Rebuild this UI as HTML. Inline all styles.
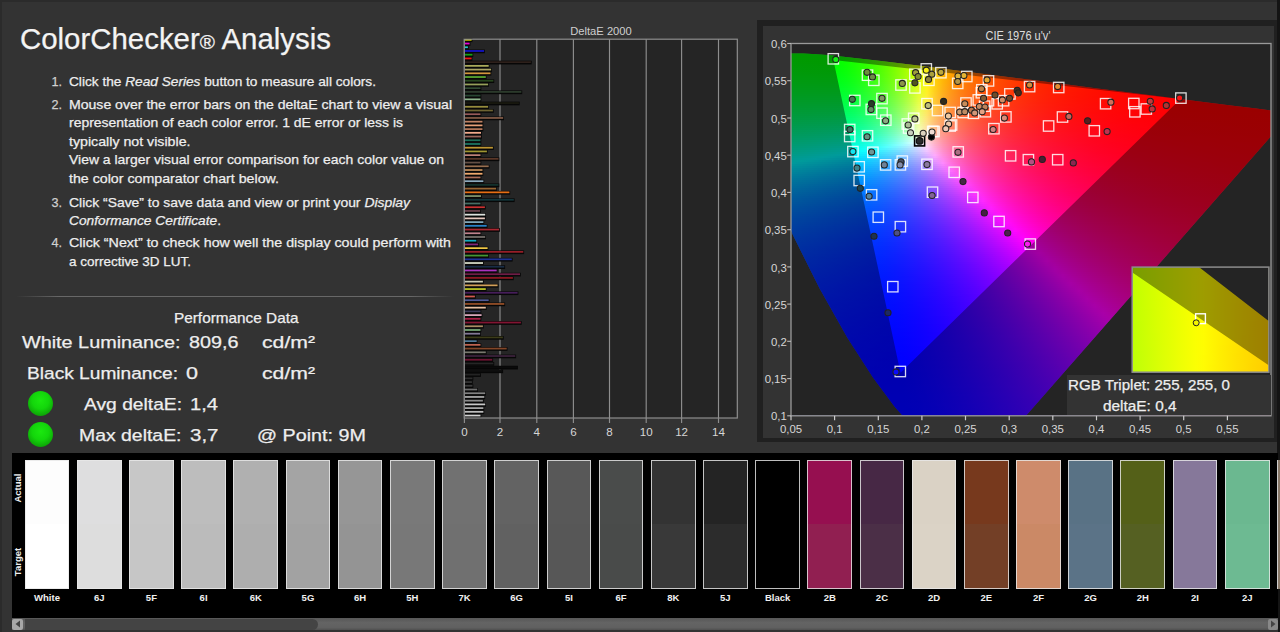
<!DOCTYPE html><html><head><meta charset="utf-8"><title>ColorChecker Analysis</title><style>
html,body{margin:0;padding:0}
body{width:1280px;height:632px;overflow:hidden;background:#333;position:relative;font-family:"Liberation Sans",sans-serif;color:#eee}
.a{position:absolute}
.t{position:absolute;white-space:nowrap;line-height:1;transform-origin:0 0;-webkit-text-stroke:0.25px currentColor}
#cf i{display:block;height:2px}
#inf i{display:block;height:2px}
svg text{font-family:"Liberation Sans",sans-serif}

</style></head><body>
<div class="a" style="left:0;top:0;width:1280px;height:2px;background:#2b2b2b"></div><div class="a" style="left:0;top:0;width:1.5px;height:632px;background:#2b2b2b"></div>
<div class="a" style="left:16px;top:295.8px;width:438px;height:1.5px;background:linear-gradient(90deg,#333,#686868 10%,#686868 90%,#333)"></div>
<div class="a" style="left:27.5px;top:390.6px;width:25px;height:25px;border-radius:50%;background:radial-gradient(circle at 50% 38%,#1be80f 0,#13d60b 42%,#0da507 76%,#097a05 100%)"></div>
<div class="a" style="left:27.5px;top:422.0px;width:25px;height:25px;border-radius:50%;background:radial-gradient(circle at 50% 38%,#1be80f 0,#13d60b 42%,#0da507 76%,#097a05 100%)"></div>
<div class="a" style="left:464.3px;top:39.2px;width:272.99999999999994px;height:378.8px;background:#252525"></div>
<svg class="a" style="left:0;top:0" width="1280" height="632" viewBox="0 0 1280 632">
<line x1="464.4" y1="39.2" x2="464.4" y2="423.0" stroke="#8e8e8e" stroke-width="1.15"/>
<text x="464.4" y="435.5" font-size="11.6" fill="#d6d6d6" text-anchor="middle">0</text>
<line x1="500.0" y1="39.2" x2="500.0" y2="423.0" stroke="#8e8e8e" stroke-width="1.15"/>
<text x="500.0" y="435.5" font-size="11.6" fill="#d6d6d6" text-anchor="middle">2</text>
<line x1="536.8" y1="39.2" x2="536.8" y2="423.0" stroke="#8e8e8e" stroke-width="1.15"/>
<text x="536.8" y="435.5" font-size="11.6" fill="#d6d6d6" text-anchor="middle">4</text>
<line x1="573.4" y1="39.2" x2="573.4" y2="423.0" stroke="#8e8e8e" stroke-width="1.15"/>
<text x="573.4" y="435.5" font-size="11.6" fill="#d6d6d6" text-anchor="middle">6</text>
<line x1="609.5" y1="39.2" x2="609.5" y2="423.0" stroke="#8e8e8e" stroke-width="1.15"/>
<text x="609.5" y="435.5" font-size="11.6" fill="#d6d6d6" text-anchor="middle">8</text>
<line x1="646.2" y1="39.2" x2="646.2" y2="423.0" stroke="#8e8e8e" stroke-width="1.15"/>
<text x="646.2" y="435.5" font-size="11.6" fill="#d6d6d6" text-anchor="middle">10</text>
<line x1="681.6" y1="39.2" x2="681.6" y2="423.0" stroke="#8e8e8e" stroke-width="1.15"/>
<text x="681.6" y="435.5" font-size="11.6" fill="#d6d6d6" text-anchor="middle">12</text>
<line x1="718.5" y1="39.2" x2="718.5" y2="423.0" stroke="#8e8e8e" stroke-width="1.15"/>
<text x="718.5" y="435.5" font-size="11.6" fill="#d6d6d6" text-anchor="middle">14</text>
<text x="601" y="34.6" font-size="11.6" fill="#cfcfcf" text-anchor="middle" textLength="61.5" lengthAdjust="spacingAndGlyphs">DeltaE 2000</text>
<rect x="464.1" y="38.40" width="8.3" height="3.7" fill="#070707"/><rect x="464.6" y="38.95" width="7.0" height="1.75" fill="#d2d200"/>
<rect x="464.1" y="42.12" width="6.3" height="3.7" fill="#070707"/><rect x="464.6" y="42.67" width="5.0" height="1.75" fill="#e600d2"/>
<rect x="464.1" y="45.84" width="4.6" height="3.7" fill="#070707"/><rect x="464.6" y="46.39" width="3.3" height="1.75" fill="#1ec8c8"/>
<rect x="464.1" y="49.56" width="20.8" height="3.7" fill="#070707"/><rect x="464.6" y="50.11" width="19.5" height="1.75" fill="#1414c8"/>
<rect x="464.1" y="53.28" width="9.2" height="3.7" fill="#070707"/><rect x="464.6" y="53.83" width="7.9" height="1.75" fill="#14a014"/>
<rect x="464.1" y="57.00" width="8.3" height="3.7" fill="#070707"/><rect x="464.6" y="57.55" width="7.0" height="1.75" fill="#f01414"/>
<rect x="464.1" y="60.72" width="67.6" height="3.7" fill="#070707"/><rect x="464.6" y="61.27" width="66.3" height="1.75" fill="#2d201b"/>
<rect x="464.1" y="64.44" width="25.4" height="3.7" fill="#070707"/><rect x="464.6" y="64.99" width="24.1" height="1.75" fill="#aaaa5a"/>
<rect x="464.1" y="68.16" width="27.8" height="3.7" fill="#070707"/><rect x="464.6" y="68.71" width="26.5" height="1.75" fill="#aaa564"/>
<rect x="464.1" y="71.88" width="27.2" height="3.7" fill="#070707"/><rect x="464.6" y="72.43" width="25.9" height="1.75" fill="#d2963c"/>
<rect x="464.1" y="75.60" width="22.5" height="3.7" fill="#070707"/><rect x="464.6" y="76.15" width="21.2" height="1.75" fill="#5aaa32"/>
<rect x="464.1" y="79.32" width="30.1" height="3.7" fill="#070707"/><rect x="464.6" y="79.87" width="28.8" height="1.75" fill="#28461e"/>
<rect x="464.1" y="83.04" width="24.8" height="3.7" fill="#070707"/><rect x="464.6" y="83.59" width="23.5" height="1.75" fill="#96a05a"/>
<rect x="464.1" y="86.76" width="17.2" height="3.7" fill="#070707"/><rect x="464.6" y="87.31" width="15.9" height="1.75" fill="#324b32"/>
<rect x="464.1" y="90.48" width="58.1" height="3.7" fill="#070707"/><rect x="464.6" y="91.03" width="56.8" height="1.75" fill="#2d3c2d"/>
<rect x="464.1" y="94.20" width="17.2" height="3.7" fill="#070707"/><rect x="464.6" y="94.75" width="15.9" height="1.75" fill="#284632"/>
<rect x="464.1" y="97.92" width="17.2" height="3.7" fill="#070707"/><rect x="464.6" y="98.47" width="15.9" height="1.75" fill="#8cb48c"/>
<rect x="464.1" y="101.64" width="55.6" height="3.7" fill="#070707"/><rect x="464.6" y="102.19" width="54.3" height="1.75" fill="#19190f"/>
<rect x="464.1" y="105.36" width="24.8" height="3.7" fill="#070707"/><rect x="464.6" y="105.91" width="23.5" height="1.75" fill="#968c3c"/>
<rect x="464.1" y="109.08" width="29.6" height="3.7" fill="#070707"/><rect x="464.6" y="109.63" width="28.3" height="1.75" fill="#6e6432"/>
<rect x="464.1" y="112.80" width="17.2" height="3.7" fill="#070707"/><rect x="464.6" y="113.35" width="15.9" height="1.75" fill="#965a5a"/>
<rect x="464.1" y="116.52" width="39.9" height="3.7" fill="#070707"/><rect x="464.6" y="117.07" width="38.6" height="1.75" fill="#825a46"/>
<rect x="464.1" y="120.24" width="19.2" height="3.7" fill="#070707"/><rect x="464.6" y="120.79" width="17.9" height="1.75" fill="#be8264"/>
<rect x="464.1" y="123.96" width="19.2" height="3.7" fill="#070707"/><rect x="464.6" y="124.51" width="17.9" height="1.75" fill="#e6a078"/>
<rect x="464.1" y="127.68" width="19.2" height="3.7" fill="#070707"/><rect x="464.6" y="128.23" width="17.9" height="1.75" fill="#b4785a"/>
<rect x="464.1" y="131.40" width="17.7" height="3.7" fill="#070707"/><rect x="464.6" y="131.95" width="16.4" height="1.75" fill="#f0aa8c"/>
<rect x="464.1" y="135.12" width="17.7" height="3.7" fill="#070707"/><rect x="464.6" y="135.67" width="16.4" height="1.75" fill="#96645a"/>
<rect x="464.1" y="138.84" width="17.2" height="3.7" fill="#070707"/><rect x="464.6" y="139.39" width="15.9" height="1.75" fill="#1e6e5a"/>
<rect x="464.1" y="142.56" width="17.2" height="3.7" fill="#070707"/><rect x="464.6" y="143.11" width="15.9" height="1.75" fill="#1e7864"/>
<rect x="464.1" y="146.28" width="29.6" height="3.7" fill="#070707"/><rect x="464.6" y="146.83" width="28.3" height="1.75" fill="#be9632"/>
<rect x="464.1" y="150.00" width="23.6" height="3.7" fill="#070707"/><rect x="464.6" y="150.55" width="22.3" height="1.75" fill="#a09632"/>
<rect x="464.1" y="153.72" width="17.2" height="3.7" fill="#070707"/><rect x="464.6" y="154.27" width="15.9" height="1.75" fill="#be8278"/>
<rect x="464.1" y="157.44" width="35.2" height="3.7" fill="#070707"/><rect x="464.6" y="157.99" width="33.9" height="1.75" fill="#5a3728"/>
<rect x="464.1" y="161.16" width="17.2" height="3.7" fill="#070707"/><rect x="464.6" y="161.71" width="15.9" height="1.75" fill="#645046"/>
<rect x="464.1" y="164.88" width="25.4" height="3.7" fill="#070707"/><rect x="464.6" y="165.43" width="24.1" height="1.75" fill="#966e50"/>
<rect x="464.1" y="168.60" width="19.2" height="3.7" fill="#070707"/><rect x="464.6" y="169.15" width="17.9" height="1.75" fill="#be8c5a"/>
<rect x="464.1" y="172.32" width="19.2" height="3.7" fill="#070707"/><rect x="464.6" y="172.87" width="17.9" height="1.75" fill="#f0aa6e"/>
<rect x="464.1" y="176.04" width="17.2" height="3.7" fill="#070707"/><rect x="464.6" y="176.59" width="15.9" height="1.75" fill="#aa6e5a"/>
<rect x="464.1" y="179.76" width="20.1" height="3.7" fill="#070707"/><rect x="464.6" y="180.31" width="18.8" height="1.75" fill="#8caabe"/>
<rect x="464.1" y="183.48" width="35.2" height="3.7" fill="#070707"/><rect x="464.6" y="184.03" width="33.9" height="1.75" fill="#14322d"/>
<rect x="464.1" y="187.20" width="32.8" height="3.7" fill="#070707"/><rect x="464.6" y="187.75" width="31.5" height="1.75" fill="#966432"/>
<rect x="464.1" y="190.92" width="46.1" height="3.7" fill="#070707"/><rect x="464.6" y="191.47" width="44.8" height="1.75" fill="#e66e14"/>
<rect x="464.1" y="194.64" width="17.7" height="3.7" fill="#070707"/><rect x="464.6" y="195.19" width="16.4" height="1.75" fill="#82966e"/>
<rect x="464.1" y="198.36" width="50.5" height="3.7" fill="#070707"/><rect x="464.6" y="198.91" width="49.2" height="1.75" fill="#14373c"/>
<rect x="464.1" y="202.08" width="17.2" height="3.7" fill="#070707"/><rect x="464.6" y="202.63" width="15.9" height="1.75" fill="#466e64"/>
<rect x="464.1" y="205.80" width="21.6" height="3.7" fill="#070707"/><rect x="464.6" y="206.35" width="20.3" height="1.75" fill="#c83232"/>
<rect x="464.1" y="209.52" width="16.8" height="3.7" fill="#070707"/><rect x="464.6" y="210.07" width="15.5" height="1.75" fill="#6e4650"/>
<rect x="464.1" y="213.24" width="21.9" height="3.7" fill="#070707"/><rect x="464.6" y="213.79" width="20.6" height="1.75" fill="#dce1dc"/>
<rect x="464.1" y="216.96" width="21.6" height="3.7" fill="#070707"/><rect x="464.6" y="217.51" width="20.3" height="1.75" fill="#e6c8be"/>
<rect x="464.1" y="220.68" width="20.1" height="3.7" fill="#070707"/><rect x="464.6" y="221.23" width="18.8" height="1.75" fill="#82aabe"/>
<rect x="464.1" y="224.40" width="23.4" height="3.7" fill="#070707"/><rect x="464.6" y="224.95" width="22.1" height="1.75" fill="#2882c8"/>
<rect x="464.1" y="228.12" width="35.8" height="3.7" fill="#070707"/><rect x="464.6" y="228.67" width="34.5" height="1.75" fill="#aa2832"/>
<rect x="464.1" y="231.84" width="17.2" height="3.7" fill="#070707"/><rect x="464.6" y="232.39" width="15.9" height="1.75" fill="#be828c"/>
<rect x="464.1" y="235.56" width="21.9" height="3.7" fill="#070707"/><rect x="464.6" y="236.11" width="20.6" height="1.75" fill="#78736e"/>
<rect x="464.1" y="239.28" width="13.0" height="3.7" fill="#070707"/><rect x="464.6" y="239.83" width="11.7" height="1.75" fill="#14aabe"/>
<rect x="464.1" y="243.00" width="14.8" height="3.7" fill="#070707"/><rect x="464.6" y="243.55" width="13.5" height="1.75" fill="#822878"/>
<rect x="464.1" y="246.72" width="24.3" height="3.7" fill="#070707"/><rect x="464.6" y="247.27" width="23.0" height="1.75" fill="#f0c846"/>
<rect x="464.1" y="250.44" width="60.0" height="3.7" fill="#070707"/><rect x="464.6" y="250.99" width="58.7" height="1.75" fill="#961e28"/>
<rect x="464.1" y="254.16" width="24.8" height="3.7" fill="#070707"/><rect x="464.6" y="254.71" width="23.5" height="1.75" fill="#469632"/>
<rect x="464.1" y="257.88" width="48.5" height="3.7" fill="#070707"/><rect x="464.6" y="258.43" width="47.2" height="1.75" fill="#1e3296"/>
<rect x="464.1" y="261.60" width="19.7" height="3.7" fill="#070707"/><rect x="464.6" y="262.15" width="18.4" height="1.75" fill="#d7dcc8"/>
<rect x="464.1" y="265.32" width="41.0" height="3.7" fill="#070707"/><rect x="464.6" y="265.87" width="39.7" height="1.75" fill="#192d46"/>
<rect x="464.1" y="269.04" width="33.4" height="3.7" fill="#070707"/><rect x="464.6" y="269.59" width="32.1" height="1.75" fill="#aa32be"/>
<rect x="464.1" y="272.76" width="56.7" height="3.7" fill="#070707"/><rect x="464.6" y="273.31" width="55.4" height="1.75" fill="#6e1e46"/>
<rect x="464.1" y="276.48" width="49.6" height="3.7" fill="#070707"/><rect x="464.6" y="277.03" width="48.3" height="1.75" fill="#8c1923"/>
<rect x="464.1" y="280.20" width="19.6" height="3.7" fill="#070707"/><rect x="464.6" y="280.75" width="18.3" height="1.75" fill="#c8c8b4"/>
<rect x="464.1" y="283.92" width="34.3" height="3.7" fill="#070707"/><rect x="464.6" y="284.47" width="33.0" height="1.75" fill="#d2a05a"/>
<rect x="464.1" y="287.64" width="22.5" height="3.7" fill="#070707"/><rect x="464.6" y="288.19" width="21.2" height="1.75" fill="#bec828"/>
<rect x="464.1" y="291.36" width="54.3" height="3.7" fill="#070707"/><rect x="464.6" y="291.91" width="53.0" height="1.75" fill="#461e5a"/>
<rect x="464.1" y="295.08" width="11.6" height="3.7" fill="#070707"/><rect x="464.6" y="295.63" width="10.3" height="1.75" fill="#d25a50"/>
<rect x="464.1" y="298.80" width="25.4" height="3.7" fill="#070707"/><rect x="464.6" y="299.35" width="24.1" height="1.75" fill="#505a96"/>
<rect x="464.1" y="302.52" width="41.0" height="3.7" fill="#070707"/><rect x="464.6" y="303.07" width="39.7" height="1.75" fill="#965028"/>
<rect x="464.1" y="306.24" width="22.5" height="3.7" fill="#070707"/><rect x="464.6" y="306.79" width="21.2" height="1.75" fill="#e6bea0"/>
<rect x="464.1" y="309.96" width="17.2" height="3.7" fill="#070707"/><rect x="464.6" y="310.51" width="15.9" height="1.75" fill="#3c3c5a"/>
<rect x="464.1" y="313.68" width="18.3" height="3.7" fill="#070707"/><rect x="464.6" y="314.23" width="17.0" height="1.75" fill="#dcaabe"/>
<rect x="464.1" y="317.40" width="17.2" height="3.7" fill="#070707"/><rect x="464.6" y="317.95" width="15.9" height="1.75" fill="#aa1e46"/>
<rect x="464.1" y="321.12" width="57.6" height="3.7" fill="#070707"/><rect x="464.6" y="321.67" width="56.3" height="1.75" fill="#821432"/>
<rect x="464.1" y="324.84" width="19.6" height="3.7" fill="#070707"/><rect x="464.6" y="325.39" width="18.3" height="1.75" fill="#aa8c64"/>
<rect x="464.1" y="328.56" width="17.2" height="3.7" fill="#070707"/><rect x="464.6" y="329.11" width="15.9" height="1.75" fill="#78aa78"/>
<rect x="464.1" y="332.28" width="16.8" height="3.7" fill="#070707"/><rect x="464.6" y="332.83" width="15.5" height="1.75" fill="#827896"/>
<rect x="464.1" y="336.00" width="39.6" height="3.7" fill="#070707"/><rect x="464.6" y="336.55" width="38.3" height="1.75" fill="#3c3c19"/>
<rect x="464.1" y="339.72" width="13.4" height="3.7" fill="#070707"/><rect x="464.6" y="340.27" width="12.1" height="1.75" fill="#507896"/>
<rect x="464.1" y="343.44" width="17.2" height="3.7" fill="#070707"/><rect x="464.6" y="343.99" width="15.9" height="1.75" fill="#be6450"/>
<rect x="464.1" y="347.16" width="43.4" height="3.7" fill="#070707"/><rect x="464.6" y="347.71" width="42.1" height="1.75" fill="#824628"/>
<rect x="464.1" y="350.88" width="22.5" height="3.7" fill="#070707"/><rect x="464.6" y="351.43" width="21.2" height="1.75" fill="#78786e"/>
<rect x="464.1" y="354.60" width="52.0" height="3.7" fill="#070707"/><rect x="464.6" y="355.15" width="50.7" height="1.75" fill="#3c233c"/>
<rect x="464.1" y="358.32" width="29.0" height="3.7" fill="#070707"/><rect x="464.6" y="358.87" width="27.7" height="1.75" fill="#6e1432"/>
<rect x="464.1" y="362.04" width="30.1" height="3.7" fill="#070707"/><rect x="464.6" y="362.59" width="28.8" height="1.75" fill="#262626"/>
<rect x="464.1" y="365.76" width="53.8" height="3.7" fill="#070707"/><rect x="464.6" y="366.31" width="52.5" height="1.75" fill="#0a0a0a"/>
<rect x="464.1" y="369.48" width="39.0" height="3.7" fill="#070707"/><rect x="464.6" y="370.03" width="37.7" height="1.75" fill="#0f0f0f"/>
<rect x="464.1" y="373.20" width="16.8" height="3.7" fill="#070707"/><rect x="464.6" y="373.75" width="15.5" height="1.75" fill="#232323"/>
<rect x="464.1" y="376.92" width="9.2" height="3.7" fill="#070707"/><rect x="464.6" y="377.47" width="7.9" height="1.75" fill="#2d2d2d"/>
<rect x="464.1" y="380.64" width="8.6" height="3.7" fill="#070707"/><rect x="464.6" y="381.19" width="7.3" height="1.75" fill="#373737"/>
<rect x="464.1" y="384.36" width="9.2" height="3.7" fill="#070707"/><rect x="464.6" y="384.91" width="7.9" height="1.75" fill="#3c3c3c"/>
<rect x="464.1" y="388.08" width="13.9" height="3.7" fill="#070707"/><rect x="464.6" y="388.63" width="12.6" height="1.75" fill="#6e6e6e"/>
<rect x="464.1" y="391.80" width="21.9" height="3.7" fill="#070707"/><rect x="464.6" y="392.35" width="20.6" height="1.75" fill="#828282"/>
<rect x="464.1" y="395.52" width="21.0" height="3.7" fill="#070707"/><rect x="464.6" y="396.07" width="19.7" height="1.75" fill="#aaaaaa"/>
<rect x="464.1" y="399.24" width="19.6" height="3.7" fill="#070707"/><rect x="464.6" y="399.79" width="18.3" height="1.75" fill="#8c8c8c"/>
<rect x="464.1" y="402.96" width="21.9" height="3.7" fill="#070707"/><rect x="464.6" y="403.51" width="20.6" height="1.75" fill="#c8c8c8"/>
<rect x="464.1" y="406.68" width="20.1" height="3.7" fill="#070707"/><rect x="464.6" y="407.23" width="18.8" height="1.75" fill="#aaaaaa"/>
<rect x="464.1" y="410.40" width="20.1" height="3.7" fill="#070707"/><rect x="464.6" y="410.95" width="18.8" height="1.75" fill="#bebebe"/>
<rect x="464.1" y="414.12" width="17.2" height="3.7" fill="#070707"/><rect x="464.6" y="414.67" width="15.9" height="1.75" fill="#d2d2d2"/>
<rect x="464.3" y="39.2" width="272.99999999999994" height="378.8" fill="none" stroke="#8e8e8e" stroke-width="1.2"/>
</svg>
<div class="a" style="left:757px;top:20px;width:520.5px;height:422px;background:#202020"></div>
<div class="a" style="left:762.5px;top:25.5px;width:511.5px;height:412px;background:#333"></div>
<div class="a" style="left:791.0px;top:43.5px;width:480.0px;height:372.3px;background:#242424"></div>
<div class="a" style="left:1277px;top:0;width:3px;height:632px;background:#141414"></div>
<div class="a" style="left:791px;top:50px;width:480.0px;height:365.8px;overflow:hidden"><div id="cf" style="width:488px"><i style="background:linear-gradient(90deg,#00ff00,#00ff00,#00ff00,#00ff00,#00ff00,#00ff00,#06ff00,#10ff00,#1dff00,#2cff00,#3eff00,#52ff00,#68ff00,#80ff00,#9bff00,#b8ff00,#d8ff00,#fcff00,#ffe000,#ffc300,#ffab00,#ff9700,#ff8600,#ff7700,#ff6a00,#ff5f00,#ff5500,#ff4c00,#ff4400,#ff3d00,#ff3700,#ff3200,#ff2c00,#ff2800,#ff2400,#ff2000,#ff1d00,#ff1900,#ff1700,#ff1400,#ff1200,#ff1000,#ff0e00,#ff0c00,#ff0a00,#ff0900,#ff0700,#ff0600,#ff0500,#ff0400,#ff0300,#ff0200,#ff0100,#ff0100,#ff0000,#ff0000,#ff0000,#ff0000,#ff0000,#ff0000,#ff0000,#ff0000)"></i><i style="background:linear-gradient(90deg,#00ff00,#00ff00,#00ff00,#00ff00,#00ff00,#00ff00,#06ff00,#10ff00,#1dff00,#2cff00,#3eff00,#51ff00,#67ff00,#80ff00,#9bff00,#b8ff00,#d9ff00,#fdff00,#ffdf00,#ffc200,#ffab00,#ff9600,#ff8500,#ff7600,#ff6900,#ff5e00,#ff5400,#ff4b00,#ff4400,#ff3d00,#ff3700,#ff3100,#ff2c00,#ff2700,#ff2300,#ff2000,#ff1c00,#ff1900,#ff1600,#ff1400,#ff1100,#ff0f00,#ff0d00,#ff0b00,#ff0a00,#ff0800,#ff0700,#ff0600,#ff0500,#ff0400,#ff0300,#ff0200,#ff0100,#ff0100,#ff0000,#ff0000,#ff0000,#ff0000,#ff0000,#ff0000,#ff0000,#ff0000)"></i><i style="background:linear-gradient(90deg,#00ff00,#00ff00,#00ff00,#00ff00,#00ff00,#00ff00,#05ff00,#0fff00,#1cff00,#2cff00,#3dff00,#51ff00,#67ff00,#80ff00,#9bff00,#b9ff00,#d9ff00,#fdff00,#ffde00,#ffc200,#ffaa00,#ff9600,#ff8400,#ff7600,#ff6900,#ff5d00,#ff5400,#ff4b00,#ff4300,#ff3c00,#ff3600,#ff3000,#ff2b00,#ff2700,#ff2300,#ff1f00,#ff1c00,#ff1900,#ff1600,#ff1300,#ff1100,#ff0f00,#ff0d00,#ff0b00,#ff0900,#ff0800,#ff0700,#ff0500,#ff0400,#ff0300,#ff0200,#ff0200,#ff0100,#ff0000,#ff0000,#ff0000,#ff0000,#ff0000,#ff0000,#ff0000,#ff0000,#ff0000)"></i><i style="background:linear-gradient(90deg,#00ff01,#00ff00,#00ff00,#00ff00,#00ff00,#00ff00,#05ff00,#0fff00,#1cff00,#2bff00,#3dff00,#51ff00,#67ff00,#80ff00,#9bff00,#b9ff00,#daff00,#feff00,#ffdd00,#ffc100,#ffa900,#ff9500,#ff8400,#ff7500,#ff6800,#ff5d00,#ff5300,#ff4a00,#ff4200,#ff3c00,#ff3500,#ff3000,#ff2b00,#ff2600,#ff2200,#ff1f00,#ff1b00,#ff1800,#ff1500,#ff1300,#ff1100,#ff0e00,#ff0d00,#ff0b00,#ff0900,#ff0800,#ff0600,#ff0500,#ff0400,#ff0300,#ff0200,#ff0200,#ff0100,#ff0000,#ff0000,#ff0000,#ff0000,#ff0000,#ff0000,#ff0000,#ff0000,#ff0000)"></i><i style="background:linear-gradient(90deg,#00ff02,#00ff01,#00ff01,#00ff00,#00ff00,#00ff00,#04ff00,#0eff00,#1bff00,#2bff00,#3cff00,#50ff00,#67ff00,#7fff00,#9bff00,#b9ff00,#dbff00,#ffff00,#ffdc00,#ffc000,#ffa800,#ff9400,#ff8300,#ff7400,#ff6700,#ff5c00,#ff5200,#ff4900,#ff4200,#ff3b00,#ff3500,#ff2f00,#ff2a00,#ff2600,#ff2200,#ff1e00,#ff1b00,#ff1800,#ff1500,#ff1300,#ff1000,#ff0e00,#ff0c00,#ff0a00,#ff0900,#ff0700,#ff0600,#ff0500,#ff0400,#ff0300,#ff0200,#ff0100,#ff0100,#ff0000,#ff0000,#ff0000,#ff0000,#ff0000,#ff0000,#ff0000,#ff0000,#ff0000)"></i><i style="background:linear-gradient(90deg,#00ff03,#00ff03,#00ff02,#00ff02,#00ff01,#00ff00,#04ff00,#0eff00,#1bff00,#2aff00,#3cff00,#50ff00,#66ff00,#7fff00,#9bff00,#b9ff00,#dbff00,#fffe00,#ffdc00,#ffbf00,#ffa700,#ff9300,#ff8200,#ff7300,#ff6600,#ff5b00,#ff5100,#ff4900,#ff4100,#ff3a00,#ff3400,#ff2f00,#ff2a00,#ff2500,#ff2100,#ff1e00,#ff1a00,#ff1700,#ff1500,#ff1200,#ff1000,#ff0e00,#ff0c00,#ff0a00,#ff0900,#ff0700,#ff0600,#ff0500,#ff0400,#ff0300,#ff0200,#ff0100,#ff0100,#ff0000,#ff0000,#ff0000,#ff0000,#ff0000,#ff0000,#ff0000,#ff0000,#ff0000)"></i><i style="background:linear-gradient(90deg,#00ff05,#00ff05,#00ff04,#00ff03,#00ff02,#00ff02,#04ff01,#0dff01,#1aff00,#2aff00,#3bff00,#4fff00,#66ff00,#7fff00,#9bff00,#baff00,#dcff00,#fffd00,#ffdb00,#ffbe00,#ffa600,#ff9200,#ff8100,#ff7200,#ff6600,#ff5a00,#ff5100,#ff4800,#ff4000,#ff3a00,#ff3400,#ff2e00,#ff2900,#ff2500,#ff2100,#ff1d00,#ff1a00,#ff1700,#ff1400,#ff1200,#ff0f00,#ff0d00,#ff0c00,#ff0a00,#ff0800,#ff0700,#ff0600,#ff0400,#ff0300,#ff0300,#ff0200,#ff0100,#ff0000,#ff0000,#ff0000,#ff0000,#ff0000,#ff0000,#ff0000,#ff0000,#ff0000,#ff0000)"></i><i style="background:linear-gradient(90deg,#00ff07,#00ff06,#00ff06,#00ff05,#00ff04,#00ff04,#03ff03,#0dff02,#1aff01,#29ff01,#3bff00,#4fff00,#66ff00,#7fff00,#9bff00,#baff00,#dcff00,#fffd00,#ffda00,#ffbd00,#ffa500,#ff9100,#ff8000,#ff7100,#ff6500,#ff5a00,#ff5000,#ff4700,#ff4000,#ff3900,#ff3300,#ff2e00,#ff2900,#ff2400,#ff2000,#ff1d00,#ff1900,#ff1600,#ff1400,#ff1100,#ff0f00,#ff0d00,#ff0b00,#ff0a00,#ff0800,#ff0700,#ff0500,#ff0400,#ff0300,#ff0200,#ff0200,#ff0100,#ff0000,#ff0000,#ff0000,#ff0000,#ff0000,#ff0000,#ff0000,#ff0000,#ff0000,#ff0000)"></i><i style="background:linear-gradient(90deg,#00ff09,#00ff09,#00ff08,#00ff07,#00ff06,#00ff06,#03ff05,#0cff04,#19ff03,#29ff02,#3aff02,#4fff01,#66ff00,#7fff00,#9bff00,#baff00,#ddff00,#fffc00,#ffd900,#ffbc00,#ffa400,#ff9000,#ff7f00,#ff7100,#ff6400,#ff5900,#ff4f00,#ff4700,#ff3f00,#ff3800,#ff3200,#ff2d00,#ff2800,#ff2400,#ff2000,#ff1c00,#ff1900,#ff1600,#ff1300,#ff1100,#ff0f00,#ff0d00,#ff0b00,#ff0900,#ff0800,#ff0600,#ff0500,#ff0400,#ff0300,#ff0200,#ff0100,#ff0100,#ff0000,#ff0000,#ff0000,#ff0000,#ff0000,#ff0000,#ff0000,#ff0000,#ff0000,#ff0000)"></i><i style="background:linear-gradient(90deg,#00ff0c,#00ff0b,#00ff0a,#00ff09,#00ff09,#00ff08,#02ff07,#0cff06,#19ff05,#28ff04,#3aff04,#4eff03,#65ff02,#7fff01,#9bff01,#bbff00,#ddff00,#fffb00,#ffd800,#ffbb00,#ffa400,#ff9000,#ff7e00,#ff7000,#ff6300,#ff5800,#ff4e00,#ff4600,#ff3e00,#ff3800,#ff3200,#ff2c00,#ff2800,#ff2300,#ff1f00,#ff1c00,#ff1900,#ff1600,#ff1300,#ff1100,#ff0e00,#ff0c00,#ff0b00,#ff0900,#ff0700,#ff0600,#ff0500,#ff0400,#ff0300,#ff0200,#ff0100,#ff0100,#ff0000,#ff0000,#ff0000,#ff0000,#ff0000,#ff0000,#ff0000,#ff0000,#ff0000,#ff0000)"></i><i style="background:linear-gradient(90deg,#00ff0e,#00ff0d,#00ff0c,#00ff0c,#00ff0b,#00ff0a,#02ff09,#0bff09,#18ff08,#28ff07,#39ff06,#4eff05,#65ff04,#7fff03,#9bff02,#bbff02,#deff01,#fffa00,#ffd700,#ffba00,#ffa300,#ff8f00,#ff7e00,#ff6f00,#ff6200,#ff5700,#ff4e00,#ff4500,#ff3e00,#ff3700,#ff3100,#ff2c00,#ff2700,#ff2300,#ff1f00,#ff1b00,#ff1800,#ff1500,#ff1300,#ff1000,#ff0e00,#ff0c00,#ff0a00,#ff0900,#ff0700,#ff0600,#ff0500,#ff0400,#ff0300,#ff0200,#ff0100,#ff0000,#ff0000,#ff0000,#ff0000,#ff0000,#ff0000,#ff0000,#ff0000,#ff0000,#ff0000,#ff0000)"></i><i style="background:linear-gradient(90deg,#00ff10,#00ff10,#00ff0f,#00ff0e,#00ff0e,#00ff0d,#02ff0c,#0bff0b,#18ff0a,#27ff09,#39ff09,#4eff08,#65ff07,#7fff06,#9bff05,#bbff04,#deff03,#fff902,#ffd601,#ffba00,#ffa200,#ff8e00,#ff7d00,#ff6e00,#ff6200,#ff5700,#ff4d00,#ff4500,#ff3d00,#ff3600,#ff3100,#ff2b00,#ff2600,#ff2200,#ff1e00,#ff1b00,#ff1800,#ff1500,#ff1200,#ff1000,#ff0e00,#ff0c00,#ff0a00,#ff0800,#ff0700,#ff0600,#ff0400,#ff0300,#ff0200,#ff0200,#ff0100,#ff0000,#ff0000,#ff0000,#ff0000,#ff0000,#ff0000,#ff0000,#ff0000,#ff0000,#ff0000,#ff0000)"></i><i style="background:linear-gradient(90deg,#00ff13,#00ff12,#00ff12,#00ff11,#00ff10,#00ff10,#01ff0f,#0aff0e,#17ff0d,#26ff0c,#39ff0b,#4dff0a,#64ff09,#7eff08,#9bff08,#bbff06,#dfff05,#fff804,#ffd503,#ffb902,#ffa101,#ff8d00,#ff7c00,#ff6d00,#ff6100,#ff5600,#ff4c00,#ff4400,#ff3c00,#ff3600,#ff3000,#ff2b00,#ff2600,#ff2200,#ff1e00,#ff1a00,#ff1700,#ff1400,#ff1200,#ff0f00,#ff0d00,#ff0b00,#ff0a00,#ff0800,#ff0700,#ff0500,#ff0400,#ff0300,#ff0200,#ff0100,#ff0100,#ff0000,#ff0000,#ff0000,#ff0000,#ff0000,#ff0000,#ff0000,#ff0000,#ff0000,#ff0000,#ff0000)"></i><i style="background:linear-gradient(90deg,#00ff16,#00ff15,#00ff15,#00ff14,#00ff13,#00ff12,#01ff12,#0aff11,#17ff10,#26ff0f,#38ff0e,#4dff0d,#64ff0c,#7eff0c,#9bff0b,#bcff0a,#dfff08,#fff707,#ffd405,#ffb804,#ffa003,#ff8c02,#ff7b01,#ff6c00,#ff6000,#ff5500,#ff4b00,#ff4300,#ff3c00,#ff3500,#ff2f00,#ff2a00,#ff2500,#ff2100,#ff1d00,#ff1a00,#ff1700,#ff1400,#ff1100,#ff0f00,#ff0d00,#ff0b00,#ff0900,#ff0800,#ff0600,#ff0500,#ff0400,#ff0300,#ff0200,#ff0100,#ff0100,#ff0000,#ff0000,#ff0000,#ff0000,#ff0000,#ff0000,#ff0000,#ff0000,#ff0000,#ff0000,#ff0000)"></i><i style="background:linear-gradient(90deg,#00ff19,#00ff18,#00ff18,#00ff17,#00ff16,#00ff16,#01ff15,#09ff14,#16ff13,#25ff12,#38ff12,#4cff11,#64ff10,#7eff0f,#9cff0e,#bcff0d,#e0ff0c,#fff70a,#ffd308,#ffb706,#ff9f05,#ff8b03,#ff7a02,#ff6c02,#ff5f01,#ff5400,#ff4b00,#ff4200,#ff3b00,#ff3400,#ff2f00,#ff2900,#ff2500,#ff2100,#ff1d00,#ff1900,#ff1600,#ff1400,#ff1100,#ff0f00,#ff0d00,#ff0b00,#ff0900,#ff0700,#ff0600,#ff0500,#ff0400,#ff0300,#ff0200,#ff0100,#ff0000,#ff0000,#ff0000,#ff0000,#ff0000,#ff0000,#ff0000,#ff0000,#ff0000,#ff0000,#ff0000,#ff0000)"></i><i style="background:linear-gradient(90deg,#00ff1c,#00ff1b,#00ff1b,#00ff1a,#00ff19,#00ff19,#01ff18,#09ff17,#15ff17,#25ff16,#37ff15,#4cff14,#64ff13,#7eff12,#9cff11,#bcff10,#e1ff0f,#fff60e,#ffd20b,#ffb609,#ff9e07,#ff8a05,#ff7904,#ff6b03,#ff5e02,#ff5301,#ff4a01,#ff4200,#ff3a00,#ff3400,#ff2e00,#ff2900,#ff2400,#ff2000,#ff1c00,#ff1900,#ff1600,#ff1300,#ff1100,#ff0e00,#ff0c00,#ff0a00,#ff0900,#ff0700,#ff0600,#ff0500,#ff0300,#ff0200,#ff0200,#ff0100,#ff0000,#ff0000,#ff0000,#ff0000,#ff0000,#ff0000,#ff0000,#ff0000,#ff0000,#ff0000,#ff0000,#ff0000)"></i><i style="background:linear-gradient(90deg,#00ff1f,#00ff1e,#00ff1e,#00ff1d,#00ff1d,#00ff1c,#00ff1b,#08ff1b,#15ff1a,#24ff19,#37ff19,#4cff18,#63ff17,#7eff16,#9cff15,#bdff14,#e1ff13,#fff512,#ffd20e,#ffb50b,#ff9d09,#ff8907,#ff7806,#ff6a05,#ff5d04,#ff5303,#ff4902,#ff4101,#ff3a01,#ff3300,#ff2d00,#ff2800,#ff2400,#ff2000,#ff1c00,#ff1800,#ff1500,#ff1300,#ff1000,#ff0e00,#ff0c00,#ff0a00,#ff0800,#ff0700,#ff0600,#ff0400,#ff0300,#ff0200,#ff0100,#ff0100,#ff0000,#ff0000,#ff0000,#ff0000,#ff0000,#ff0000,#ff0000,#ff0000,#ff0000,#ff0000,#ff0000,#ff0000)"></i><i style="background:linear-gradient(90deg,#00ff22,#00ff22,#00ff21,#00ff21,#00ff20,#00ff20,#00ff1f,#08ff1e,#14ff1e,#24ff1d,#36ff1c,#4bff1c,#63ff1b,#7eff1a,#9cff19,#bdff19,#e2ff18,#fff416,#ffd112,#ffb40f,#ff9c0c,#ff880a,#ff7708,#ff6907,#ff5d05,#ff5204,#ff4903,#ff4003,#ff3902,#ff3301,#ff2d01,#ff2800,#ff2300,#ff1f00,#ff1b00,#ff1800,#ff1500,#ff1200,#ff1000,#ff0e00,#ff0c00,#ff0a00,#ff0800,#ff0700,#ff0500,#ff0400,#ff0300,#ff0200,#ff0100,#ff0100,#ff0000,#ff0000,#ff0000,#ff0000,#ff0000,#ff0000,#ff0000,#ff0000,#ff0000,#ff0000,#ff0000,#ff0000)"></i><i style="background:linear-gradient(90deg,#00ff26,#00ff25,#00ff25,#00ff24,#00ff24,#00ff23,#00ff23,#07ff22,#14ff22,#23ff21,#36ff20,#4bff20,#63ff1f,#7eff1e,#9cff1e,#bdff1d,#e2ff1c,#fff31a,#ffd015,#ffb312,#ff9b0f,#ff870c,#ff770a,#ff6809,#ff5c07,#ff5106,#ff4805,#ff4004,#ff3803,#ff3202,#ff2c02,#ff2701,#ff2301,#ff1f01,#ff1b00,#ff1800,#ff1500,#ff1200,#ff0f00,#ff0d00,#ff0b00,#ff0900,#ff0800,#ff0600,#ff0500,#ff0400,#ff0300,#ff0200,#ff0100,#ff0000,#ff0000,#ff0000,#ff0000,#ff0000,#ff0000,#ff0000,#ff0000,#ff0000,#ff0000,#ff0000,#ff0000,#ff0000)"></i><i style="background:linear-gradient(90deg,#00ff29,#00ff29,#00ff28,#00ff28,#00ff28,#00ff27,#00ff27,#07ff26,#13ff26,#23ff25,#35ff25,#4aff24,#62ff23,#7eff23,#9cff22,#beff22,#e3ff21,#fff21e,#ffcf19,#ffb215,#ff9a12,#ff860f,#ff760d,#ff670b,#ff5b09,#ff5008,#ff4706,#ff3f05,#ff3804,#ff3104,#ff2c03,#ff2702,#ff2202,#ff1e01,#ff1a01,#ff1701,#ff1400,#ff1100,#ff0f00,#ff0d00,#ff0b00,#ff0900,#ff0700,#ff0600,#ff0500,#ff0400,#ff0300,#ff0200,#ff0100,#ff0000,#ff0000,#ff0000,#ff0000,#ff0000,#ff0000,#ff0000,#ff0000,#ff0000,#ff0000,#ff0000,#ff0000,#ff0000)"></i><i style="background:linear-gradient(90deg,#00ff2d,#00ff2c,#00ff2c,#00ff2c,#00ff2b,#00ff2b,#00ff2b,#07ff2a,#13ff2a,#22ff29,#35ff29,#4aff29,#62ff28,#7dff28,#9cff27,#beff26,#e4ff26,#fff123,#ffce1d,#ffb119,#ff9915,#ff8512,#ff750f,#ff660d,#ff5a0b,#ff5009,#ff4608,#ff3e07,#ff3706,#ff3105,#ff2b04,#ff2603,#ff2103,#ff1d02,#ff1a02,#ff1701,#ff1401,#ff1101,#ff0f00,#ff0c00,#ff0a00,#ff0900,#ff0700,#ff0600,#ff0400,#ff0300,#ff0200,#ff0100,#ff0100,#ff0000,#ff0000,#ff0000,#ff0000,#ff0000,#ff0000,#ff0000,#ff0000,#ff0000,#ff0000,#ff0000,#ff0000,#ff0000)"></i><i style="background:linear-gradient(90deg,#00ff30,#00ff30,#00ff30,#00ff30,#00ff2f,#00ff2f,#00ff2f,#06ff2f,#12ff2e,#22ff2e,#34ff2e,#49ff2d,#62ff2d,#7dff2c,#9cff2c,#beff2c,#e4ff2b,#fff028,#ffcd22,#ffb01d,#ff9818,#ff8415,#ff7412,#ff660f,#ff590d,#ff4f0b,#ff450a,#ff3d08,#ff3607,#ff3006,#ff2a05,#ff2504,#ff2104,#ff1d03,#ff1903,#ff1602,#ff1302,#ff1101,#ff0e01,#ff0c01,#ff0a00,#ff0800,#ff0700,#ff0500,#ff0400,#ff0300,#ff0200,#ff0100,#ff0100,#ff0000,#ff0000,#ff0000,#ff0000,#ff0000,#ff0000,#ff0000,#ff0000,#ff0000,#ff0000,#ff0000,#ff0000,#ff0000)"></i><i style="background:linear-gradient(90deg,#00ff34,#00ff34,#00ff34,#00ff34,#00ff34,#00ff33,#00ff33,#06ff33,#12ff33,#21ff32,#33ff32,#49ff32,#61ff32,#7dff31,#9cff31,#bfff31,#e5ff31,#ffef2d,#ffcc26,#ffaf21,#ff971c,#ff8418,#ff7315,#ff6512,#ff5810,#ff4e0e,#ff450c,#ff3d0a,#ff3609,#ff2f08,#ff2a07,#ff2506,#ff2005,#ff1c04,#ff1903,#ff1603,#ff1302,#ff1002,#ff0e02,#ff0c01,#ff0a01,#ff0801,#ff0700,#ff0500,#ff0400,#ff0300,#ff0200,#ff0100,#ff0000,#ff0000,#ff0000,#ff0000,#ff0000,#ff0000,#ff0000,#ff0000,#ff0000,#ff0000,#ff0000,#ff0000,#ff0000,#ff0000)"></i><i style="background:linear-gradient(90deg,#00ff38,#00ff38,#00ff38,#00ff38,#00ff38,#00ff38,#00ff38,#05ff37,#11ff37,#20ff37,#33ff37,#49ff37,#61ff37,#7dff37,#9cff37,#bfff36,#e6ff36,#ffee33,#ffcb2b,#ffae25,#ff9620,#ff831b,#ff7218,#ff6415,#ff5812,#ff4d10,#ff440e,#ff3c0c,#ff350b,#ff2f09,#ff2908,#ff2407,#ff2006,#ff1c05,#ff1805,#ff1504,#ff1203,#ff1003,#ff0d02,#ff0b02,#ff0901,#ff0801,#ff0601,#ff0501,#ff0400,#ff0300,#ff0200,#ff0100,#ff0000,#ff0000,#ff0000,#ff0000,#ff0000,#ff0000,#ff0000,#ff0000,#ff0000,#ff0000,#ff0000,#ff0000,#ff0000,#ff0000)"></i><i style="background:linear-gradient(90deg,#00ff3c,#00ff3c,#00ff3c,#00ff3c,#00ff3c,#00ff3c,#00ff3c,#05ff3c,#10ff3c,#20ff3c,#32ff3c,#48ff3c,#61ff3c,#7dff3c,#9cff3c,#bfff3c,#e6ff3c,#ffed38,#ffca30,#ffad29,#ff9523,#ff821f,#ff711b,#ff6317,#ff5715,#ff4c12,#ff4310,#ff3b0e,#ff340c,#ff2e0b,#ff290a,#ff2408,#ff1f07,#ff1b06,#ff1806,#ff1505,#ff1204,#ff0f04,#ff0d03,#ff0b03,#ff0902,#ff0702,#ff0601,#ff0501,#ff0301,#ff0201,#ff0200,#ff0100,#ff0000,#ff0000,#ff0000,#ff0000,#ff0000,#ff0000,#ff0000,#ff0000,#ff0000,#ff0000,#ff0000,#ff0000,#ff0000,#ff0000)"></i><i style="background:linear-gradient(90deg,#00ff40,#00ff40,#00ff41,#00ff41,#00ff41,#00ff41,#00ff41,#04ff41,#10ff41,#1fff41,#32ff41,#48ff42,#61ff42,#7dff42,#9cff42,#c0ff42,#e7ff42,#ffec3e,#ffc935,#ffac2d,#ff9427,#ff8122,#ff701e,#ff621a,#ff5617,#ff4b14,#ff4212,#ff3a10,#ff340e,#ff2d0d,#ff280b,#ff230a,#ff1f09,#ff1b08,#ff1707,#ff1406,#ff1105,#ff0f05,#ff0d04,#ff0b03,#ff0903,#ff0702,#ff0602,#ff0402,#ff0301,#ff0201,#ff0101,#ff0101,#ff0000,#ff0000,#ff0000,#ff0000,#ff0000,#ff0000,#ff0000,#ff0000,#ff0000,#ff0000,#ff0000,#ff0000,#ff0000,#ff0000)"></i><i style="background:linear-gradient(90deg,#00ff45,#00ff45,#00ff45,#00ff45,#00ff45,#00ff46,#00ff46,#04ff46,#0fff46,#1fff47,#31ff47,#47ff47,#60ff48,#7dff48,#9cff48,#c0ff49,#e8ff49,#ffeb44,#ffc83a,#ffab32,#ff932b,#ff8026,#ff6f21,#ff611d,#ff551a,#ff4b17,#ff4214,#ff3a12,#ff3310,#ff2d0e,#ff270d,#ff220b,#ff1e0a,#ff1a09,#ff1708,#ff1407,#ff1106,#ff0f06,#ff0c05,#ff0a04,#ff0804,#ff0703,#ff0503,#ff0402,#ff0302,#ff0202,#ff0101,#ff0001,#ff0001,#ff0001,#ff0000,#ff0000,#ff0000,#ff0000,#ff0000,#ff0000,#ff0000,#ff0000,#ff0000,#ff0000,#ff0000,#ff0000)"></i><i style="background:linear-gradient(90deg,#00ff49,#00ff49,#00ff4a,#00ff4a,#00ff4a,#00ff4b,#00ff4b,#03ff4b,#0fff4c,#1eff4c,#31ff4d,#47ff4d,#60ff4d,#7cff4e,#9cff4f,#c0ff4f,#e9ff50,#ffea4a,#ffc73f,#ffaa37,#ff922f,#ff7f2a,#ff6e25,#ff6020,#ff541d,#ff4a19,#ff4117,#ff3914,#ff3212,#ff2c10,#ff270f,#ff220d,#ff1e0c,#ff1a0a,#ff1609,#ff1308,#ff1108,#ff0e07,#ff0c06,#ff0a05,#ff0805,#ff0704,#ff0504,#ff0403,#ff0303,#ff0202,#ff0102,#ff0002,#ff0001,#ff0001,#ff0001,#ff0001,#ff0000,#ff0000,#ff0000,#ff0000,#ff0000,#ff0000,#ff0000,#ff0000,#ff0000,#ff0000)"></i><i style="background:linear-gradient(90deg,#00ff4e,#00ff4e,#00ff4e,#00ff4f,#00ff4f,#00ff50,#00ff50,#03ff51,#0eff51,#1dff52,#30ff52,#46ff53,#60ff54,#7cff54,#9dff55,#c1ff56,#e9ff57,#ffe950,#ffc645,#ffa93b,#ff9134,#ff7e2d,#ff6d28,#ff5f23,#ff531f,#ff491c,#ff4019,#ff3816,#ff3114,#ff2b12,#ff2610,#ff210f,#ff1d0d,#ff190c,#ff160b,#ff130a,#ff1009,#ff0e08,#ff0c07,#ff0a06,#ff0806,#ff0605,#ff0504,#ff0404,#ff0303,#ff0203,#ff0103,#ff0002,#ff0002,#ff0002,#ff0001,#ff0001,#ff0001,#ff0001,#ff0000,#ff0000,#ff0000,#ff0000,#ff0000,#ff0000,#ff0000,#ff0000)"></i><i style="background:linear-gradient(90deg,#00ff52,#00ff53,#00ff53,#00ff54,#00ff54,#00ff55,#00ff55,#02ff56,#0eff57,#1dff58,#30ff58,#46ff59,#5fff5a,#7cff5b,#9dff5c,#c1ff5d,#eaff5e,#ffe857,#ffc54a,#ffa840,#ff9038,#ff7d31,#ff6c2c,#ff5e27,#ff5222,#ff481f,#ff3f1c,#ff3819,#ff3116,#ff2b14,#ff2512,#ff2110,#ff1d0f,#ff190d,#ff150c,#ff120b,#ff100a,#ff0d09,#ff0b08,#ff0907,#ff0707,#ff0606,#ff0505,#ff0305,#ff0204,#ff0104,#ff0103,#ff0003,#ff0002,#ff0002,#ff0002,#ff0002,#ff0001,#ff0001,#ff0001,#ff0001,#ff0000,#ff0000,#ff0000,#ff0000,#ff0000,#ff0000)"></i><i style="background:linear-gradient(90deg,#00ff57,#00ff57,#00ff58,#00ff59,#00ff59,#00ff5a,#00ff5b,#02ff5c,#0dff5d,#1cff5e,#2fff5e,#45ff5f,#5fff61,#7cff62,#9dff63,#c2ff64,#ebff66,#ffe75d,#ffc450,#ffa745,#ff8f3d,#ff7c35,#ff6b2f,#ff5d2a,#ff5225,#ff4722,#ff3f1e,#ff371b,#ff3019,#ff2a16,#ff2514,#ff2012,#ff1c11,#ff180f,#ff150e,#ff120c,#ff0f0b,#ff0d0a,#ff0b09,#ff0908,#ff0708,#ff0607,#ff0406,#ff0306,#ff0205,#ff0104,#ff0104,#ff0004,#ff0003,#ff0003,#ff0002,#ff0002,#ff0002,#ff0002,#ff0001,#ff0001,#ff0001,#ff0001,#ff0000,#ff0000,#ff0000,#ff0000)"></i><i style="background:linear-gradient(90deg,#00ff5c,#00ff5c,#00ff5d,#00ff5e,#00ff5f,#00ff60,#00ff61,#02ff62,#0cff63,#1cff64,#2eff65,#45ff66,#5eff67,#7cff69,#9dff6a,#c2ff6c,#ecff6d,#ffe664,#ffc356,#ffa64b,#ff8e41,#ff7b3a,#ff6a33,#ff5d2d,#ff5129,#ff4724,#ff3e21,#ff361e,#ff2f1b,#ff2918,#ff2416,#ff2014,#ff1b12,#ff1811,#ff140f,#ff110e,#ff0f0d,#ff0c0b,#ff0a0a,#ff080a,#ff0709,#ff0508,#ff0407,#ff0306,#ff0206,#ff0105,#ff0005,#ff0004,#ff0004,#ff0003,#ff0003,#ff0003,#ff0002,#ff0002,#ff0002,#ff0001,#ff0001,#ff0001,#ff0001,#ff0001,#ff0000,#ff0000)"></i><i style="background:linear-gradient(90deg,#00ff61,#00ff62,#00ff62,#00ff63,#00ff64,#00ff65,#00ff66,#01ff68,#0cff69,#1bff6a,#2eff6b,#44ff6d,#5eff6e,#7cff70,#9dff72,#c2ff73,#ecff75,#ffe56b,#ffc15c,#ffa550,#ff8d46,#ff7a3e,#ff6937,#ff5c31,#ff502c,#ff4627,#ff3d23,#ff3520,#ff2f1d,#ff291a,#ff2418,#ff1f16,#ff1b14,#ff1712,#ff1411,#ff110f,#ff0e0e,#ff0c0d,#ff0a0c,#ff080b,#ff060a,#ff0509,#ff0408,#ff0307,#ff0207,#ff0106,#ff0006,#ff0005,#ff0005,#ff0004,#ff0004,#ff0003,#ff0003,#ff0003,#ff0002,#ff0002,#ff0002,#ff0001,#ff0001,#ff0001,#ff0001,#ff0001)"></i><i style="background:linear-gradient(90deg,#00ff66,#00ff67,#00ff68,#00ff69,#00ff6a,#00ff6b,#00ff6c,#01ff6e,#0bff6f,#1aff71,#2dff72,#44ff74,#5eff76,#7bff77,#9dff79,#c3ff7b,#edff7e,#ffe473,#ffc063,#ffa456,#ff8c4b,#ff7942,#ff683b,#ff5b35,#ff4f2f,#ff452a,#ff3c26,#ff3523,#ff2e1f,#ff281d,#ff231a,#ff1e18,#ff1a16,#ff1714,#ff1312,#ff1111,#ff0e0f,#ff0c0e,#ff0a0d,#ff080c,#ff060b,#ff050a,#ff0309,#ff0208,#ff0108,#ff0107,#ff0006,#ff0006,#ff0005,#ff0005,#ff0004,#ff0004,#ff0004,#ff0003,#ff0003,#ff0002,#ff0002,#ff0002,#ff0002,#ff0001,#ff0001,#ff0001)"></i><i style="background:linear-gradient(90deg,#00ff6b,#00ff6c,#00ff6d,#00ff6e,#00ff70,#00ff71,#00ff73,#01ff74,#0bff76,#1aff77,#2dff79,#43ff7b,#5dff7d,#7bff7f,#9dff81,#c3ff84,#eeff86,#ffe37a,#ffbf69,#ffa35b,#ff8b50,#ff7847,#ff683f,#ff5a38,#ff4e32,#ff442d,#ff3b29,#ff3425,#ff2d22,#ff271f,#ff221c,#ff1e1a,#ff1a18,#ff1616,#ff1314,#ff1012,#ff0e11,#ff0b0f,#ff090e,#ff070d,#ff060c,#ff040b,#ff030a,#ff0209,#ff0109,#ff0108,#ff0007,#ff0007,#ff0006,#ff0006,#ff0005,#ff0005,#ff0004,#ff0004,#ff0003,#ff0003,#ff0003,#ff0002,#ff0002,#ff0002,#ff0002,#ff0001)"></i><i style="background:linear-gradient(90deg,#00ff70,#00ff72,#00ff73,#00ff74,#00ff76,#00ff77,#00ff79,#00ff7b,#0aff7c,#19ff7e,#2cff80,#43ff82,#5dff85,#7bff87,#9dff8a,#c4ff8c,#efff8f,#ffe282,#ffbe70,#ffa161,#ff8a55,#ff774b,#ff6743,#ff593c,#ff4d36,#ff4331,#ff3b2c,#ff3328,#ff2d24,#ff2721,#ff221e,#ff1d1c,#ff1919,#ff1617,#ff1216,#ff1014,#ff0d12,#ff0b11,#ff0910,#ff070e,#ff060d,#ff040c,#ff030b,#ff020a,#ff010a,#ff0009,#ff0008,#ff0007,#ff0007,#ff0006,#ff0006,#ff0005,#ff0005,#ff0004,#ff0004,#ff0004,#ff0003,#ff0003,#ff0003,#ff0002,#ff0002,#ff0002)"></i><i style="background:linear-gradient(90deg,#00ff76,#00ff77,#00ff79,#00ff7a,#00ff7c,#00ff7e,#00ff7f,#00ff81,#09ff83,#18ff85,#2bff88,#42ff8a,#5dff8d,#7bff8f,#9dff92,#c4ff95,#f0ff99,#ffe18a,#ffbd77,#ffa067,#ff895b,#ff7650,#ff6647,#ff5840,#ff4c39,#ff4234,#ff3a2f,#ff322b,#ff2c27,#ff2624,#ff2121,#ff1d1e,#ff191b,#ff1519,#ff1217,#ff0f15,#ff0d14,#ff0b12,#ff0911,#ff0710,#ff050e,#ff040d,#ff030c,#ff020b,#ff010b,#ff000a,#ff0009,#ff0008,#ff0008,#ff0007,#ff0007,#ff0006,#ff0006,#ff0005,#ff0005,#ff0004,#ff0004,#ff0003,#ff0003,#ff0003,#ff0003,#ff0002)"></i><i style="background:linear-gradient(90deg,#00ff7b,#00ff7d,#00ff7f,#00ff80,#00ff82,#00ff84,#00ff86,#00ff88,#09ff8a,#18ff8d,#2bff8f,#42ff92,#5cff95,#7bff98,#9dff9b,#c5ff9e,#f1ffa2,#ffe092,#ffbc7e,#ff9f6d,#ff8860,#ff7555,#ff654c,#ff5744,#ff4c3d,#ff4237,#ff3932,#ff322d,#ff2b29,#ff2526,#ff2023,#ff1c20,#ff181d,#ff151b,#ff1219,#ff0f17,#ff0c15,#ff0a14,#ff0812,#ff0611,#ff0510,#ff040f,#ff020e,#ff010d,#ff010c,#ff000b,#ff000a,#ff0009,#ff0009,#ff0008,#ff0007,#ff0007,#ff0006,#ff0006,#ff0005,#ff0005,#ff0004,#ff0004,#ff0004,#ff0003,#ff0003,#ff0003)"></i><i style="background:linear-gradient(90deg,#00ff81,#00ff83,#00ff85,#00ff86,#00ff88,#00ff8b,#00ff8d,#00ff8f,#08ff92,#17ff94,#2aff97,#41ff9a,#5cff9d,#7bffa0,#9dffa4,#c5ffa8,#f2ffac,#ffdf9a,#ffbb85,#ff9e74,#ff8766,#ff745a,#ff6450,#ff5648,#ff4b41,#ff413a,#ff3835,#ff3130,#ff2a2c,#ff2528,#ff2025,#ff1b22,#ff181f,#ff141d,#ff111b,#ff0e19,#ff0c17,#ff0a15,#ff0814,#ff0612,#ff0511,#ff0310,#ff020f,#ff010e,#ff010d,#ff000c,#ff000b,#ff000a,#ff0009,#ff0009,#ff0008,#ff0008,#ff0007,#ff0006,#ff0006,#ff0006,#ff0005,#ff0005,#ff0004,#ff0004,#ff0004,#ff0003)"></i><i style="background:linear-gradient(90deg,#00ff87,#00ff89,#00ff8b,#00ff8d,#00ff8f,#00ff91,#00ff94,#00ff96,#08ff99,#17ff9c,#2aff9f,#41ffa2,#5bffa6,#7affa9,#9effad,#c5ffb2,#f2ffb6,#ffdea3,#ffba8c,#ff9d7a,#ff866b,#ff735f,#ff6355,#ff554c,#ff4a44,#ff403e,#ff3738,#ff3033,#ff2a2f,#ff242b,#ff1f27,#ff1b24,#ff1721,#ff141f,#ff111d,#ff0e1a,#ff0b19,#ff0917,#ff0715,#ff0614,#ff0412,#ff0311,#ff0210,#ff010f,#ff000e,#ff000d,#ff000c,#ff000b,#ff000a,#ff000a,#ff0009,#ff0008,#ff0008,#ff0007,#ff0007,#ff0006,#ff0006,#ff0005,#ff0005,#ff0004,#ff0004,#ff0004)"></i><i style="background:linear-gradient(90deg,#00ff8d,#00ff8f,#00ff91,#00ff93,#00ff96,#00ff98,#00ff9b,#00ff9e,#07ffa1,#16ffa4,#29ffa7,#40ffab,#5bffaf,#7affb3,#9effb7,#c6ffbc,#f3ffc1,#ffddac,#ffb994,#ff9c81,#ff8571,#ff7164,#ff6259,#ff5450,#ff4948,#ff3f41,#ff373b,#ff2f36,#ff2932,#ff242d,#ff1f2a,#ff1a27,#ff1624,#ff1321,#ff101e,#ff0d1c,#ff0b1a,#ff0918,#ff0717,#ff0515,#ff0414,#ff0312,#ff0211,#ff0110,#ff000f,#ff000e,#ff000d,#ff000c,#ff000b,#ff000b,#ff000a,#ff0009,#ff0009,#ff0008,#ff0007,#ff0007,#ff0006,#ff0006,#ff0006,#ff0005,#ff0005,#ff0004)"></i><i style="background:linear-gradient(90deg,#00ff93,#00ff95,#00ff98,#00ff9a,#00ff9d,#00ff9f,#00ffa2,#00ffa5,#07ffa9,#15ffac,#28ffb0,#3fffb3,#5bffb8,#7affbc,#9effc1,#c6ffc6,#f4ffcc,#ffdcb4,#ffb79b,#ff9b87,#ff8477,#ff7069,#ff615e,#ff5354,#ff484c,#ff3e45,#ff363f,#ff2f39,#ff2834,#ff2330,#ff1e2c,#ff1a29,#ff1626,#ff1323,#ff1020,#ff0d1e,#ff0b1c,#ff091a,#ff0718,#ff0517,#ff0415,#ff0314,#ff0212,#ff0111,#ff0010,#ff000f,#ff000e,#ff000d,#ff000c,#ff000b,#ff000b,#ff000a,#ff0009,#ff0009,#ff0008,#ff0008,#ff0007,#ff0007,#ff0006,#ff0006,#ff0005,#ff0005)"></i><i style="background:linear-gradient(90deg,#00ff99,#00ff9c,#00ff9e,#00ffa1,#00ffa4,#00ffa7,#00ffaa,#00ffad,#06ffb1,#15ffb4,#28ffb8,#3fffbd,#5affc1,#7affc6,#9effcb,#c7ffd1,#f5ffd7,#ffdabe,#ffb6a3,#ff9a8e,#ff827d,#ff6f6f,#ff6063,#ff5259,#ff4750,#ff3d49,#ff3542,#ff2e3c,#ff2837,#ff2233,#ff1d2f,#ff192b,#ff1528,#ff1225,#ff0f22,#ff0d20,#ff0a1e,#ff081c,#ff061a,#ff0518,#ff0316,#ff0215,#ff0114,#ff0112,#ff0011,#ff0010,#ff000f,#ff000e,#ff000d,#ff000c,#ff000c,#ff000b,#ff000a,#ff000a,#ff0009,#ff0008,#ff0008,#ff0007,#ff0007,#ff0006,#ff0006,#ff0005)"></i><i style="background:linear-gradient(90deg,#00ffa0,#00ffa2,#00ffa5,#00ffa8,#00ffab,#00ffae,#00ffb1,#00ffb5,#05ffb9,#14ffbd,#27ffc1,#3effc6,#5affcb,#7affd0,#9effd6,#c7ffdc,#f6ffe2,#ffd9c7,#ffb5ab,#ff9895,#ff8183,#ff6e74,#ff5f68,#ff515d,#ff4654,#ff3d4c,#ff3445,#ff2d3f,#ff273a,#ff2235,#ff1d31,#ff192e,#ff152a,#ff1227,#ff0f24,#ff0c22,#ff0a1f,#ff081d,#ff061b,#ff051a,#ff0318,#ff0216,#ff0115,#ff0014,#ff0012,#ff0011,#ff0010,#ff000f,#ff000e,#ff000d,#ff000d,#ff000c,#ff000b,#ff000a,#ff000a,#ff0009,#ff0009,#ff0008,#ff0007,#ff0007,#ff0007,#ff0006)"></i><i style="background:linear-gradient(90deg,#00ffa6,#00ffa9,#00ffac,#00ffaf,#00ffb2,#00ffb6,#00ffb9,#00ffbd,#05ffc1,#13ffc6,#26ffca,#3effcf,#59ffd5,#79ffda,#9effe0,#c8ffe7,#f7ffee,#ffd8d1,#ffb4b3,#ff979c,#ff8089,#ff6d7a,#ff5e6d,#ff5062,#ff4558,#ff3c50,#ff3449,#ff2c43,#ff263d,#ff2138,#ff1c34,#ff1830,#ff142c,#ff1129,#ff0e26,#ff0c24,#ff0921,#ff071f,#ff061d,#ff041b,#ff0319,#ff0218,#ff0116,#ff0015,#ff0014,#ff0012,#ff0011,#ff0010,#ff000f,#ff000e,#ff000d,#ff000d,#ff000c,#ff000b,#ff000a,#ff000a,#ff0009,#ff0009,#ff0008,#ff0008,#ff0007,#ff0007)"></i><i style="background:linear-gradient(90deg,#00ffad,#00ffb0,#00ffb3,#00ffb6,#00ffba,#00ffbe,#00ffc1,#00ffc6,#04ffca,#13ffcf,#26ffd4,#3dffd9,#59ffdf,#79ffe5,#9effec,#c8fff3,#f8fffb,#ffd7da,#ffb3bc,#ff96a4,#ff7f90,#ff6c80,#ff5d72,#ff4f66,#ff445d,#ff3b54,#ff334d,#ff2c46,#ff2640,#ff203b,#ff1c36,#ff1732,#ff142f,#ff112b,#ff0e28,#ff0b26,#ff0923,#ff0721,#ff051f,#ff041d,#ff031b,#ff0219,#ff0118,#ff0016,#ff0015,#ff0014,#ff0012,#ff0011,#ff0010,#ff000f,#ff000e,#ff000e,#ff000d,#ff000c,#ff000b,#ff000b,#ff000a,#ff0009,#ff0009,#ff0008,#ff0008,#ff0007)"></i><i style="background:linear-gradient(90deg,#00ffb4,#00ffb7,#00ffba,#00ffbe,#00ffc2,#00ffc6,#00ffca,#00ffce,#04ffd3,#12ffd8,#25ffdd,#3dffe3,#59ffe9,#79fff0,#9efff7,#c9ffff,#f1f7ff,#ffd6e4,#ffb2c4,#ff95ab,#ff7e96,#ff6b85,#ff5b77,#ff4e6b,#ff4361,#ff3a58,#ff3250,#ff2b49,#ff2543,#ff203e,#ff1b39,#ff1735,#ff1331,#ff102e,#ff0d2a,#ff0b27,#ff0925,#ff0722,#ff0520,#ff041e,#ff021c,#ff011b,#ff0119,#ff0017,#ff0016,#ff0015,#ff0014,#ff0012,#ff0011,#ff0010,#ff000f,#ff000e,#ff000e,#ff000d,#ff000c,#ff000b,#ff000b,#ff000a,#ff000a,#ff0009,#ff0008,#ff0008)"></i><i style="background:linear-gradient(90deg,#00ffbb,#00ffbe,#00ffc2,#00ffc5,#00ffca,#00ffce,#00ffd2,#00ffd7,#03ffdc,#11ffe2,#24ffe7,#3cffee,#58fff4,#79fffb,#9cfbff,#c0f3ff,#e7ebff,#ffd5ef,#ffb0cd,#ff94b3,#ff7d9d,#ff6a8b,#ff5a7d,#ff4d70,#ff4265,#ff395c,#ff3154,#ff2a4d,#ff2446,#ff1f41,#ff1a3c,#ff1637,#ff1333,#ff1030,#ff0d2c,#ff0a29,#ff0827,#ff0624,#ff0522,#ff0320,#ff021e,#ff011c,#ff001a,#ff0019,#ff0017,#ff0016,#ff0015,#ff0013,#ff0012,#ff0011,#ff0010,#ff000f,#ff000f,#ff000e,#ff000d,#ff000c,#ff000c,#ff000b,#ff000a,#ff000a,#ff0009,#ff0009)"></i><i style="background:linear-gradient(90deg,#00ffc2,#00ffc5,#00ffc9,#00ffcd,#00ffd2,#00ffd6,#00ffdb,#00ffe0,#03ffe6,#10ffeb,#24fff2,#3bfff8,#58ffff,#75f7ff,#95f0ff,#b8e8ff,#dde0ff,#ffd3f9,#ffafd6,#ff93ba,#ff7ca4,#ff6991,#ff5982,#ff4c75,#ff426a,#ff3860,#ff3057,#ff2950,#ff234a,#ff1e44,#ff1a3f,#ff163a,#ff1236,#ff0f32,#ff0c2f,#ff0a2b,#ff0829,#ff0626,#ff0424,#ff0321,#ff021f,#ff011d,#ff001c,#ff001a,#ff0019,#ff0017,#ff0016,#ff0015,#ff0013,#ff0012,#ff0011,#ff0010,#ff0010,#ff000f,#ff000e,#ff000d,#ff000c,#ff000c,#ff000b,#ff000a,#ff000a,#ff0009)"></i><i style="background:linear-gradient(90deg,#00ffc9,#00ffcd,#00ffd1,#00ffd5,#00ffda,#00ffdf,#00ffe4,#00ffe9,#02ffef,#10fff5,#23fffc,#3afbff,#53f4ff,#70edff,#8fe5ff,#b0deff,#d4d6ff,#faceff,#ffaedf,#ff91c2,#ff7aab,#ff6898,#ff5887,#ff4c7a,#ff416e,#ff3764,#ff2f5b,#ff2954,#ff234d,#ff1e47,#ff1941,#ff153d,#ff1238,#ff0f34,#ff0c31,#ff0a2e,#ff072b,#ff0628,#ff0425,#ff0323,#ff0221,#ff011f,#ff001d,#ff001b,#ff001a,#ff0018,#ff0017,#ff0016,#ff0015,#ff0013,#ff0012,#ff0011,#ff0010,#ff0010,#ff000f,#ff000e,#ff000d,#ff000c,#ff000c,#ff000b,#ff000b,#ff000a)"></i><i style="background:linear-gradient(90deg,#00ffd0,#00ffd5,#00ffd9,#00ffde,#00ffe2,#00ffe8,#00ffed,#00fff3,#02fff9,#0ffeff,#21f7ff,#37f1ff,#4feaff,#6be2ff,#88dbff,#a9d4ff,#cbccff,#f0c5ff,#ffade9,#ff90ca,#ff79b2,#ff679e,#ff578d,#ff4b7f,#ff4073,#ff3768,#ff2f5f,#ff2857,#ff2250,#ff1d4a,#ff1844,#ff153f,#ff113b,#ff0e37,#ff0b33,#ff0930,#ff072d,#ff052a,#ff0427,#ff0225,#ff0123,#ff0121,#ff001f,#ff001d,#ff001b,#ff001a,#ff0018,#ff0017,#ff0016,#ff0015,#ff0013,#ff0012,#ff0011,#ff0010,#ff0010,#ff000f,#ff000e,#ff000d,#ff000d,#ff000c,#ff000b,#ff000b)"></i><i style="background:linear-gradient(90deg,#00ffd8,#00ffdc,#00ffe1,#00ffe6,#00ffeb,#00fff1,#00fff6,#00fffd,#01fbff,#0ef4ff,#1feeff,#34e7ff,#4ce0ff,#66d9ff,#83d2ff,#a2cbff,#c3c3ff,#e7bcff,#ffabf2,#ff8fd3,#ff78b9,#ff66a4,#ff5693,#ff4a84,#ff3f77,#ff366c,#ff2e63,#ff275b,#ff2153,#ff1c4d,#ff1847,#ff1442,#ff113d,#ff0e39,#ff0b35,#ff0932,#ff072f,#ff052c,#ff0329,#ff0226,#ff0124,#ff0022,#ff0020,#ff001e,#ff001d,#ff001b,#ff001a,#ff0018,#ff0017,#ff0016,#ff0014,#ff0013,#ff0012,#ff0011,#ff0011,#ff0010,#ff000f,#ff000e,#ff000d,#ff000d,#ff000c,#ff000b)"></i><i style="background:linear-gradient(90deg,#00ffe0,#00ffe4,#00ffe9,#00ffef,#00fff4,#00fffa,#00feff,#00f8ff,#01f1ff,#0debff,#1de4ff,#31ddff,#48d7ff,#62d0ff,#7dc9ff,#9bc2ff,#bbbbff,#deb4ff,#ffaafc,#ff8edb,#ff77c1,#ff64ab,#ff5599,#ff4989,#ff3e7c,#ff3571,#ff2d67,#ff265e,#ff2157,#ff1c50,#ff174a,#ff1345,#ff1040,#ff0d3b,#ff0b38,#ff0834,#ff0631,#ff052e,#ff032b,#ff0228,#ff0126,#ff0024,#ff0022,#ff0020,#ff001e,#ff001c,#ff001b,#ff0019,#ff0018,#ff0017,#ff0016,#ff0014,#ff0013,#ff0012,#ff0011,#ff0011,#ff0010,#ff000f,#ff000e,#ff000d,#ff000d,#ff000c)"></i><i style="background:linear-gradient(90deg,#00ffe8,#00ffed,#00fff2,#00fff7,#00fffd,#00fbff,#00f5ff,#00eeff,#00e8ff,#0be2ff,#1bdbff,#2fd5ff,#45ceff,#5dc7ff,#78c0ff,#95baff,#b4b3ff,#d5acff,#f8a5ff,#ff8ce4,#ff76c8,#ff63b1,#ff549e,#ff488f,#ff3d81,#ff3475,#ff2c6b,#ff2662,#ff205a,#ff1b53,#ff174d,#ff1347,#ff1042,#ff0d3e,#ff0a3a,#ff0836,#ff0633,#ff0430,#ff032d,#ff022a,#ff0128,#ff0025,#ff0023,#ff0021,#ff001f,#ff001e,#ff001c,#ff001b,#ff0019,#ff0018,#ff0017,#ff0016,#ff0014,#ff0013,#ff0012,#ff0011,#ff0011,#ff0010,#ff000f,#ff000e,#ff000e,#ff000d)"></i><i style="background:linear-gradient(90deg,#00fff0,#00fff5,#00fffa,#00feff,#00f8ff,#00f2ff,#00ecff,#00e6ff,#00dfff,#0ad9ff,#1ad3ff,#2cccff,#42c6ff,#59bfff,#73b9ff,#8fb2ff,#adabff,#cda4ff,#ef9dff,#ff8bec,#ff75d0,#ff62b8,#ff53a4,#ff4794,#ff3c86,#ff337a,#ff2b6f,#ff2566,#ff1f5e,#ff1a57,#ff1650,#ff124a,#ff0f45,#ff0c40,#ff0a3c,#ff0738,#ff0635,#ff0431,#ff032f,#ff012c,#ff0129,#ff0027,#ff0025,#ff0023,#ff0021,#ff001f,#ff001d,#ff001c,#ff001a,#ff0019,#ff0018,#ff0017,#ff0015,#ff0014,#ff0013,#ff0012,#ff0012,#ff0011,#ff0010,#ff000f,#ff000e,#ff000e)"></i><i style="background:linear-gradient(90deg,#00fff8,#00fffe,#00fbff,#00f5ff,#00efff,#00e9ff,#00e3ff,#00ddff,#00d7ff,#09d1ff,#18cbff,#2ac4ff,#3fbeff,#56b7ff,#6fb1ff,#8aaaff,#a7a4ff,#c69dff,#e696ff,#ff8af5,#ff73d7,#ff61bf,#ff52ab,#ff4699,#ff3b8b,#ff327e,#ff2b73,#ff246a,#ff1e61,#ff1a5a,#ff1553,#ff124d,#ff0e48,#ff0c43,#ff093f,#ff073b,#ff0537,#ff0434,#ff0230,#ff012e,#ff002b,#ff0029,#ff0026,#ff0024,#ff0022,#ff0020,#ff001f,#ff001d,#ff001c,#ff001a,#ff0019,#ff0018,#ff0016,#ff0015,#ff0014,#ff0013,#ff0012,#ff0012,#ff0011,#ff0010,#ff000f,#ff000e)"></i><i style="background:linear-gradient(90deg,#00feff,#00f8ff,#00f2ff,#00edff,#00e7ff,#00e1ff,#00dbff,#00d5ff,#00cfff,#09c9ff,#17c3ff,#28bdff,#3cb7ff,#52b0ff,#6aaaff,#84a3ff,#a09dff,#be96ff,#de90ff,#ff89fe,#ff72df,#ff60c6,#ff51b1,#ff459f,#ff3a90,#ff3183,#ff2a78,#ff236e,#ff1e65,#ff195d,#ff1556,#ff1150,#ff0e4b,#ff0b45,#ff0941,#ff073d,#ff0539,#ff0336,#ff0232,#ff012f,#ff002d,#ff002a,#ff0028,#ff0026,#ff0024,#ff0022,#ff0020,#ff001e,#ff001d,#ff001b,#ff001a,#ff0019,#ff0018,#ff0016,#ff0015,#ff0014,#ff0013,#ff0012,#ff0012,#ff0011,#ff0010,#ff000f)"></i><i style="background:linear-gradient(90deg,#00f5ff,#00f0ff,#00eaff,#00e5ff,#00dfff,#00d9ff,#00d3ff,#00ceff,#00c8ff,#08c2ff,#15bcff,#26b6ff,#39b0ff,#4fa9ff,#66a3ff,#7f9dff,#9b96ff,#b890ff,#d68aff,#f783ff,#ff71e7,#ff5fcd,#ff50b7,#ff44a5,#ff3995,#ff3088,#ff297c,#ff2372,#ff1d69,#ff1861,#ff1459,#ff1153,#ff0d4d,#ff0b48,#ff0843,#ff063f,#ff053b,#ff0338,#ff0234,#ff0131,#ff002e,#ff002c,#ff0029,#ff0027,#ff0025,#ff0023,#ff0021,#ff0020,#ff001e,#ff001d,#ff001b,#ff001a,#ff0019,#ff0017,#ff0016,#ff0015,#ff0014,#ff0013,#ff0012,#ff0012,#ff0011,#ff0010)"></i><i style="background:linear-gradient(90deg,#00edff,#00e8ff,#00e3ff,#00ddff,#00d7ff,#00d2ff,#00ccff,#00c6ff,#00c1ff,#07bbff,#14b5ff,#24afff,#37a9ff,#4ba3ff,#629dff,#7b96ff,#9590ff,#b18aff,#cf84ff,#ee7dff,#ff70f0,#ff5ed4,#ff4fbe,#ff43aa,#ff389a,#ff308c,#ff2880,#ff2276,#ff1c6c,#ff1864,#ff145d,#ff1056,#ff0d50,#ff0a4b,#ff0846,#ff0641,#ff043d,#ff033a,#ff0236,#ff0133,#ff0030,#ff002e,#ff002b,#ff0029,#ff0027,#ff0025,#ff0023,#ff0021,#ff001f,#ff001e,#ff001c,#ff001b,#ff001a,#ff0018,#ff0017,#ff0016,#ff0015,#ff0014,#ff0013,#ff0012,#ff0012,#ff0011)"></i><i style="background:linear-gradient(90deg,#00e6ff,#00e1ff,#00dbff,#00d6ff,#00d0ff,#00cbff,#00c5ff,#00bfff,#00baff,#06b4ff,#13aeff,#22a8ff,#34a2ff,#489dff,#5e97ff,#7690ff,#908aff,#ab84ff,#c87eff,#e678ff,#ff6ef8,#ff5cdc,#ff4ec4,#ff42b0,#ff37a0,#ff2f91,#ff2785,#ff217a,#ff1c70,#ff1767,#ff1360,#ff0f59,#ff0c53,#ff0a4d,#ff0748,#ff0644,#ff0440,#ff023c,#ff0138,#ff0035,#ff0032,#ff002f,#ff002d,#ff002a,#ff0028,#ff0026,#ff0024,#ff0022,#ff0021,#ff001f,#ff001e,#ff001c,#ff001b,#ff001a,#ff0018,#ff0017,#ff0016,#ff0015,#ff0014,#ff0013,#ff0012,#ff0012)"></i><i style="background:linear-gradient(90deg,#00dfff,#00d9ff,#00d4ff,#00cfff,#00c9ff,#00c4ff,#00beff,#00b9ff,#00b3ff,#05aeff,#12a8ff,#21a2ff,#329cff,#4597ff,#5b91ff,#728bff,#8b85ff,#a57fff,#c179ff,#df73ff,#fe6dff,#ff5be3,#ff4dcb,#ff40b6,#ff36a5,#ff2e96,#ff2789,#ff207e,#ff1b74,#ff166b,#ff1263,#ff0f5c,#ff0c56,#ff0950,#ff074b,#ff0546,#ff0342,#ff023e,#ff013a,#ff0037,#ff0034,#ff0031,#ff002e,#ff002c,#ff002a,#ff0028,#ff0026,#ff0024,#ff0022,#ff0020,#ff001f,#ff001d,#ff001c,#ff001b,#ff0019,#ff0018,#ff0017,#ff0016,#ff0015,#ff0014,#ff0013,#ff0012)"></i><i style="background:linear-gradient(90deg,#00d8ff,#00d3ff,#00cdff,#00c8ff,#00c3ff,#00bdff,#00b8ff,#00b3ff,#00adff,#05a8ff,#10a2ff,#1f9cff,#3097ff,#4391ff,#578bff,#6e85ff,#8680ff,#9f7aff,#bb74ff,#d76eff,#f568ff,#ff5aeb,#ff4cd1,#ff3fbc,#ff35aa,#ff2d9b,#ff268e,#ff2082,#ff1a78,#ff166f,#ff1266,#ff0e5f,#ff0b59,#ff0953,#ff074d,#ff0549,#ff0344,#ff0240,#ff013c,#ff0039,#ff0036,#ff0033,#ff0030,#ff002e,#ff002b,#ff0029,#ff0027,#ff0025,#ff0023,#ff0022,#ff0020,#ff001e,#ff001d,#ff001c,#ff001a,#ff0019,#ff0018,#ff0017,#ff0016,#ff0015,#ff0014,#ff0013)"></i><i style="background:linear-gradient(90deg,#00d1ff,#00ccff,#00c7ff,#00c2ff,#00bcff,#00b7ff,#00b2ff,#00adff,#00a7ff,#04a2ff,#0f9cff,#1d97ff,#2e91ff,#408cff,#5486ff,#6a80ff,#817aff,#9a75ff,#b46fff,#d069ff,#ee63ff,#ff59f2,#ff4ad8,#ff3ec2,#ff34b0,#ff2ca0,#ff2592,#ff1f86,#ff1a7c,#ff1572,#ff116a,#ff0e62,#ff0b5c,#ff0856,#ff0650,#ff044b,#ff0346,#ff0242,#ff013e,#ff003b,#ff0038,#ff0035,#ff0032,#ff002f,#ff002d,#ff002b,#ff0028,#ff0026,#ff0025,#ff0023,#ff0021,#ff0020,#ff001e,#ff001d,#ff001c,#ff001a,#ff0019,#ff0018,#ff0017,#ff0016,#ff0015,#ff0014)"></i><i style="background:linear-gradient(90deg,#00cbff,#00c6ff,#00c1ff,#00bcff,#00b6ff,#00b1ff,#00acff,#00a7ff,#00a1ff,#049cff,#0e97ff,#1c91ff,#2c8cff,#3e86ff,#5181ff,#667bff,#7d76ff,#9570ff,#af6aff,#ca65ff,#e65fff,#ff58fa,#ff49df,#ff3dc9,#ff33b6,#ff2ba5,#ff2497,#ff1e8a,#ff197f,#ff1476,#ff116d,#ff0d66,#ff0a5f,#ff0858,#ff0653,#ff044e,#ff0349,#ff0145,#ff0041,#ff003d,#ff003a,#ff0036,#ff0034,#ff0031,#ff002e,#ff002c,#ff002a,#ff0028,#ff0026,#ff0024,#ff0022,#ff0021,#ff001f,#ff001e,#ff001d,#ff001b,#ff001a,#ff0019,#ff0018,#ff0017,#ff0016,#ff0015)"></i><i style="background:linear-gradient(90deg,#00c5ff,#00c0ff,#00bbff,#00b6ff,#00b1ff,#00acff,#00a6ff,#00a1ff,#009cff,#0397ff,#0d91ff,#1b8cff,#2a87ff,#3b81ff,#4e7cff,#6377ff,#7971ff,#906cff,#a966ff,#c361ff,#df5bff,#fc55ff,#ff48e6,#ff3ccf,#ff33bb,#ff2aaa,#ff239c,#ff1d8f,#ff1884,#ff147a,#ff1071,#ff0d69,#ff0a62,#ff075b,#ff0555,#ff0450,#ff024b,#ff0147,#ff0043,#ff003f,#ff003c,#ff0038,#ff0035,#ff0033,#ff0030,#ff002e,#ff002b,#ff0029,#ff0027,#ff0025,#ff0024,#ff0022,#ff0021,#ff001f,#ff001e,#ff001c,#ff001b,#ff001a,#ff0019,#ff0018,#ff0017,#ff0016)"></i><i style="background:linear-gradient(90deg,#00bfff,#00baff,#00b5ff,#00b0ff,#00abff,#00a6ff,#00a1ff,#009cff,#0097ff,#0392ff,#0c8cff,#1987ff,#2882ff,#397dff,#4b77ff,#5f72ff,#756dff,#8b67ff,#a462ff,#bd5dff,#d857ff,#f452ff,#ff47ee,#ff3bd5,#ff32c1,#ff29b0,#ff22a0,#ff1d93,#ff1788,#ff137d,#ff0f74,#ff0c6c,#ff0965,#ff075e,#ff0558,#ff0353,#ff024e,#ff0149,#ff0045,#ff0041,#ff003d,#ff003a,#ff0037,#ff0034,#ff0032,#ff002f,#ff002d,#ff002b,#ff0029,#ff0027,#ff0025,#ff0023,#ff0022,#ff0020,#ff001f,#ff001d,#ff001c,#ff001b,#ff001a,#ff0019,#ff0018,#ff0017)"></i><i style="background:linear-gradient(90deg,#00b9ff,#00b4ff,#00b0ff,#00abff,#00a6ff,#00a1ff,#009cff,#0097ff,#0092ff,#028dff,#0c88ff,#1883ff,#267dff,#3778ff,#4973ff,#5c6eff,#7169ff,#8763ff,#9e5eff,#b759ff,#d153ff,#ed4eff,#ff46f5,#ff3adc,#ff31c7,#ff28b5,#ff22a5,#ff1c98,#ff178c,#ff1281,#ff0f78,#ff0c6f,#ff0968,#ff0761,#ff055b,#ff0355,#ff0250,#ff014b,#ff0047,#ff0043,#ff003f,#ff003c,#ff0039,#ff0036,#ff0033,#ff0031,#ff002e,#ff002c,#ff002a,#ff0028,#ff0026,#ff0025,#ff0023,#ff0021,#ff0020,#ff001f,#ff001d,#ff001c,#ff001b,#ff001a,#ff0019,#ff0018)"></i><i style="background:linear-gradient(90deg,#00b4ff,#00afff,#00aaff,#00a5ff,#00a1ff,#009cff,#0097ff,#0092ff,#008dff,#0288ff,#0b83ff,#177eff,#2579ff,#3574ff,#466fff,#596aff,#6d65ff,#835fff,#9a5aff,#b255ff,#cb50ff,#e64bff,#ff45fc,#ff39e3,#ff30cd,#ff28ba,#ff21aa,#ff1b9c,#ff1690,#ff1285,#ff0e7b,#ff0b73,#ff086b,#ff0664,#ff045e,#ff0358,#ff0153,#ff004e,#ff0049,#ff0045,#ff0041,#ff003e,#ff003b,#ff0038,#ff0035,#ff0032,#ff0030,#ff002e,#ff002b,#ff0029,#ff0028,#ff0026,#ff0024,#ff0023,#ff0021,#ff0020,#ff001e,#ff001d,#ff001c,#ff001b,#ff001a,#ff0019)"></i><i style="background:linear-gradient(90deg,#00afff,#00aaff,#00a5ff,#00a0ff,#009cff,#0097ff,#0092ff,#008dff,#0088ff,#0184ff,#0a7fff,#167aff,#2375ff,#3370ff,#446bff,#5666ff,#6a61ff,#7f5cff,#9557ff,#ac52ff,#c54dff,#df47ff,#fa42ff,#ff38e9,#ff2fd3,#ff27c0,#ff20af,#ff1aa1,#ff1594,#ff1189,#ff0e7f,#ff0b76,#ff086e,#ff0667,#ff0460,#ff025a,#ff0155,#ff0050,#ff004c,#ff0047,#ff0043,#ff0040,#ff003d,#ff0039,#ff0037,#ff0034,#ff0031,#ff002f,#ff002d,#ff002b,#ff0029,#ff0027,#ff0025,#ff0024,#ff0022,#ff0021,#ff001f,#ff001e,#ff001d,#ff001c,#ff001a,#ff0019)"></i><i style="background:linear-gradient(90deg,#00a9ff,#00a5ff,#00a0ff,#009cff,#0097ff,#0092ff,#008eff,#0089ff,#0084ff,#017fff,#097aff,#1476ff,#2271ff,#316cff,#4167ff,#5362ff,#665dff,#7b58ff,#9053ff,#a74eff,#bf49ff,#d944ff,#f33fff,#ff37f0,#ff2ed9,#ff26c5,#ff1fb4,#ff19a5,#ff1598,#ff118d,#ff0d83,#ff0a79,#ff0771,#ff056a,#ff0363,#ff025d,#ff0158,#ff0052,#ff004e,#ff0049,#ff0045,#ff0042,#ff003e,#ff003b,#ff0038,#ff0036,#ff0033,#ff0031,#ff002e,#ff002c,#ff002a,#ff0028,#ff0027,#ff0025,#ff0023,#ff0022,#ff0020,#ff001f,#ff001e,#ff001d,#ff001b,#ff001a)"></i><i style="background:linear-gradient(90deg,#00a5ff,#00a0ff,#009cff,#0097ff,#0092ff,#008eff,#0089ff,#0084ff,#0080ff,#017bff,#0876ff,#1372ff,#206dff,#2f68ff,#3f63ff,#505eff,#635aff,#7755ff,#8c50ff,#a24bff,#ba46ff,#d341ff,#ec3dff,#ff36f7,#ff2ddf,#ff25cb,#ff1eb9,#ff19aa,#ff149d,#ff1091,#ff0c86,#ff0a7d,#ff0775,#ff056d,#ff0366,#ff0260,#ff015a,#ff0055,#ff0050,#ff004c,#ff0048,#ff0044,#ff0040,#ff003d,#ff003a,#ff0037,#ff0035,#ff0032,#ff0030,#ff002e,#ff002c,#ff002a,#ff0028,#ff0026,#ff0025,#ff0023,#ff0022,#ff0020,#ff001f,#ff001e,#ff001c,#ff001b)"></i><i style="background:linear-gradient(90deg,#00a0ff,#009cff,#0097ff,#0093ff,#008eff,#0089ff,#0085ff,#0080ff,#007cff,#0077ff,#0872ff,#126eff,#1f69ff,#2d64ff,#3d60ff,#4e5bff,#6056ff,#7351ff,#884dff,#9e48ff,#b543ff,#cd3fff,#e63aff,#ff35fe,#ff2ce6,#ff24d1,#ff1dbf,#ff18af,#ff13a1,#ff0f95,#ff0c8a,#ff0980,#ff0778,#ff0470,#ff0369,#ff0162,#ff005d,#ff0057,#ff0052,#ff004e,#ff004a,#ff0046,#ff0042,#ff003f,#ff003c,#ff0039,#ff0036,#ff0034,#ff0031,#ff002f,#ff002d,#ff002b,#ff0029,#ff0027,#ff0026,#ff0024,#ff0023,#ff0021,#ff0020,#ff001f,#ff001d,#ff001c)"></i><i style="background:linear-gradient(90deg,#009bff,#0097ff,#0093ff,#008eff,#008aff,#0085ff,#0081ff,#007cff,#0078ff,#0073ff,#076fff,#116aff,#1e65ff,#2b61ff,#3b5cff,#4b58ff,#5d53ff,#704eff,#844aff,#9945ff,#b040ff,#c73cff,#df37ff,#f933ff,#ff2bec,#ff23d6,#ff1dc4,#ff17b4,#ff13a6,#ff0f99,#ff0b8e,#ff0984,#ff067b,#ff0473,#ff026c,#ff0165,#ff005f,#ff005a,#ff0055,#ff0050,#ff004c,#ff0048,#ff0044,#ff0041,#ff003e,#ff003b,#ff0038,#ff0035,#ff0033,#ff0030,#ff002e,#ff002c,#ff002a,#ff0029,#ff0027,#ff0025,#ff0024,#ff0022,#ff0021,#ff0020,#ff001e,#ff001d)"></i><i style="background:linear-gradient(90deg,#0097ff,#0093ff,#008eff,#008aff,#0086ff,#0081ff,#007dff,#0078ff,#0074ff,#0070ff,#076bff,#1067ff,#1c62ff,#2a5eff,#3959ff,#4954ff,#5a50ff,#6d4bff,#8047ff,#9542ff,#ab3eff,#c139ff,#d935ff,#f230ff,#ff2af3,#ff22dc,#ff1cc9,#ff16b9,#ff12aa,#ff0e9d,#ff0b92,#ff0888,#ff067e,#ff0476,#ff026f,#ff0168,#ff0062,#ff005c,#ff0057,#ff0052,#ff004e,#ff004a,#ff0046,#ff0043,#ff003f,#ff003c,#ff0039,#ff0037,#ff0034,#ff0032,#ff0030,#ff002e,#ff002c,#ff002a,#ff0028,#ff0026,#ff0025,#ff0023,#ff0022,#ff0021,#ff001f,#ff001e)"></i><i style="background:linear-gradient(90deg,#0093ff,#008fff,#008aff,#0086ff,#0082ff,#007dff,#0079ff,#0075ff,#0070ff,#006cff,#0668ff,#1063ff,#1b5fff,#285aff,#3756ff,#4651ff,#574dff,#6948ff,#7d44ff,#9140ff,#a63bff,#bc37ff,#d332ff,#ec2eff,#ff29f9,#ff21e2,#ff1bcf,#ff16be,#ff11af,#ff0da1,#ff0a96,#ff078b,#ff0582,#ff0379,#ff0272,#ff016b,#ff0065,#ff005f,#ff0059,#ff0055,#ff0050,#ff004c,#ff0048,#ff0044,#ff0041,#ff003e,#ff003b,#ff0038,#ff0036,#ff0033,#ff0031,#ff002f,#ff002d,#ff002b,#ff0029,#ff0028,#ff0026,#ff0024,#ff0023,#ff0022,#ff0020,#ff001f)"></i><i style="background:linear-gradient(90deg,#008fff,#008bff,#0086ff,#0082ff,#007eff,#007aff,#0075ff,#0071ff,#006dff,#0069ff,#0564ff,#0f60ff,#1a5cff,#2757ff,#3553ff,#444eff,#554aff,#6646ff,#7941ff,#8d3dff,#a139ff,#b734ff,#ce30ff,#e62cff,#fe28ff,#ff20e8,#ff1ad4,#ff15c3,#ff11b3,#ff0da6,#ff0a9a,#ff078f,#ff0585,#ff037d,#ff0175,#ff006e,#ff0067,#ff0061,#ff005c,#ff0057,#ff0052,#ff004e,#ff004a,#ff0046,#ff0043,#ff0040,#ff003d,#ff003a,#ff0037,#ff0035,#ff0033,#ff0030,#ff002e,#ff002c,#ff002b,#ff0029,#ff0027,#ff0026,#ff0024,#ff0023,#ff0021,#ff0020)"></i><i style="background:linear-gradient(90deg,#008bff,#0087ff,#0083ff,#007fff,#007aff,#0076ff,#0072ff,#006eff,#0069ff,#0065ff,#0561ff,#0e5dff,#1958ff,#2554ff,#3350ff,#424cff,#5247ff,#6343ff,#763fff,#893bff,#9d36ff,#b232ff,#c82eff,#e02aff,#f826ff,#ff20ee,#ff19da,#ff14c8,#ff10b8,#ff0caa,#ff099e,#ff0793,#ff0489,#ff0380,#ff0178,#ff0071,#ff006a,#ff0064,#ff005e,#ff0059,#ff0054,#ff0050,#ff004c,#ff0048,#ff0045,#ff0041,#ff003e,#ff003c,#ff0039,#ff0036,#ff0034,#ff0032,#ff0030,#ff002e,#ff002c,#ff002a,#ff0028,#ff0027,#ff0025,#ff0024,#ff0022,#ff0021)"></i><i style="background:linear-gradient(90deg,#0087ff,#0083ff,#007fff,#007bff,#0077ff,#0073ff,#006fff,#006aff,#0066ff,#0062ff,#045eff,#0d5aff,#1855ff,#2451ff,#314dff,#4049ff,#5045ff,#6141ff,#723cff,#8538ff,#9934ff,#ae30ff,#c32cff,#da28ff,#f124ff,#ff1ff5,#ff19df,#ff14cd,#ff0fbd,#ff0cae,#ff09a2,#ff0696,#ff048c,#ff0283,#ff017b,#ff0073,#ff006d,#ff0066,#ff0061,#ff005b,#ff0057,#ff0052,#ff004e,#ff004a,#ff0047,#ff0043,#ff0040,#ff003d,#ff003a,#ff0038,#ff0035,#ff0033,#ff0031,#ff002f,#ff002d,#ff002b,#ff0029,#ff0028,#ff0026,#ff0025,#ff0023,#ff0022)"></i><i style="background:linear-gradient(90deg,#0083ff,#007fff,#007bff,#0077ff,#0073ff,#006fff,#006bff,#0067ff,#0063ff,#005fff,#045bff,#0c57ff,#1753ff,#224fff,#304aff,#3e46ff,#4d42ff,#5e3eff,#6f3aff,#8236ff,#9532ff,#a92eff,#be2aff,#d426ff,#eb22ff,#ff1efb,#ff18e5,#ff13d2,#ff0fc1,#ff0bb3,#ff08a6,#ff069a,#ff0490,#ff0287,#ff017e,#ff0076,#ff006f,#ff0069,#ff0063,#ff005e,#ff0059,#ff0054,#ff0050,#ff004c,#ff0048,#ff0045,#ff0042,#ff003f,#ff003c,#ff0039,#ff0037,#ff0035,#ff0032,#ff0030,#ff002e,#ff002c,#ff002b,#ff0029,#ff0027,#ff0026,#ff0024,#ff0023)"></i><i style="background:linear-gradient(90deg,#0080ff,#007cff,#0078ff,#0074ff,#0070ff,#006cff,#0068ff,#0064ff,#0060ff,#005cff,#0458ff,#0c54ff,#1650ff,#214cff,#2e48ff,#3c44ff,#4b40ff,#5b3cff,#6c38ff,#7e34ff,#9130ff,#a52cff,#b928ff,#cf24ff,#e520ff,#fd1dff,#ff17eb,#ff12d7,#ff0ec6,#ff0ab7,#ff08aa,#ff059e,#ff0393,#ff028a,#ff0081,#ff0079,#ff0072,#ff006c,#ff0066,#ff0060,#ff005b,#ff0056,#ff0052,#ff004e,#ff004a,#ff0047,#ff0044,#ff0040,#ff003e,#ff003b,#ff0038,#ff0036,#ff0034,#ff0032,#ff0030,#ff002e,#ff002c,#ff002a,#ff0029,#ff0027,#ff0025,#ff0024)"></i><i style="background:linear-gradient(90deg,#007dff,#0079ff,#0075ff,#0071ff,#006dff,#0069ff,#0065ff,#0061ff,#005dff,#0059ff,#0355ff,#0b51ff,#154dff,#2049ff,#2c45ff,#3a41ff,#493dff,#5939ff,#6936ff,#7b32ff,#8d2eff,#a12aff,#b526ff,#ca22ff,#e01fff,#f71bff,#ff16f1,#ff11dd,#ff0dcb,#ff0abc,#ff07ae,#ff05a2,#ff0397,#ff018d,#ff0084,#ff007c,#ff0075,#ff006e,#ff0068,#ff0063,#ff005d,#ff0059,#ff0054,#ff0050,#ff004c,#ff0049,#ff0045,#ff0042,#ff003f,#ff003c,#ff003a,#ff0037,#ff0035,#ff0033,#ff0031,#ff002f,#ff002d,#ff002b,#ff002a,#ff0028,#ff0027,#ff0025)"></i><i style="background:linear-gradient(90deg,#0079ff,#0075ff,#0072ff,#006eff,#006aff,#0066ff,#0062ff,#005eff,#005aff,#0056ff,#0352ff,#0a4fff,#144bff,#1f47ff,#2b43ff,#383fff,#473bff,#5637ff,#6633ff,#7830ff,#8a2cff,#9d28ff,#b024ff,#c521ff,#da1dff,#f11aff,#ff15f7,#ff11e2,#ff0dd0,#ff09c0,#ff06b2,#ff04a6,#ff029b,#ff0191,#ff0088,#ff007f,#ff0078,#ff0071,#ff006b,#ff0065,#ff0060,#ff005b,#ff0056,#ff0052,#ff004e,#ff004a,#ff0047,#ff0044,#ff0041,#ff003e,#ff003b,#ff0039,#ff0036,#ff0034,#ff0032,#ff0030,#ff002e,#ff002c,#ff002b,#ff0029,#ff0028,#ff0026)"></i><i style="background:linear-gradient(90deg,#0076ff,#0072ff,#006eff,#006bff,#0067ff,#0063ff,#005fff,#005bff,#0058ff,#0054ff,#0250ff,#0a4cff,#1348ff,#1e44ff,#2a41ff,#373dff,#4539ff,#5435ff,#6431ff,#742eff,#862aff,#9926ff,#ac23ff,#c01fff,#d51cff,#eb18ff,#ff15fd,#ff10e7,#ff0cd5,#ff09c5,#ff06b7,#ff04aa,#ff029e,#ff0194,#ff008b,#ff0082,#ff007b,#ff0074,#ff006d,#ff0067,#ff0062,#ff005d,#ff0058,#ff0054,#ff0050,#ff004c,#ff0049,#ff0045,#ff0042,#ff0040,#ff003d,#ff003a,#ff0038,#ff0036,#ff0033,#ff0031,#ff002f,#ff002e,#ff002c,#ff002a,#ff0029,#ff0027)"></i><i style="background:linear-gradient(90deg,#0073ff,#006fff,#006bff,#0068ff,#0064ff,#0060ff,#005cff,#0059ff,#0055ff,#0051ff,#024dff,#094aff,#1246ff,#1c42ff,#283eff,#353bff,#4337ff,#5133ff,#612fff,#712cff,#8328ff,#9525ff,#a821ff,#bc1eff,#d01aff,#e517ff,#fb13ff,#ff0fed,#ff0bda,#ff08ca,#ff05bb,#ff03ae,#ff02a2,#ff0098,#ff008e,#ff0086,#ff007e,#ff0077,#ff0070,#ff006a,#ff0064,#ff005f,#ff005b,#ff0056,#ff0052,#ff004e,#ff004b,#ff0047,#ff0044,#ff0041,#ff003e,#ff003c,#ff0039,#ff0037,#ff0035,#ff0033,#ff0031,#ff002f,#ff002d,#ff002b,#ff002a,#ff0028)"></i><i style="background:linear-gradient(90deg,#0070ff,#006cff,#0069ff,#0065ff,#0061ff,#005dff,#005aff,#0056ff,#0052ff,#004fff,#024bff,#0847ff,#1144ff,#1b40ff,#273cff,#3339ff,#4135ff,#4f31ff,#5e2eff,#6f2aff,#8026ff,#9123ff,#a420ff,#b71cff,#cb19ff,#e015ff,#f612ff,#ff0ef3,#ff0bdf,#ff08ce,#ff05bf,#ff03b2,#ff01a6,#ff009b,#ff0092,#ff0089,#ff0081,#ff0079,#ff0073,#ff006c,#ff0067,#ff0062,#ff005d,#ff0058,#ff0054,#ff0050,#ff004c,#ff0049,#ff0046,#ff0043,#ff0040,#ff003d,#ff003b,#ff0038,#ff0036,#ff0034,#ff0032,#ff0030,#ff002e,#ff002d,#ff002b,#ff0029)"></i><i style="background:linear-gradient(90deg,#006dff,#0069ff,#0066ff,#0062ff,#005eff,#005bff,#0057ff,#0054ff,#0050ff,#004cff,#0149ff,#0845ff,#1041ff,#1a3eff,#263aff,#3237ff,#3f33ff,#4d2fff,#5c2cff,#6c28ff,#7c25ff,#8e21ff,#a01eff,#b31bff,#c617ff,#db14ff,#f011ff,#ff0ef8,#ff0ae5,#ff07d3,#ff04c4,#ff02b6,#ff01aa,#ff009f,#ff0095,#ff008c,#ff0084,#ff007c,#ff0075,#ff006f,#ff0069,#ff0064,#ff005f,#ff005a,#ff0056,#ff0052,#ff004e,#ff004b,#ff0047,#ff0044,#ff0041,#ff003f,#ff003c,#ff003a,#ff0037,#ff0035,#ff0033,#ff0031,#ff002f,#ff002e,#ff002c,#ff002a)"></i><i style="background:linear-gradient(90deg,#006aff,#0067ff,#0063ff,#005fff,#005cff,#0058ff,#0055ff,#0051ff,#004eff,#004aff,#0146ff,#0743ff,#103fff,#193cff,#2438ff,#3035ff,#3d31ff,#4b2eff,#5a2aff,#6927ff,#7923ff,#8a20ff,#9c1dff,#af19ff,#c216ff,#d613ff,#eb10ff,#ff0dfe,#ff09ea,#ff06d8,#ff04c8,#ff02ba,#ff01ae,#ff00a2,#ff0098,#ff008f,#ff0087,#ff007f,#ff0078,#ff0072,#ff006c,#ff0066,#ff0061,#ff005c,#ff0058,#ff0054,#ff0050,#ff004c,#ff0049,#ff0046,#ff0043,#ff0040,#ff003e,#ff003b,#ff0039,#ff0037,#ff0034,#ff0032,#ff0031,#ff002f,#ff002d,#ff002b)"></i><i style="background:linear-gradient(90deg,#0067ff,#0064ff,#0060ff,#005dff,#0059ff,#0056ff,#0052ff,#004fff,#004bff,#0048ff,#0144ff,#0741ff,#0f3dff,#183aff,#2336ff,#2f33ff,#3b2fff,#492cff,#5728ff,#6625ff,#7622ff,#871eff,#981bff,#ab18ff,#bd15ff,#d112ff,#e50fff,#fa0cff,#ff09ef,#ff06dd,#ff04cd,#ff02be,#ff00b2,#ff00a6,#ff009c,#ff0092,#ff008a,#ff0082,#ff007b,#ff0074,#ff006e,#ff0068,#ff0063,#ff005e,#ff005a,#ff0056,#ff0052,#ff004e,#ff004b,#ff0048,#ff0045,#ff0042,#ff003f,#ff003d,#ff003a,#ff0038,#ff0036,#ff0034,#ff0032,#ff0030,#ff002e,#ff002d)"></i><i style="background:linear-gradient(90deg,#0065ff,#0061ff,#005eff,#005aff,#0057ff,#0053ff,#0050ff,#004cff,#0049ff,#0045ff,#0142ff,#063fff,#0e3bff,#1738ff,#2234ff,#2d31ff,#3a2dff,#472aff,#5527ff,#6423ff,#7320ff,#841dff,#951aff,#a717ff,#b914ff,#cc11ff,#e00eff,#f50bff,#ff08f4,#ff05e2,#ff03d1,#ff01c3,#ff00b6,#ff00aa,#ff009f,#ff0096,#ff008d,#ff0085,#ff007d,#ff0077,#ff0071,#ff006b,#ff0065,#ff0061,#ff005c,#ff0058,#ff0054,#ff0050,#ff004d,#ff0049,#ff0046,#ff0043,#ff0041,#ff003e,#ff003c,#ff0039,#ff0037,#ff0035,#ff0033,#ff0031,#ff002f,#ff002e)"></i><i style="background:linear-gradient(90deg,#0062ff,#005fff,#005bff,#0058ff,#0054ff,#0051ff,#004eff,#004aff,#0047ff,#0043ff,#0040ff,#063dff,#0e39ff,#1736ff,#2132ff,#2c2fff,#382cff,#4528ff,#5325ff,#6122ff,#711fff,#811cff,#9119ff,#a316ff,#b513ff,#c810ff,#db0dff,#ef0aff,#ff08fa,#ff05e7,#ff03d6,#ff01c7,#ff00ba,#ff00ad,#ff00a3,#ff0099,#ff0090,#ff0088,#ff0080,#ff0079,#ff0073,#ff006d,#ff0068,#ff0063,#ff005e,#ff005a,#ff0056,#ff0052,#ff004e,#ff004b,#ff0048,#ff0045,#ff0042,#ff003f,#ff003d,#ff003b,#ff0038,#ff0036,#ff0034,#ff0032,#ff0030,#ff002f)"></i><i style="background:linear-gradient(90deg,#0060ff,#005cff,#0059ff,#0056ff,#0052ff,#004fff,#004bff,#0048ff,#0045ff,#0041ff,#003eff,#053bff,#0d37ff,#1634ff,#2031ff,#2b2dff,#372aff,#4327ff,#5124ff,#5f21ff,#6e1dff,#7e1aff,#8e17ff,#9f14ff,#b111ff,#c30fff,#d60cff,#ea09ff,#ff07ff,#ff04ec,#ff02db,#ff01cb,#ff00be,#ff00b1,#ff00a6,#ff009c,#ff0093,#ff008b,#ff0083,#ff007c,#ff0076,#ff0070,#ff006a,#ff0065,#ff0060,#ff005c,#ff0058,#ff0054,#ff0050,#ff004d,#ff0049,#ff0046,#ff0044,#ff0041,#ff003e,#ff003c,#ff003a,#ff0037,#ff0035,#ff0033,#ff0032,#ff0030)"></i><i style="background:linear-gradient(90deg,#005dff,#005aff,#0057ff,#0053ff,#0050ff,#004dff,#0049ff,#0046ff,#0043ff,#003fff,#003cff,#0539ff,#0c35ff,#1532ff,#1f2fff,#292cff,#3529ff,#4225ff,#4f22ff,#5d1fff,#6b1cff,#7b19ff,#8b16ff,#9c13ff,#ad10ff,#bf0eff,#d20bff,#e509ff,#f906ff,#ff04f1,#ff02df,#ff00d0,#ff00c2,#ff00b5,#ff00aa,#ff009f,#ff0096,#ff008e,#ff0086,#ff007f,#ff0078,#ff0072,#ff006c,#ff0067,#ff0062,#ff005e,#ff0059,#ff0055,#ff0052,#ff004e,#ff004b,#ff0048,#ff0045,#ff0042,#ff0040,#ff003d,#ff003b,#ff0039,#ff0037,#ff0035,#ff0033,#ff0031)"></i><i style="background:linear-gradient(90deg,#005bff,#0058ff,#0054ff,#0051ff,#004eff,#004aff,#0047ff,#0044ff,#0041ff,#003dff,#003aff,#0537ff,#0c34ff,#1431ff,#1e2dff,#282aff,#3427ff,#4024ff,#4d21ff,#5b1eff,#691bff,#7818ff,#8815ff,#9812ff,#a90fff,#bb0dff,#cd0aff,#e008ff,#f406ff,#ff03f6,#ff01e4,#ff00d4,#ff00c6,#ff00b9,#ff00ad,#ff00a3,#ff0099,#ff0091,#ff0089,#ff0081,#ff007b,#ff0074,#ff006f,#ff0069,#ff0064,#ff0060,#ff005b,#ff0057,#ff0054,#ff0050,#ff004d,#ff004a,#ff0047,#ff0044,#ff0041,#ff003f,#ff003c,#ff003a,#ff0038,#ff0036,#ff0034,#ff0032)"></i><i style="background:linear-gradient(90deg,#0058ff,#0055ff,#0052ff,#004fff,#004cff,#0048ff,#0045ff,#0042ff,#003fff,#003cff,#0038ff,#0435ff,#0b32ff,#132fff,#1d2cff,#2729ff,#3226ff,#3e23ff,#4b20ff,#581dff,#661aff,#7517ff,#8514ff,#9511ff,#a60eff,#b70cff,#c909ff,#dc07ff,#ef05ff,#ff03fb,#ff01e9,#ff00d9,#ff00ca,#ff00bd,#ff00b1,#ff00a6,#ff009c,#ff0094,#ff008b,#ff0084,#ff007d,#ff0077,#ff0071,#ff006c,#ff0066,#ff0062,#ff005d,#ff0059,#ff0055,#ff0052,#ff004e,#ff004b,#ff0048,#ff0045,#ff0043,#ff0040,#ff003e,#ff003b,#ff0039,#ff0037,#ff0035,#ff0033)"></i><i style="background:linear-gradient(90deg,#0056ff,#0053ff,#0050ff,#004dff,#004aff,#0046ff,#0043ff,#0040ff,#003dff,#003aff,#0037ff,#0433ff,#0a30ff,#132dff,#1c2aff,#2627ff,#3124ff,#3d21ff,#491eff,#561bff,#6418ff,#7316ff,#8213ff,#9210ff,#a20eff,#b30bff,#c509ff,#d706ff,#ea04ff,#fd02ff,#ff01ee,#ff00dd,#ff00ce,#ff00c1,#ff00b5,#ff00aa,#ff00a0,#ff0097,#ff008e,#ff0087,#ff0080,#ff0079,#ff0073,#ff006e,#ff0069,#ff0064,#ff005f,#ff005b,#ff0057,#ff0053,#ff0050,#ff004d,#ff004a,#ff0047,#ff0044,#ff0041,#ff003f,#ff003d,#ff003a,#ff0038,#ff0036,#ff0034)"></i><i style="background:linear-gradient(90deg,#0054ff,#0051ff,#004eff,#004bff,#0048ff,#0044ff,#0041ff,#003eff,#003bff,#0038ff,#0035ff,#0332ff,#0a2fff,#122cff,#1b29ff,#2526ff,#2f23ff,#3b20ff,#471dff,#541aff,#6217ff,#7015ff,#7f12ff,#8e0fff,#9f0dff,#af0aff,#c108ff,#d306ff,#e504ff,#f802ff,#ff00f3,#ff00e2,#ff00d2,#ff00c5,#ff00b8,#ff00ad,#ff00a3,#ff009a,#ff0091,#ff008a,#ff0082,#ff007c,#ff0076,#ff0070,#ff006b,#ff0066,#ff0061,#ff005d,#ff0059,#ff0055,#ff0052,#ff004e,#ff004b,#ff0048,#ff0045,#ff0043,#ff0040,#ff003e,#ff003c,#ff003a,#ff0038,#ff0036)"></i><i style="background:linear-gradient(90deg,#0052ff,#004fff,#004cff,#0049ff,#0046ff,#0043ff,#003fff,#003cff,#0039ff,#0036ff,#0033ff,#0330ff,#092dff,#112aff,#1a27ff,#2424ff,#2e21ff,#391fff,#461cff,#5219ff,#6016ff,#6e13ff,#7c11ff,#8b0eff,#9b0cff,#ac09ff,#bd07ff,#ce05ff,#e003ff,#f301ff,#ff00f8,#ff00e6,#ff00d7,#ff00c9,#ff00bc,#ff00b1,#ff00a6,#ff009d,#ff0094,#ff008c,#ff0085,#ff007e,#ff0078,#ff0072,#ff006d,#ff0068,#ff0063,#ff005f,#ff005b,#ff0057,#ff0053,#ff0050,#ff004d,#ff004a,#ff0047,#ff0044,#ff0042,#ff003f,#ff003d,#ff003b,#ff0039,#ff0037)"></i><i style="background:linear-gradient(90deg,#0050ff,#004dff,#004aff,#0047ff,#0044ff,#0041ff,#003eff,#003bff,#0038ff,#0035ff,#0032ff,#032fff,#092cff,#1029ff,#1926ff,#2323ff,#2d20ff,#381dff,#441bff,#5018ff,#5d15ff,#6b12ff,#7a10ff,#880dff,#980bff,#a809ff,#b907ff,#ca04ff,#dc03ff,#ee01ff,#ff00fd,#ff00eb,#ff00db,#ff00cd,#ff00c0,#ff00b4,#ff00aa,#ff00a0,#ff0097,#ff008f,#ff0088,#ff0081,#ff007a,#ff0075,#ff006f,#ff006a,#ff0065,#ff0061,#ff005d,#ff0059,#ff0055,#ff0052,#ff004e,#ff004b,#ff0048,#ff0046,#ff0043,#ff0041,#ff003e,#ff003c,#ff003a,#ff0038)"></i><i style="background:linear-gradient(90deg,#004eff,#004bff,#0048ff,#0045ff,#0042ff,#003fff,#003cff,#0039ff,#0036ff,#0033ff,#0030ff,#032dff,#082aff,#1027ff,#1825ff,#2222ff,#2c1fff,#371cff,#4219ff,#4e17ff,#5b14ff,#6911ff,#770fff,#860dff,#950aff,#a508ff,#b506ff,#c604ff,#d802ff,#ea01ff,#fc00ff,#ff00f0,#ff00df,#ff00d1,#ff00c4,#ff00b8,#ff00ad,#ff00a3,#ff009a,#ff0092,#ff008a,#ff0083,#ff007d,#ff0077,#ff0071,#ff006c,#ff0067,#ff0063,#ff005f,#ff005b,#ff0057,#ff0053,#ff0050,#ff004d,#ff004a,#ff0047,#ff0044,#ff0042,#ff0040,#ff003d,#ff003b,#ff0039)"></i><i style="background:linear-gradient(90deg,#004cff,#0049ff,#0046ff,#0043ff,#0040ff,#003dff,#003aff,#0037ff,#0034ff,#0031ff,#002fff,#022cff,#0829ff,#0f26ff,#1723ff,#2120ff,#2a1eff,#351bff,#4118ff,#4d16ff,#5913ff,#6711ff,#740eff,#830cff,#9209ff,#a107ff,#b105ff,#c203ff,#d302ff,#e500ff,#f700ff,#ff00f4,#ff00e4,#ff00d5,#ff00c7,#ff00bb,#ff00b0,#ff00a6,#ff009d,#ff0095,#ff008d,#ff0086,#ff007f,#ff0079,#ff0074,#ff006e,#ff0069,#ff0065,#ff0060,#ff005c,#ff0059,#ff0055,#ff0052,#ff004e,#ff004b,#ff0049,#ff0046,#ff0043,#ff0041,#ff003f,#ff003c,#ff003a)"></i><i style="background:linear-gradient(90deg,#004aff,#0047ff,#0044ff,#0041ff,#003eff,#003bff,#0039ff,#0036ff,#0033ff,#0030ff,#002dff,#022aff,#0727ff,#0e25ff,#1722ff,#201fff,#291dff,#341aff,#3f17ff,#4b15ff,#5712ff,#6410ff,#720dff,#800bff,#8f09ff,#9e07ff,#ae05ff,#be03ff,#cf01ff,#e100ff,#f300ff,#ff00f9,#ff00e8,#ff00d9,#ff00cb,#ff00bf,#ff00b4,#ff00aa,#ff00a0,#ff0098,#ff0090,#ff0089,#ff0082,#ff007c,#ff0076,#ff0070,#ff006b,#ff0067,#ff0062,#ff005e,#ff005a,#ff0057,#ff0053,#ff0050,#ff004d,#ff004a,#ff0047,#ff0045,#ff0042,#ff0040,#ff003e,#ff003c)"></i><i style="background:linear-gradient(90deg,#0048ff,#0045ff,#0042ff,#0040ff,#003dff,#003aff,#0037ff,#0034ff,#0031ff,#002eff,#002cff,#0229ff,#0726ff,#0e23ff,#1621ff,#1f1eff,#281bff,#3319ff,#3e16ff,#4914ff,#5511ff,#620fff,#700cff,#7d0aff,#8c08ff,#9b06ff,#aa04ff,#bb02ff,#cb01ff,#dc00ff,#ee00ff,#ff00fe,#ff00ed,#ff00dd,#ff00cf,#ff00c3,#ff00b7,#ff00ad,#ff00a3,#ff009b,#ff0093,#ff008b,#ff0084,#ff007e,#ff0078,#ff0073,#ff006e,#ff0069,#ff0064,#ff0060,#ff005c,#ff0058,#ff0055,#ff0052,#ff004e,#ff004c,#ff0049,#ff0046,#ff0044,#ff0041,#ff003f,#ff003d)"></i><i style="background:linear-gradient(90deg,#0046ff,#0044ff,#0041ff,#003eff,#003bff,#0038ff,#0035ff,#0033ff,#0030ff,#002dff,#002aff,#0128ff,#0725ff,#0d22ff,#151fff,#1e1dff,#271aff,#3118ff,#3c15ff,#4713ff,#5310ff,#600eff,#6d0cff,#7b09ff,#8907ff,#9805ff,#a704ff,#b702ff,#c701ff,#d800ff,#e900ff,#fb00ff,#ff00f1,#ff00e1,#ff00d3,#ff00c6,#ff00bb,#ff00b0,#ff00a6,#ff009e,#ff0095,#ff008e,#ff0087,#ff0080,#ff007a,#ff0075,#ff0070,#ff006b,#ff0066,#ff0062,#ff005e,#ff005a,#ff0057,#ff0053,#ff0050,#ff004d,#ff004a,#ff0047,#ff0045,#ff0042,#ff0040,#ff003e)"></i><i style="background:linear-gradient(90deg,#0045ff,#0042ff,#003fff,#003cff,#0039ff,#0037ff,#0034ff,#0031ff,#002eff,#002cff,#0029ff,#0126ff,#0624ff,#0d21ff,#141eff,#1d1cff,#2619ff,#3017ff,#3b14ff,#4612ff,#520fff,#5e0dff,#6b0bff,#7809ff,#8607ff,#9505ff,#a403ff,#b302ff,#c300ff,#d400ff,#e500ff,#f600ff,#ff00f6,#ff00e6,#ff00d7,#ff00ca,#ff00be,#ff00b3,#ff00aa,#ff00a1,#ff0098,#ff0090,#ff0089,#ff0083,#ff007d,#ff0077,#ff0072,#ff006d,#ff0068,#ff0064,#ff0060,#ff005c,#ff0058,#ff0055,#ff0052,#ff004f,#ff004c,#ff0049,#ff0046,#ff0044,#ff0041,#ff003f)"></i><i style="background:linear-gradient(90deg,#0043ff,#0040ff,#003dff,#003bff,#0038ff,#0035ff,#0032ff,#0030ff,#002dff,#002aff,#0028ff,#0125ff,#0622ff,#0c20ff,#141dff,#1c1bff,#2518ff,#2f16ff,#3913ff,#4411ff,#500fff,#5c0cff,#690aff,#7608ff,#8406ff,#9204ff,#a103ff,#b001ff,#c000ff,#d000ff,#e100ff,#f200ff,#ff00fa,#ff00ea,#ff00db,#ff00ce,#ff00c2,#ff00b7,#ff00ad,#ff00a3,#ff009b,#ff0093,#ff008c,#ff0085,#ff007f,#ff0079,#ff0074,#ff006f,#ff006a,#ff0066,#ff0061,#ff005e,#ff005a,#ff0056,#ff0053,#ff0050,#ff004d,#ff004a,#ff0048,#ff0045,#ff0043,#ff0040)"></i><i style="background:linear-gradient(90deg,#0041ff,#003fff,#003cff,#0039ff,#0036ff,#0034ff,#0031ff,#002eff,#002cff,#0029ff,#0026ff,#0124ff,#0521ff,#0c1fff,#131cff,#1b1aff,#2417ff,#2e15ff,#3812ff,#4310ff,#4e0eff,#5a0cff,#670aff,#7408ff,#8106ff,#8f04ff,#9e02ff,#ad01ff,#bc00ff,#cc00ff,#dd00ff,#ed00ff,#ff00ff,#ff00ee,#ff00df,#ff00d2,#ff00c5,#ff00ba,#ff00b0,#ff00a6,#ff009e,#ff0096,#ff008f,#ff0088,#ff0081,#ff007b,#ff0076,#ff0071,#ff006c,#ff0068,#ff0063,#ff005f,#ff005c,#ff0058,#ff0055,#ff0052,#ff004f,#ff004c,#ff0049,#ff0046,#ff0044,#ff0042)"></i><i style="background:linear-gradient(90deg,#0040ff,#003dff,#003aff,#0038ff,#0035ff,#0032ff,#0030ff,#002dff,#002aff,#0028ff,#0025ff,#0123ff,#0520ff,#0b1eff,#121bff,#1a19ff,#2316ff,#2c14ff,#3712ff,#410fff,#4c0dff,#580bff,#6409ff,#7107ff,#7f05ff,#8c03ff,#9b02ff,#a901ff,#b900ff,#c800ff,#d800ff,#e900ff,#fa00ff,#ff00f3,#ff00e3,#ff00d6,#ff00c9,#ff00be,#ff00b3,#ff00aa,#ff00a1,#ff0099,#ff0091,#ff008a,#ff0084,#ff007e,#ff0078,#ff0073,#ff006e,#ff0069,#ff0065,#ff0061,#ff005d,#ff005a,#ff0056,#ff0053,#ff0050,#ff004d,#ff004a,#ff0048,#ff0045,#ff0043)"></i><i style="background:linear-gradient(90deg,#003eff,#003bff,#0039ff,#0036ff,#0033ff,#0031ff,#002eff,#002cff,#0029ff,#0027ff,#0024ff,#0021ff,#051fff,#0b1cff,#121aff,#1a18ff,#2215ff,#2b13ff,#3511ff,#400eff,#4b0cff,#560aff,#6208ff,#6f06ff,#7c05ff,#8a03ff,#9801ff,#a600ff,#b500ff,#c500ff,#d500ff,#e500ff,#f600ff,#ff00f7,#ff00e8,#ff00d9,#ff00cd,#ff00c1,#ff00b6,#ff00ad,#ff00a4,#ff009b,#ff0094,#ff008d,#ff0086,#ff0080,#ff007a,#ff0075,#ff0070,#ff006b,#ff0067,#ff0063,#ff005f,#ff005b,#ff0058,#ff0055,#ff0051,#ff004f,#ff004c,#ff0049,#ff0047,#ff0044)"></i><i style="background:linear-gradient(90deg,#003dff,#003aff,#0037ff,#0035ff,#0032ff,#0030ff,#002dff,#002aff,#0028ff,#0025ff,#0023ff,#0020ff,#041eff,#0a1bff,#1119ff,#1917ff,#2114ff,#2a12ff,#3410ff,#3e0eff,#490cff,#550aff,#6008ff,#6d06ff,#7a04ff,#8702ff,#9501ff,#a300ff,#b200ff,#c100ff,#d100ff,#e100ff,#f100ff,#ff00fc,#ff00ec,#ff00dd,#ff00d0,#ff00c4,#ff00ba,#ff00b0,#ff00a7,#ff009e,#ff0096,#ff008f,#ff0089,#ff0082,#ff007d,#ff0077,#ff0072,#ff006d,#ff0069,#ff0065,#ff0061,#ff005d,#ff0059,#ff0056,#ff0053,#ff0050,#ff004d,#ff004a,#ff0048,#ff0045)"></i><i style="background:linear-gradient(90deg,#003bff,#0038ff,#0036ff,#0033ff,#0031ff,#002eff,#002cff,#0029ff,#0027ff,#0024ff,#0022ff,#001fff,#041dff,#0a1aff,#1018ff,#1816ff,#2013ff,#2911ff,#330fff,#3d0dff,#480bff,#5309ff,#5f07ff,#6b05ff,#7704ff,#8402ff,#9201ff,#a000ff,#af00ff,#be00ff,#cd00ff,#dd00ff,#ed00ff,#fe00ff,#ff00f0,#ff00e1,#ff00d4,#ff00c8,#ff00bd,#ff00b3,#ff00aa,#ff00a1,#ff0099,#ff0092,#ff008b,#ff0085,#ff007f,#ff0079,#ff0074,#ff006f,#ff006b,#ff0066,#ff0062,#ff005f,#ff005b,#ff0058,#ff0054,#ff0051,#ff004f,#ff004c,#ff0049,#ff0047)"></i><i style="background:linear-gradient(90deg,#003aff,#0037ff,#0034ff,#0032ff,#002fff,#002dff,#002aff,#0028ff,#0025ff,#0023ff,#0021ff,#001eff,#041cff,#0919ff,#1017ff,#1715ff,#1f13ff,#2810ff,#320eff,#3c0cff,#460aff,#5108ff,#5d06ff,#6905ff,#7503ff,#8202ff,#8f01ff,#9d00ff,#ab00ff,#ba00ff,#c900ff,#d900ff,#e900ff,#f900ff,#ff00f4,#ff00e5,#ff00d8,#ff00cb,#ff00c0,#ff00b6,#ff00ac,#ff00a4,#ff009c,#ff0094,#ff008d,#ff0087,#ff0081,#ff007b,#ff0076,#ff0071,#ff006d,#ff0068,#ff0064,#ff0060,#ff005d,#ff0059,#ff0056,#ff0053,#ff0050,#ff004d,#ff004b,#ff0048)"></i><i style="background:linear-gradient(90deg,#0038ff,#0036ff,#0033ff,#0031ff,#002eff,#002cff,#0029ff,#0027ff,#0024ff,#0022ff,#001fff,#001dff,#031bff,#0918ff,#0f16ff,#1714ff,#1f12ff,#2710ff,#300eff,#3a0cff,#450aff,#4f08ff,#5b06ff,#6704ff,#7303ff,#8001ff,#8d00ff,#9a00ff,#a800ff,#b700ff,#c600ff,#d500ff,#e500ff,#f500ff,#ff00f8,#ff00e9,#ff00dc,#ff00cf,#ff00c4,#ff00b9,#ff00af,#ff00a7,#ff009e,#ff0097,#ff0090,#ff0089,#ff0083,#ff007e,#ff0078,#ff0073,#ff006f,#ff006a,#ff0066,#ff0062,#ff005e,#ff005b,#ff0058,#ff0054,#ff0051,#ff004f,#ff004c,#ff0049)"></i><i style="background:linear-gradient(90deg,#0037ff,#0034ff,#0032ff,#002fff,#002dff,#002aff,#0028ff,#0026ff,#0023ff,#0021ff,#001eff,#001cff,#031aff,#0818ff,#0f15ff,#1613ff,#1e11ff,#260fff,#2f0dff,#390bff,#4309ff,#4e07ff,#5905ff,#6504ff,#7102ff,#7d01ff,#8a00ff,#9800ff,#a500ff,#b400ff,#c200ff,#d100ff,#e100ff,#f100ff,#ff00fd,#ff00ed,#ff00df,#ff00d3,#ff00c7,#ff00bc,#ff00b2,#ff00a9,#ff00a1,#ff0099,#ff0092,#ff008c,#ff0085,#ff0080,#ff007a,#ff0075,#ff0070,#ff006c,#ff0068,#ff0064,#ff0060,#ff005c,#ff0059,#ff0056,#ff0053,#ff0050,#ff004d,#ff004b)"></i><i style="background:linear-gradient(90deg,#0035ff,#0033ff,#0030ff,#002eff,#002cff,#0029ff,#0027ff,#0024ff,#0022ff,#0020ff,#001dff,#001bff,#0319ff,#0817ff,#0e14ff,#1512ff,#1d10ff,#250eff,#2e0cff,#380aff,#4208ff,#4c07ff,#5705ff,#6303ff,#6f02ff,#7b01ff,#8800ff,#9500ff,#a200ff,#b000ff,#bf00ff,#ce00ff,#dd00ff,#ed00ff,#fd00ff,#ff00f1,#ff00e3,#ff00d6,#ff00ca,#ff00bf,#ff00b6,#ff00ac,#ff00a4,#ff009c,#ff0095,#ff008e,#ff0088,#ff0082,#ff007c,#ff0077,#ff0072,#ff006e,#ff006a,#ff0065,#ff0062,#ff005e,#ff005b,#ff0057,#ff0054,#ff0051,#ff004f,#ff004c)"></i><i style="background:linear-gradient(90deg,#0034ff,#0032ff,#002fff,#002dff,#002aff,#0028ff,#0026ff,#0023ff,#0021ff,#001fff,#001cff,#001aff,#0318ff,#0816ff,#0e14ff,#1512ff,#1c0fff,#240dff,#2d0bff,#370aff,#4008ff,#4b06ff,#5604ff,#6103ff,#6d02ff,#7900ff,#8500ff,#9200ff,#a000ff,#ad00ff,#bc00ff,#ca00ff,#d900ff,#e900ff,#f900ff,#ff00f6,#ff00e7,#ff00da,#ff00ce,#ff00c3,#ff00b9,#ff00af,#ff00a7,#ff009f,#ff0097,#ff0090,#ff008a,#ff0084,#ff007e,#ff0079,#ff0074,#ff0070,#ff006b,#ff0067,#ff0063,#ff0060,#ff005c,#ff0059,#ff0056,#ff0053,#ff0050,#ff004d)"></i><i style="background:linear-gradient(90deg,#0033ff,#0030ff,#002eff,#002cff,#0029ff,#0027ff,#0025ff,#0022ff,#0020ff,#001eff,#001bff,#0019ff,#0217ff,#0715ff,#0d13ff,#1411ff,#1b0fff,#230dff,#2c0bff,#3509ff,#3f07ff,#4906ff,#5404ff,#5f02ff,#6a01ff,#7600ff,#8300ff,#9000ff,#9d00ff,#aa00ff,#b800ff,#c700ff,#d600ff,#e500ff,#f400ff,#ff00fa,#ff00eb,#ff00dd,#ff00d1,#ff00c6,#ff00bc,#ff00b2,#ff00a9,#ff00a1,#ff009a,#ff0093,#ff008c,#ff0086,#ff0081,#ff007b,#ff0076,#ff0072,#ff006d,#ff0069,#ff0065,#ff0061,#ff005e,#ff005a,#ff0057,#ff0054,#ff0051,#ff004f)"></i><i style="background:linear-gradient(90deg,#0031ff,#002fff,#002dff,#002aff,#0028ff,#0026ff,#0024ff,#0021ff,#001fff,#001dff,#001bff,#0018ff,#0216ff,#0714ff,#0d12ff,#1310ff,#1b0eff,#230cff,#2b0aff,#3408ff,#3e07ff,#4805ff,#5204ff,#5d02ff,#6901ff,#7400ff,#8000ff,#8d00ff,#9a00ff,#a700ff,#b500ff,#c300ff,#d200ff,#e100ff,#f000ff,#ff00fe,#ff00ef,#ff00e1,#ff00d5,#ff00c9,#ff00bf,#ff00b5,#ff00ac,#ff00a4,#ff009c,#ff0095,#ff008f,#ff0088,#ff0083,#ff007d,#ff0078,#ff0073,#ff006f,#ff006b,#ff0067,#ff0063,#ff005f,#ff005c,#ff0059,#ff0056,#ff0053,#ff0050)"></i><i style="background:linear-gradient(90deg,#0030ff,#002eff,#002cff,#0029ff,#0027ff,#0025ff,#0022ff,#0020ff,#001eff,#001cff,#001aff,#0018ff,#0215ff,#0613ff,#0c11ff,#130fff,#1a0dff,#220bff,#2a0aff,#3308ff,#3c06ff,#4605ff,#5103ff,#5b02ff,#6701ff,#7200ff,#7e00ff,#8b00ff,#9700ff,#a500ff,#b200ff,#c000ff,#cf00ff,#dd00ff,#ec00ff,#fc00ff,#ff00f3,#ff00e5,#ff00d8,#ff00cd,#ff00c2,#ff00b8,#ff00af,#ff00a7,#ff009f,#ff0098,#ff0091,#ff008b,#ff0085,#ff007f,#ff007a,#ff0075,#ff0071,#ff006c,#ff0068,#ff0065,#ff0061,#ff005d,#ff005a,#ff0057,#ff0054,#ff0051)"></i><i style="background:linear-gradient(90deg,#002fff,#002dff,#002aff,#0028ff,#0026ff,#0024ff,#0021ff,#001fff,#001dff,#001bff,#0019ff,#0017ff,#0215ff,#0613ff,#0c11ff,#120fff,#190dff,#210bff,#2909ff,#3207ff,#3b06ff,#4504ff,#4f03ff,#5a01ff,#6500ff,#7000ff,#7c00ff,#8800ff,#9500ff,#a200ff,#af00ff,#bd00ff,#cb00ff,#da00ff,#e900ff,#f800ff,#ff00f7,#ff00e9,#ff00dc,#ff00d0,#ff00c5,#ff00bb,#ff00b2,#ff00a9,#ff00a2,#ff009a,#ff0093,#ff008d,#ff0087,#ff0081,#ff007c,#ff0077,#ff0073,#ff006e,#ff006a,#ff0066,#ff0063,#ff005f,#ff005c,#ff0059,#ff0056,#ff0053)"></i><i style="background:linear-gradient(90deg,#002eff,#002cff,#0029ff,#0027ff,#0025ff,#0023ff,#0020ff,#001eff,#001cff,#001aff,#0018ff,#0016ff,#0114ff,#0612ff,#0b10ff,#120eff,#190cff,#200aff,#2808ff,#3107ff,#3a05ff,#4404ff,#4e02ff,#5801ff,#6300ff,#6e00ff,#7a00ff,#8600ff,#9200ff,#9f00ff,#ac00ff,#ba00ff,#c800ff,#d600ff,#e500ff,#f400ff,#ff00fb,#ff00ec,#ff00df,#ff00d3,#ff00c8,#ff00be,#ff00b5,#ff00ac,#ff00a4,#ff009d,#ff0096,#ff008f,#ff0089,#ff0084,#ff007e,#ff0079,#ff0074,#ff0070,#ff006c,#ff0068,#ff0064,#ff0061,#ff005d,#ff005a,#ff0057,#ff0054)"></i><i style="background:linear-gradient(90deg,#002dff,#002aff,#0028ff,#0026ff,#0024ff,#0022ff,#001fff,#001dff,#001bff,#0019ff,#0017ff,#0015ff,#0113ff,#0511ff,#0b0fff,#110dff,#180bff,#1f0aff,#2708ff,#3006ff,#3905ff,#4203ff,#4c02ff,#5601ff,#6100ff,#6c00ff,#7800ff,#8400ff,#9000ff,#9c00ff,#a900ff,#b700ff,#c500ff,#d300ff,#e100ff,#f000ff,#ff00ff,#ff00f0,#ff00e3,#ff00d7,#ff00cc,#ff00c1,#ff00b8,#ff00af,#ff00a7,#ff009f,#ff0098,#ff0092,#ff008b,#ff0086,#ff0080,#ff007b,#ff0076,#ff0072,#ff006e,#ff006a,#ff0066,#ff0062,#ff005f,#ff005b,#ff0058,#ff0055)"></i><i style="background:linear-gradient(90deg,#002cff,#0029ff,#0027ff,#0025ff,#0023ff,#0021ff,#001fff,#001cff,#001aff,#0018ff,#0016ff,#0014ff,#0112ff,#0510ff,#0a0eff,#100dff,#170bff,#1f09ff,#2607ff,#2f06ff,#3804ff,#4103ff,#4b02ff,#5501ff,#5f00ff,#6a00ff,#7600ff,#8100ff,#8d00ff,#9a00ff,#a700ff,#b400ff,#c100ff,#cf00ff,#dd00ff,#ec00ff,#fb00ff,#ff00f4,#ff00e7,#ff00da,#ff00cf,#ff00c4,#ff00bb,#ff00b2,#ff00a9,#ff00a2,#ff009b,#ff0094,#ff008e,#ff0088,#ff0082,#ff007d,#ff0078,#ff0074,#ff006f,#ff006b,#ff0067,#ff0064,#ff0060,#ff005d,#ff005a,#ff0057)"></i><i style="background:linear-gradient(90deg,#002aff,#0028ff,#0026ff,#0024ff,#0022ff,#0020ff,#001eff,#001cff,#0019ff,#0017ff,#0015ff,#0013ff,#0112ff,#0510ff,#0a0eff,#100cff,#170aff,#1e09ff,#2607ff,#2e05ff,#3704ff,#4003ff,#4901ff,#5300ff,#5e00ff,#6800ff,#7400ff,#7f00ff,#8b00ff,#9700ff,#a400ff,#b100ff,#be00ff,#cc00ff,#da00ff,#e800ff,#f700ff,#ff00f8,#ff00ea,#ff00de,#ff00d2,#ff00c7,#ff00be,#ff00b4,#ff00ac,#ff00a4,#ff009d,#ff0096,#ff0090,#ff008a,#ff0084,#ff007f,#ff007a,#ff0075,#ff0071,#ff006d,#ff0069,#ff0065,#ff0062,#ff005e,#ff005b,#ff0058)"></i><i style="background:linear-gradient(90deg,#0029ff,#0027ff,#0025ff,#0023ff,#0021ff,#001fff,#001dff,#001bff,#0019ff,#0017ff,#0015ff,#0013ff,#0111ff,#050fff,#0a0dff,#0f0bff,#160aff,#1d08ff,#2506ff,#2d05ff,#3503ff,#3e02ff,#4801ff,#5200ff,#5c00ff,#6700ff,#7200ff,#7d00ff,#8900ff,#9500ff,#a100ff,#ae00ff,#bb00ff,#c900ff,#d700ff,#e500ff,#f300ff,#ff00fc,#ff00ee,#ff00e1,#ff00d5,#ff00ca,#ff00c1,#ff00b7,#ff00af,#ff00a7,#ff009f,#ff0099,#ff0092,#ff008c,#ff0086,#ff0081,#ff007c,#ff0077,#ff0073,#ff006f,#ff006b,#ff0067,#ff0063,#ff0060,#ff005d,#ff005a)"></i><i style="background:linear-gradient(90deg,#0028ff,#0026ff,#0024ff,#0022ff,#0020ff,#001eff,#001cff,#001aff,#0018ff,#0016ff,#0014ff,#0012ff,#0110ff,#040eff,#090dff,#0f0bff,#1509ff,#1c07ff,#2406ff,#2c04ff,#3403ff,#3d02ff,#4701ff,#5000ff,#5a00ff,#6500ff,#7000ff,#7b00ff,#8600ff,#9200ff,#9f00ff,#ab00ff,#b800ff,#c600ff,#d300ff,#e100ff,#ef00ff,#fe00ff,#ff00f2,#ff00e5,#ff00d9,#ff00ce,#ff00c3,#ff00ba,#ff00b1,#ff00a9,#ff00a2,#ff009b,#ff0094,#ff008e,#ff0088,#ff0083,#ff007e,#ff0079,#ff0075,#ff0070,#ff006c,#ff0069,#ff0065,#ff0061,#ff005e,#ff005b)"></i><i style="background:linear-gradient(90deg,#0027ff,#0025ff,#0023ff,#0021ff,#001fff,#001dff,#001bff,#0019ff,#0017ff,#0015ff,#0013ff,#0011ff,#000fff,#040eff,#090cff,#0e0aff,#1509ff,#1c07ff,#2305ff,#2b04ff,#3303ff,#3c02ff,#4501ff,#4f00ff,#5900ff,#6300ff,#6e00ff,#7900ff,#8400ff,#9000ff,#9c00ff,#a900ff,#b500ff,#c200ff,#d000ff,#de00ff,#ec00ff,#fa00ff,#ff00f5,#ff00e8,#ff00dc,#ff00d1,#ff00c6,#ff00bd,#ff00b4,#ff00ac,#ff00a4,#ff009d,#ff0097,#ff0090,#ff008b,#ff0085,#ff0080,#ff007b,#ff0076,#ff0072,#ff006e,#ff006a,#ff0066,#ff0063,#ff0060,#ff005c)"></i><i style="background:linear-gradient(90deg,#0026ff,#0024ff,#0022ff,#0020ff,#001eff,#001cff,#001aff,#0018ff,#0016ff,#0014ff,#0012ff,#0011ff,#000fff,#040dff,#080bff,#0e0aff,#1408ff,#1b06ff,#2205ff,#2a04ff,#3202ff,#3b01ff,#4400ff,#4d00ff,#5700ff,#6100ff,#6c00ff,#7700ff,#8200ff,#8e00ff,#9a00ff,#a600ff,#b200ff,#bf00ff,#cd00ff,#da00ff,#e800ff,#f600ff,#ff00f9,#ff00ec,#ff00df,#ff00d4,#ff00ca,#ff00c0,#ff00b7,#ff00af,#ff00a7,#ff00a0,#ff0099,#ff0093,#ff008d,#ff0087,#ff0082,#ff007d,#ff0078,#ff0074,#ff0070,#ff006c,#ff0068,#ff0064,#ff0061,#ff005e)"></i><i style="background:linear-gradient(90deg,#0025ff,#0023ff,#0021ff,#001fff,#001dff,#001bff,#0019ff,#0017ff,#0016ff,#0014ff,#0012ff,#0010ff,#000eff,#030cff,#080bff,#0d09ff,#1408ff,#1a06ff,#2105ff,#2903ff,#3102ff,#3a01ff,#4300ff,#4c00ff,#5600ff,#6000ff,#6a00ff,#7500ff,#8000ff,#8b00ff,#9700ff,#a300ff,#b000ff,#bc00ff,#ca00ff,#d700ff,#e500ff,#f300ff,#ff00fd,#ff00ef,#ff00e3,#ff00d7,#ff00cd,#ff00c3,#ff00ba,#ff00b1,#ff00a9,#ff00a2,#ff009b,#ff0095,#ff008f,#ff0089,#ff0084,#ff007f,#ff007a,#ff0076,#ff0071,#ff006d,#ff006a,#ff0066,#ff0063,#ff005f)"></i><i style="background:linear-gradient(90deg,#0024ff,#0022ff,#0020ff,#001eff,#001cff,#001aff,#0019ff,#0017ff,#0015ff,#0013ff,#0011ff,#000fff,#000eff,#030cff,#080aff,#0d09ff,#1307ff,#1a06ff,#2104ff,#2803ff,#3002ff,#3901ff,#4100ff,#4b00ff,#5400ff,#5e00ff,#6800ff,#7300ff,#7e00ff,#8900ff,#9500ff,#a100ff,#ad00ff,#ba00ff,#c600ff,#d400ff,#e100ff,#ef00ff,#fd00ff,#ff00f3,#ff00e6,#ff00da,#ff00d0,#ff00c6,#ff00bc,#ff00b4,#ff00ac,#ff00a4,#ff009d,#ff0097,#ff0091,#ff008b,#ff0086,#ff0081,#ff007c,#ff0077,#ff0073,#ff006f,#ff006b,#ff0068,#ff0064,#ff0061)"></i><i style="background:linear-gradient(90deg,#0023ff,#0021ff,#001fff,#001eff,#001cff,#001aff,#0018ff,#0016ff,#0014ff,#0012ff,#0010ff,#000fff,#000dff,#030bff,#070aff,#0d08ff,#1207ff,#1905ff,#2004ff,#2703ff,#2f01ff,#3801ff,#4000ff,#4900ff,#5300ff,#5d00ff,#6700ff,#7100ff,#7c00ff,#8700ff,#9200ff,#9e00ff,#aa00ff,#b700ff,#c300ff,#d000ff,#de00ff,#ec00ff,#f900ff,#ff00f7,#ff00ea,#ff00de,#ff00d3,#ff00c9,#ff00bf,#ff00b7,#ff00ae,#ff00a7,#ff00a0,#ff0099,#ff0093,#ff008d,#ff0088,#ff0083,#ff007e,#ff0079,#ff0075,#ff0071,#ff006d,#ff0069,#ff0066,#ff0062)"></i><i style="background:linear-gradient(90deg,#0023ff,#0021ff,#001fff,#001dff,#001bff,#0019ff,#0017ff,#0015ff,#0013ff,#0012ff,#0010ff,#000eff,#000cff,#030bff,#0709ff,#0c08ff,#1206ff,#1805ff,#1f03ff,#2702ff,#2e01ff,#3700ff,#3f00ff,#4800ff,#5100ff,#5b00ff,#6500ff,#6f00ff,#7a00ff,#8500ff,#9000ff,#9c00ff,#a800ff,#b400ff,#c100ff,#cd00ff,#db00ff,#e800ff,#f600ff,#ff00fa,#ff00ed,#ff00e1,#ff00d6,#ff00cc,#ff00c2,#ff00b9,#ff00b1,#ff00a9,#ff00a2,#ff009b,#ff0095,#ff008f,#ff008a,#ff0085,#ff0080,#ff007b,#ff0077,#ff0072,#ff006e,#ff006b,#ff0067,#ff0064)"></i><i style="background:linear-gradient(90deg,#0022ff,#0020ff,#001eff,#001cff,#001aff,#0018ff,#0016ff,#0014ff,#0013ff,#0011ff,#000fff,#000dff,#000cff,#020aff,#0709ff,#0c07ff,#1106ff,#1804ff,#1f03ff,#2602ff,#2d01ff,#3500ff,#3e00ff,#4700ff,#5000ff,#5900ff,#6300ff,#6d00ff,#7800ff,#8300ff,#8e00ff,#9900ff,#a500ff,#b100ff,#be00ff,#ca00ff,#d700ff,#e500ff,#f200ff,#ff00fe,#ff00f1,#ff00e4,#ff00d9,#ff00cf,#ff00c5,#ff00bc,#ff00b4,#ff00ac,#ff00a5,#ff009e,#ff0097,#ff0091,#ff008c,#ff0086,#ff0081,#ff007d,#ff0078,#ff0074,#ff0070,#ff006c,#ff0069,#ff0065)"></i><i style="background:linear-gradient(90deg,#0021ff,#001fff,#001dff,#001bff,#0019ff,#0017ff,#0016ff,#0014ff,#0012ff,#0010ff,#000fff,#000dff,#000bff,#020aff,#0608ff,#0b07ff,#1105ff,#1704ff,#1e03ff,#2502ff,#2d01ff,#3400ff,#3d00ff,#4600ff,#4f00ff,#5800ff,#6200ff,#6c00ff,#7600ff,#8100ff,#8c00ff,#9700ff,#a300ff,#af00ff,#bb00ff,#c700ff,#d400ff,#e100ff,#ef00ff,#fc00ff,#ff00f4,#ff00e8,#ff00dc,#ff00d2,#ff00c8,#ff00bf,#ff00b6,#ff00ae,#ff00a7,#ff00a0,#ff009a,#ff0093,#ff008e,#ff0088,#ff0083,#ff007f,#ff007a,#ff0076,#ff0072,#ff006e,#ff006a,#ff0067)"></i><i style="background:linear-gradient(90deg,#0020ff,#001eff,#001cff,#001aff,#0018ff,#0017ff,#0015ff,#0013ff,#0011ff,#0010ff,#000eff,#000cff,#000bff,#0209ff,#0608ff,#0b06ff,#1005ff,#1704ff,#1d02ff,#2401ff,#2c00ff,#3300ff,#3c00ff,#4400ff,#4d00ff,#5700ff,#6000ff,#6a00ff,#7400ff,#7f00ff,#8a00ff,#9500ff,#a000ff,#ac00ff,#b800ff,#c400ff,#d100ff,#de00ff,#eb00ff,#f900ff,#ff00f8,#ff00eb,#ff00df,#ff00d5,#ff00cb,#ff00c1,#ff00b9,#ff00b1,#ff00a9,#ff00a2,#ff009c,#ff0096,#ff0090,#ff008a,#ff0085,#ff0080,#ff007c,#ff0077,#ff0073,#ff006f,#ff006c,#ff0068)"></i><i style="background:linear-gradient(90deg,#001fff,#001dff,#001bff,#001aff,#0018ff,#0016ff,#0014ff,#0012ff,#0011ff,#000fff,#000dff,#000cff,#000aff,#0209ff,#0607ff,#0b06ff,#1004ff,#1603ff,#1c02ff,#2301ff,#2b00ff,#3300ff,#3b00ff,#4300ff,#4c00ff,#5500ff,#5f00ff,#6800ff,#7200ff,#7d00ff,#8800ff,#9300ff,#9e00ff,#a900ff,#b500ff,#c200ff,#ce00ff,#db00ff,#e800ff,#f500ff,#ff00fb,#ff00ee,#ff00e3,#ff00d8,#ff00ce,#ff00c4,#ff00bb,#ff00b3,#ff00ac,#ff00a5,#ff009e,#ff0098,#ff0092,#ff008c,#ff0087,#ff0082,#ff007e,#ff0079,#ff0075,#ff0071,#ff006d,#ff006a)"></i><i style="background:linear-gradient(90deg,#001eff,#001cff,#001bff,#0019ff,#0017ff,#0015ff,#0013ff,#0012ff,#0010ff,#000eff,#000dff,#000bff,#000aff,#0208ff,#0507ff,#0a05ff,#0f04ff,#1503ff,#1c02ff,#2301ff,#2a00ff,#3200ff,#3a00ff,#4200ff,#4b00ff,#5400ff,#5d00ff,#6700ff,#7100ff,#7b00ff,#8600ff,#9000ff,#9c00ff,#a700ff,#b300ff,#bf00ff,#cb00ff,#d800ff,#e500ff,#f200ff,#ff00ff,#ff00f2,#ff00e6,#ff00db,#ff00d0,#ff00c7,#ff00be,#ff00b6,#ff00ae,#ff00a7,#ff00a0,#ff009a,#ff0094,#ff008e,#ff0089,#ff0084,#ff007f,#ff007b,#ff0077,#ff0073,#ff006f,#ff006b)"></i><i style="background:linear-gradient(90deg,#001dff,#001cff,#001aff,#0018ff,#0016ff,#0015ff,#0013ff,#0011ff,#000fff,#000eff,#000cff,#000bff,#0009ff,#0108ff,#0506ff,#0a05ff,#0f04ff,#1503ff,#1b02ff,#2201ff,#2900ff,#3100ff,#3900ff,#4100ff,#4900ff,#5200ff,#5c00ff,#6500ff,#6f00ff,#7900ff,#8300ff,#8e00ff,#9900ff,#a500ff,#b000ff,#bc00ff,#c800ff,#d500ff,#e100ff,#ee00ff,#fc00ff,#ff00f5,#ff00e9,#ff00de,#ff00d3,#ff00ca,#ff00c1,#ff00b8,#ff00b1,#ff00a9,#ff00a2,#ff009c,#ff0096,#ff0090,#ff008b,#ff0086,#ff0081,#ff007d,#ff0078,#ff0074,#ff0070,#ff006d)"></i><i style="background:linear-gradient(90deg,#001dff,#001bff,#0019ff,#0017ff,#0016ff,#0014ff,#0012ff,#0011ff,#000fff,#000dff,#000cff,#000aff,#0009ff,#0107ff,#0506ff,#0905ff,#0f03ff,#1402ff,#1b01ff,#2100ff,#2800ff,#3000ff,#3800ff,#4000ff,#4800ff,#5100ff,#5a00ff,#6300ff,#6d00ff,#7700ff,#8200ff,#8c00ff,#9700ff,#a200ff,#ae00ff,#b900ff,#c500ff,#d200ff,#de00ff,#eb00ff,#f800ff,#ff00f9,#ff00ec,#ff00e1,#ff00d6,#ff00cd,#ff00c3,#ff00bb,#ff00b3,#ff00ac,#ff00a5,#ff009e,#ff0098,#ff0092,#ff008d,#ff0088,#ff0083,#ff007e,#ff007a,#ff0076,#ff0072,#ff006e)"></i><i style="background:linear-gradient(90deg,#001cff,#001aff,#0018ff,#0017ff,#0015ff,#0013ff,#0012ff,#0010ff,#000eff,#000dff,#000bff,#000aff,#0008ff,#0107ff,#0506ff,#0904ff,#0e03ff,#1402ff,#1a01ff,#2000ff,#2700ff,#2f00ff,#3700ff,#3f00ff,#4700ff,#5000ff,#5900ff,#6200ff,#6c00ff,#7500ff,#8000ff,#8a00ff,#9500ff,#a000ff,#ab00ff,#b700ff,#c300ff,#cf00ff,#db00ff,#e800ff,#f500ff,#ff00fc,#ff00f0,#ff00e4,#ff00d9,#ff00cf,#ff00c6,#ff00be,#ff00b6,#ff00ae,#ff00a7,#ff00a0,#ff009a,#ff0094,#ff008f,#ff008a,#ff0085,#ff0080,#ff007c,#ff0077,#ff0074,#ff0070)"></i><i style="background:linear-gradient(90deg,#001bff,#0019ff,#0018ff,#0016ff,#0014ff,#0013ff,#0011ff,#000fff,#000eff,#000cff,#000bff,#0009ff,#0008ff,#0106ff,#0405ff,#0904ff,#0e03ff,#1302ff,#1901ff,#2000ff,#2700ff,#2e00ff,#3600ff,#3d00ff,#4600ff,#4e00ff,#5700ff,#6000ff,#6a00ff,#7400ff,#7e00ff,#8800ff,#9300ff,#9e00ff,#a900ff,#b400ff,#c000ff,#cc00ff,#d800ff,#e500ff,#f100ff,#fe00ff,#ff00f3,#ff00e7,#ff00dc,#ff00d2,#ff00c9,#ff00c0,#ff00b8,#ff00b0,#ff00a9,#ff00a3,#ff009c,#ff0096,#ff0091,#ff008c,#ff0087,#ff0082,#ff007d,#ff0079,#ff0075,#ff0071)"></i><i style="background:linear-gradient(90deg,#001aff,#0019ff,#0017ff,#0015ff,#0014ff,#0012ff,#0010ff,#000fff,#000dff,#000cff,#000aff,#0009ff,#0007ff,#0106ff,#0405ff,#0804ff,#0d02ff,#1301ff,#1901ff,#1f00ff,#2600ff,#2d00ff,#3500ff,#3c00ff,#4500ff,#4d00ff,#5600ff,#5f00ff,#6800ff,#7200ff,#7c00ff,#8600ff,#9100ff,#9b00ff,#a600ff,#b200ff,#bd00ff,#c900ff,#d500ff,#e100ff,#ee00ff,#fb00ff,#ff00f6,#ff00ea,#ff00df,#ff00d5,#ff00cc,#ff00c3,#ff00bb,#ff00b3,#ff00ac,#ff00a5,#ff009e,#ff0098,#ff0093,#ff008d,#ff0088,#ff0084,#ff007f,#ff007b,#ff0077,#ff0073)"></i><i style="background:linear-gradient(90deg,#001aff,#0018ff,#0016ff,#0015ff,#0013ff,#0011ff,#0010ff,#000eff,#000dff,#000bff,#000aff,#0008ff,#0007ff,#0106ff,#0404ff,#0803ff,#0d02ff,#1201ff,#1800ff,#1e00ff,#2500ff,#2c00ff,#3400ff,#3b00ff,#4300ff,#4c00ff,#5400ff,#5d00ff,#6700ff,#7000ff,#7a00ff,#8400ff,#8e00ff,#9900ff,#a400ff,#af00ff,#bb00ff,#c600ff,#d200ff,#de00ff,#eb00ff,#f800ff,#ff00fa,#ff00ee,#ff00e2,#ff00d8,#ff00ce,#ff00c5,#ff00bd,#ff00b5,#ff00ae,#ff00a7,#ff00a1,#ff009a,#ff0095,#ff008f,#ff008a,#ff0085,#ff0081,#ff007c,#ff0078,#ff0074)"></i><i style="background:linear-gradient(90deg,#0019ff,#0017ff,#0016ff,#0014ff,#0012ff,#0011ff,#000fff,#000eff,#000cff,#000bff,#0009ff,#0008ff,#0007ff,#0105ff,#0404ff,#0803ff,#0c02ff,#1201ff,#1800ff,#1e00ff,#2400ff,#2b00ff,#3300ff,#3a00ff,#4200ff,#4b00ff,#5300ff,#5c00ff,#6500ff,#6f00ff,#7800ff,#8200ff,#8c00ff,#9700ff,#a200ff,#ad00ff,#b800ff,#c300ff,#cf00ff,#db00ff,#e800ff,#f400ff,#ff00fd,#ff00f1,#ff00e5,#ff00db,#ff00d1,#ff00c8,#ff00c0,#ff00b8,#ff00b0,#ff00a9,#ff00a3,#ff009d,#ff0097,#ff0091,#ff008c,#ff0087,#ff0083,#ff007e,#ff007a,#ff0076)"></i><i style="background:linear-gradient(90deg,#0018ff,#0017ff,#0015ff,#0013ff,#0012ff,#0010ff,#000fff,#000dff,#000cff,#000aff,#0009ff,#0007ff,#0006ff,#0005ff,#0304ff,#0703ff,#0c02ff,#1101ff,#1700ff,#1d00ff,#2400ff,#2b00ff,#3200ff,#3900ff,#4100ff,#4900ff,#5200ff,#5b00ff,#6400ff,#6d00ff,#7700ff,#8000ff,#8a00ff,#9500ff,#9f00ff,#aa00ff,#b500ff,#c100ff,#cc00ff,#d800ff,#e500ff,#f100ff,#fe00ff,#ff00f4,#ff00e8,#ff00de,#ff00d4,#ff00cb,#ff00c2,#ff00ba,#ff00b3,#ff00ac,#ff00a5,#ff009f,#ff0099,#ff0093,#ff008e,#ff0089,#ff0084,#ff0080,#ff007c,#ff0078)"></i><i style="background:linear-gradient(90deg,#0018ff,#0016ff,#0014ff,#0013ff,#0011ff,#0010ff,#000eff,#000dff,#000bff,#000aff,#0008ff,#0007ff,#0006ff,#0005ff,#0303ff,#0702ff,#0c01ff,#1101ff,#1700ff,#1d00ff,#2300ff,#2a00ff,#3100ff,#3800ff,#4000ff,#4800ff,#5100ff,#5900ff,#6200ff,#6b00ff,#7500ff,#7f00ff,#8800ff,#9300ff,#9d00ff,#a800ff,#b300ff,#be00ff,#ca00ff,#d500ff,#e100ff,#ee00ff,#fa00ff,#ff00f7,#ff00ec,#ff00e1,#ff00d7,#ff00cd,#ff00c5,#ff00bd,#ff00b5,#ff00ae,#ff00a7,#ff00a1,#ff009b,#ff0095,#ff0090,#ff008b,#ff0086,#ff0081,#ff007d,#ff0079)"></i><i style="background:linear-gradient(90deg,#0017ff,#0015ff,#0014ff,#0012ff,#0011ff,#000fff,#000eff,#000cff,#000bff,#0009ff,#0008ff,#0007ff,#0005ff,#0004ff,#0303ff,#0702ff,#0b01ff,#1000ff,#1600ff,#1c00ff,#2200ff,#2900ff,#3000ff,#3700ff,#3f00ff,#4700ff,#4f00ff,#5800ff,#6100ff,#6a00ff,#7300ff,#7d00ff,#8700ff,#9100ff,#9b00ff,#a600ff,#b100ff,#bc00ff,#c700ff,#d300ff,#de00ff,#eb00ff,#f700ff,#ff00fb,#ff00ef,#ff00e4,#ff00da,#ff00d0,#ff00c7,#ff00bf,#ff00b7,#ff00b0,#ff00a9,#ff00a3,#ff009d,#ff0097,#ff0092,#ff008d,#ff0088,#ff0083,#ff007f,#ff007b)"></i><i style="background:linear-gradient(90deg,#0016ff,#0015ff,#0013ff,#0012ff,#0010ff,#000fff,#000dff,#000cff,#000aff,#0009ff,#0008ff,#0006ff,#0005ff,#0004ff,#0303ff,#0702ff,#0b01ff,#1000ff,#1500ff,#1b00ff,#2200ff,#2800ff,#2f00ff,#3700ff,#3e00ff,#4600ff,#4e00ff,#5700ff,#5f00ff,#6800ff,#7100ff,#7b00ff,#8500ff,#8f00ff,#9900ff,#a300ff,#ae00ff,#b900ff,#c400ff,#d000ff,#dc00ff,#e800ff,#f400ff,#ff00fe,#ff00f2,#ff00e7,#ff00dc,#ff00d3,#ff00ca,#ff00c2,#ff00ba,#ff00b2,#ff00ab,#ff00a5,#ff009f,#ff0099,#ff0094,#ff008e,#ff008a,#ff0085,#ff0081,#ff007c)"></i><i style="background:linear-gradient(90deg,#0016ff,#0014ff,#0013ff,#0011ff,#000fff,#000eff,#000dff,#000bff,#000aff,#0008ff,#0007ff,#0006ff,#0005ff,#0004ff,#0302ff,#0602ff,#0b01ff,#1000ff,#1500ff,#1b00ff,#2100ff,#2800ff,#2e00ff,#3600ff,#3d00ff,#4500ff,#4d00ff,#5500ff,#5e00ff,#6700ff,#7000ff,#7900ff,#8300ff,#8d00ff,#9700ff,#a100ff,#ac00ff,#b700ff,#c200ff,#cd00ff,#d900ff,#e400ff,#f100ff,#fd00ff,#ff00f5,#ff00ea,#ff00df,#ff00d6,#ff00cd,#ff00c4,#ff00bc,#ff00b5,#ff00ae,#ff00a7,#ff00a1,#ff009b,#ff0096,#ff0090,#ff008b,#ff0087,#ff0082,#ff007e)"></i><i style="background:linear-gradient(90deg,#0015ff,#0013ff,#0012ff,#0010ff,#000fff,#000dff,#000cff,#000bff,#0009ff,#0008ff,#0007ff,#0005ff,#0004ff,#0003ff,#0202ff,#0601ff,#0a00ff,#0f00ff,#1400ff,#1a00ff,#2000ff,#2700ff,#2e00ff,#3500ff,#3c00ff,#4400ff,#4c00ff,#5400ff,#5c00ff,#6500ff,#6e00ff,#7800ff,#8100ff,#8b00ff,#9500ff,#9f00ff,#aa00ff,#b400ff,#bf00ff,#ca00ff,#d600ff,#e200ff,#ed00ff,#fa00ff,#ff00f8,#ff00ed,#ff00e2,#ff00d8,#ff00cf,#ff00c7,#ff00bf,#ff00b7,#ff00b0,#ff00a9,#ff00a3,#ff009d,#ff0097,#ff0092,#ff008d,#ff0088,#ff0084,#ff0080)"></i><i style="background:linear-gradient(90deg,#0014ff,#0013ff,#0011ff,#0010ff,#000eff,#000dff,#000cff,#000aff,#0009ff,#0008ff,#0006ff,#0005ff,#0004ff,#0003ff,#0202ff,#0601ff,#0a00ff,#0f00ff,#1400ff,#1a00ff,#2000ff,#2600ff,#2d00ff,#3400ff,#3b00ff,#4300ff,#4b00ff,#5300ff,#5b00ff,#6400ff,#6d00ff,#7600ff,#7f00ff,#8900ff,#9300ff,#9d00ff,#a700ff,#b200ff,#bd00ff,#c800ff,#d300ff,#df00ff,#ea00ff,#f600ff,#ff00fb,#ff00f0,#ff00e5,#ff00db,#ff00d2,#ff00c9,#ff00c1,#ff00b9,#ff00b2,#ff00ab,#ff00a5,#ff009f,#ff0099,#ff0094,#ff008f,#ff008a,#ff0086,#ff0081)"></i><i style="background:linear-gradient(90deg,#0014ff,#0012ff,#0011ff,#000fff,#000eff,#000cff,#000bff,#000aff,#0008ff,#0007ff,#0006ff,#0005ff,#0004ff,#0003ff,#0202ff,#0501ff,#0a00ff,#0e00ff,#1400ff,#1900ff,#1f00ff,#2500ff,#2c00ff,#3300ff,#3a00ff,#4200ff,#4900ff,#5100ff,#5a00ff,#6200ff,#6b00ff,#7400ff,#7e00ff,#8700ff,#9100ff,#9b00ff,#a500ff,#b000ff,#ba00ff,#c500ff,#d000ff,#dc00ff,#e700ff,#f300ff,#ff00ff,#ff00f3,#ff00e8,#ff00de,#ff00d4,#ff00cc,#ff00c3,#ff00bc,#ff00b4,#ff00ae,#ff00a7,#ff00a1,#ff009b,#ff0096,#ff0091,#ff008c,#ff0087,#ff0083)"></i><i style="background:linear-gradient(90deg,#0013ff,#0012ff,#0010ff,#000fff,#000dff,#000cff,#000bff,#0009ff,#0008ff,#0007ff,#0006ff,#0004ff,#0003ff,#0002ff,#0201ff,#0501ff,#0900ff,#0e00ff,#1300ff,#1900ff,#1e00ff,#2500ff,#2b00ff,#3200ff,#3900ff,#4100ff,#4800ff,#5000ff,#5800ff,#6100ff,#6a00ff,#7300ff,#7c00ff,#8500ff,#8f00ff,#9900ff,#a300ff,#ad00ff,#b800ff,#c300ff,#ce00ff,#d900ff,#e400ff,#f000ff,#fc00ff,#ff00f6,#ff00eb,#ff00e1,#ff00d7,#ff00ce,#ff00c6,#ff00be,#ff00b7,#ff00b0,#ff00a9,#ff00a3,#ff009d,#ff0098,#ff0093,#ff008e,#ff0089,#ff0084)"></i><i style="background:linear-gradient(90deg,#0013ff,#0011ff,#0010ff,#000eff,#000dff,#000cff,#000aff,#0009ff,#0008ff,#0006ff,#0005ff,#0004ff,#0003ff,#0002ff,#0201ff,#0500ff,#0900ff,#0e00ff,#1300ff,#1800ff,#1e00ff,#2400ff,#2a00ff,#3100ff,#3800ff,#4000ff,#4700ff,#4f00ff,#5700ff,#6000ff,#6800ff,#7100ff,#7a00ff,#8300ff,#8d00ff,#9700ff,#a100ff,#ab00ff,#b500ff,#c000ff,#cb00ff,#d600ff,#e200ff,#ed00ff,#f900ff,#ff00f9,#ff00ee,#ff00e4,#ff00da,#ff00d1,#ff00c8,#ff00c0,#ff00b9,#ff00b2,#ff00ab,#ff00a5,#ff009f,#ff009a,#ff0094,#ff008f,#ff008b,#ff0086)"></i><i style="background:linear-gradient(90deg,#0012ff,#0011ff,#000fff,#000eff,#000cff,#000bff,#000aff,#0008ff,#0007ff,#0006ff,#0005ff,#0004ff,#0003ff,#0002ff,#0101ff,#0500ff,#0900ff,#0d00ff,#1200ff,#1800ff,#1d00ff,#2300ff,#2a00ff,#3000ff,#3700ff,#3f00ff,#4600ff,#4e00ff,#5600ff,#5e00ff,#6700ff,#6f00ff,#7800ff,#8200ff,#8b00ff,#9500ff,#9f00ff,#a900ff,#b300ff,#be00ff,#c900ff,#d400ff,#df00ff,#ea00ff,#f600ff,#ff00fc,#ff00f1,#ff00e6,#ff00dd,#ff00d3,#ff00cb,#ff00c3,#ff00bb,#ff00b4,#ff00ad,#ff00a7,#ff00a1,#ff009c,#ff0096,#ff0091,#ff008c,#ff0088)"></i><i style="background:linear-gradient(90deg,#0012ff,#0010ff,#000fff,#000dff,#000cff,#000bff,#0009ff,#0008ff,#0007ff,#0006ff,#0005ff,#0003ff,#0002ff,#0002ff,#0101ff,#0400ff,#0800ff,#0d00ff,#1200ff,#1700ff,#1d00ff,#2300ff,#2900ff,#3000ff,#3700ff,#3e00ff,#4500ff,#4d00ff,#5500ff,#5d00ff,#6500ff,#6e00ff,#7700ff,#8000ff,#8900ff,#9300ff,#9d00ff,#a700ff,#b100ff,#bb00ff,#c600ff,#d100ff,#dc00ff,#e700ff,#f300ff,#ff00ff,#ff00f4,#ff00e9,#ff00df,#ff00d6,#ff00cd,#ff00c5,#ff00be,#ff00b6,#ff00b0,#ff00a9,#ff00a3,#ff009d,#ff0098,#ff0093,#ff008e,#ff0089)"></i><i style="background:linear-gradient(90deg,#0011ff,#0010ff,#000eff,#000dff,#000cff,#000aff,#0009ff,#0008ff,#0006ff,#0005ff,#0004ff,#0003ff,#0002ff,#0001ff,#0101ff,#0400ff,#0800ff,#0c00ff,#1100ff,#1700ff,#1c00ff,#2200ff,#2800ff,#2f00ff,#3600ff,#3d00ff,#4400ff,#4c00ff,#5400ff,#5c00ff,#6400ff,#6c00ff,#7500ff,#7e00ff,#8700ff,#9100ff,#9b00ff,#a500ff,#af00ff,#b900ff,#c400ff,#ce00ff,#d900ff,#e400ff,#f000ff,#fb00ff,#ff00f7,#ff00ec,#ff00e2,#ff00d9,#ff00d0,#ff00c8,#ff00c0,#ff00b9,#ff00b2,#ff00ab,#ff00a5,#ff009f,#ff009a,#ff0095,#ff0090,#ff008b)"></i><i style="background:linear-gradient(90deg,#0011ff,#000fff,#000eff,#000cff,#000bff,#000aff,#0009ff,#0007ff,#0006ff,#0005ff,#0004ff,#0003ff,#0002ff,#0001ff,#0100ff,#0400ff,#0800ff,#0c00ff,#1100ff,#1600ff,#1c00ff,#2100ff,#2800ff,#2e00ff,#3500ff,#3c00ff,#4300ff,#4b00ff,#5200ff,#5a00ff,#6300ff,#6b00ff,#7400ff,#7d00ff,#8600ff,#8f00ff,#9900ff,#a200ff,#ac00ff,#b700ff,#c100ff,#cc00ff,#d700ff,#e200ff,#ed00ff,#f800ff,#ff00fa,#ff00ef,#ff00e5,#ff00db,#ff00d2,#ff00ca,#ff00c2,#ff00bb,#ff00b4,#ff00ad,#ff00a7,#ff00a1,#ff009c,#ff0097,#ff0092,#ff008d)"></i><i style="background:linear-gradient(90deg,#0010ff,#000fff,#000dff,#000cff,#000bff,#0009ff,#0008ff,#0007ff,#0006ff,#0005ff,#0004ff,#0003ff,#0002ff,#0001ff,#0100ff,#0400ff,#0700ff,#0c00ff,#1000ff,#1600ff,#1b00ff,#2100ff,#2700ff,#2d00ff,#3400ff,#3b00ff,#4200ff,#4900ff,#5100ff,#5900ff,#6100ff,#6a00ff,#7200ff,#7b00ff,#8400ff,#8d00ff,#9700ff,#a000ff,#aa00ff,#b400ff,#bf00ff,#c900ff,#d400ff,#df00ff,#ea00ff,#f500ff,#ff00fd,#ff00f2,#ff00e8,#ff00de,#ff00d5,#ff00cc,#ff00c5,#ff00bd,#ff00b6,#ff00af,#ff00a9,#ff00a3,#ff009e,#ff0098,#ff0093,#ff008f)"></i><i style="background:linear-gradient(90deg,#000fff,#000eff,#000dff,#000bff,#000aff,#0009ff,#0008ff,#0007ff,#0005ff,#0004ff,#0003ff,#0002ff,#0001ff,#0001ff,#0100ff,#0400ff,#0700ff,#0b00ff,#1000ff,#1500ff,#1a00ff,#2000ff,#2600ff,#2d00ff,#3300ff,#3a00ff,#4100ff,#4800ff,#5000ff,#5800ff,#6000ff,#6800ff,#7100ff,#7900ff,#8200ff,#8b00ff,#9500ff,#9e00ff,#a800ff,#b200ff,#bc00ff,#c700ff,#d100ff,#dc00ff,#e700ff,#f200ff,#fe00ff,#ff00f5,#ff00ea,#ff00e1,#ff00d8,#ff00cf,#ff00c7,#ff00bf,#ff00b8,#ff00b2,#ff00ab,#ff00a5,#ff00a0,#ff009a,#ff0095,#ff0090)"></i><i style="background:linear-gradient(90deg,#000fff,#000eff,#000cff,#000bff,#000aff,#0009ff,#0007ff,#0006ff,#0005ff,#0004ff,#0003ff,#0002ff,#0001ff,#0001ff,#0100ff,#0300ff,#0700ff,#0b00ff,#1000ff,#1500ff,#1a00ff,#2000ff,#2600ff,#2c00ff,#3200ff,#3900ff,#4000ff,#4700ff,#4f00ff,#5700ff,#5f00ff,#6700ff,#6f00ff,#7800ff,#8100ff,#8a00ff,#9300ff,#9c00ff,#a600ff,#b000ff,#ba00ff,#c400ff,#cf00ff,#da00ff,#e400ff,#f000ff,#fb00ff,#ff00f8,#ff00ed,#ff00e3,#ff00da,#ff00d1,#ff00c9,#ff00c2,#ff00ba,#ff00b4,#ff00ad,#ff00a7,#ff00a1,#ff009c,#ff0097,#ff0092)"></i><i style="background:linear-gradient(90deg,#000fff,#000dff,#000cff,#000bff,#0009ff,#0008ff,#0007ff,#0006ff,#0005ff,#0004ff,#0003ff,#0002ff,#0001ff,#0000ff,#0100ff,#0300ff,#0700ff,#0b00ff,#0f00ff,#1400ff,#1900ff,#1f00ff,#2500ff,#2b00ff,#3100ff,#3800ff,#3f00ff,#4600ff,#4e00ff,#5500ff,#5d00ff,#6500ff,#6e00ff,#7600ff,#7f00ff,#8800ff,#9100ff,#9a00ff,#a400ff,#ae00ff,#b800ff,#c200ff,#cc00ff,#d700ff,#e200ff,#ed00ff,#f800ff,#ff00fb,#ff00f0,#ff00e6,#ff00dd,#ff00d4,#ff00cc,#ff00c4,#ff00bd,#ff00b6,#ff00af,#ff00a9,#ff00a3,#ff009e,#ff0099,#ff0094)"></i><i style="background:linear-gradient(90deg,#000eff,#000dff,#000bff,#000aff,#0009ff,#0008ff,#0007ff,#0006ff,#0004ff,#0003ff,#0003ff,#0002ff,#0001ff,#0000ff,#0000ff,#0300ff,#0600ff,#0a00ff,#0f00ff,#1400ff,#1900ff,#1e00ff,#2400ff,#2a00ff,#3100ff,#3700ff,#3e00ff,#4500ff,#4d00ff,#5400ff,#5c00ff,#6400ff,#6c00ff,#7500ff,#7d00ff,#8600ff,#8f00ff,#9900ff,#a200ff,#ac00ff,#b600ff,#c000ff,#ca00ff,#d400ff,#df00ff,#ea00ff,#f500ff,#ff00fe,#ff00f3,#ff00e9,#ff00df,#ff00d6,#ff00ce,#ff00c6,#ff00bf,#ff00b8,#ff00b1,#ff00ab,#ff00a5,#ff00a0,#ff009a,#ff0095)"></i><i style="background:linear-gradient(90deg,#000eff,#000cff,#000bff,#000aff,#0009ff,#0007ff,#0006ff,#0005ff,#0004ff,#0003ff,#0002ff,#0001ff,#0001ff,#0000ff,#0000ff,#0300ff,#0600ff,#0a00ff,#0e00ff,#1300ff,#1800ff,#1e00ff,#2400ff,#2a00ff,#3000ff,#3600ff,#3d00ff,#4400ff,#4c00ff,#5300ff,#5b00ff,#6300ff,#6b00ff,#7300ff,#7c00ff,#8500ff,#8d00ff,#9700ff,#a000ff,#aa00ff,#b300ff,#bd00ff,#c700ff,#d200ff,#dc00ff,#e700ff,#f200ff,#fd00ff,#ff00f6,#ff00ec,#ff00e2,#ff00d9,#ff00d1,#ff00c9,#ff00c1,#ff00ba,#ff00b3,#ff00ad,#ff00a7,#ff00a2,#ff009c,#ff0097)"></i><i style="background:linear-gradient(90deg,#000dff,#000cff,#000bff,#0009ff,#0008ff,#0007ff,#0006ff,#0005ff,#0004ff,#0003ff,#0002ff,#0001ff,#0001ff,#0000ff,#0000ff,#0300ff,#0600ff,#0a00ff,#0e00ff,#1300ff,#1800ff,#1d00ff,#2300ff,#2900ff,#2f00ff,#3600ff,#3c00ff,#4300ff,#4b00ff,#5200ff,#5a00ff,#6100ff,#6900ff,#7200ff,#7a00ff,#8300ff,#8c00ff,#9500ff,#9e00ff,#a800ff,#b100ff,#bb00ff,#c500ff,#cf00ff,#da00ff,#e400ff,#ef00ff,#fa00ff,#ff00f9,#ff00ee,#ff00e5,#ff00db,#ff00d3,#ff00cb,#ff00c3,#ff00bc,#ff00b6,#ff00af,#ff00a9,#ff00a3,#ff009e,#ff0099)"></i><i style="background:linear-gradient(90deg,#000dff,#000bff,#000aff,#0009ff,#0008ff,#0007ff,#0006ff,#0005ff,#0004ff,#0003ff,#0002ff,#0001ff,#0000ff,#0000ff,#0000ff,#0200ff,#0600ff,#0900ff,#0e00ff,#1200ff,#1700ff,#1d00ff,#2200ff,#2800ff,#2e00ff,#3500ff,#3c00ff,#4200ff,#4a00ff,#5100ff,#5800ff,#6000ff,#6800ff,#7000ff,#7900ff,#8100ff,#8a00ff,#9300ff,#9c00ff,#a500ff,#af00ff,#b900ff,#c300ff,#cd00ff,#d700ff,#e200ff,#ec00ff,#f700ff,#ff00fc,#ff00f1,#ff00e7,#ff00de,#ff00d5,#ff00cd,#ff00c6,#ff00be,#ff00b8,#ff00b1,#ff00ab,#ff00a5,#ff00a0,#ff009b)"></i><i style="background:linear-gradient(90deg,#000cff,#000bff,#000aff,#0009ff,#0007ff,#0006ff,#0005ff,#0004ff,#0003ff,#0002ff,#0002ff,#0001ff,#0000ff,#0000ff,#0000ff,#0200ff,#0500ff,#0900ff,#0d00ff,#1200ff,#1700ff,#1c00ff,#2200ff,#2800ff,#2e00ff,#3400ff,#3b00ff,#4100ff,#4800ff,#5000ff,#5700ff,#5f00ff,#6700ff,#6f00ff,#7700ff,#8000ff,#8800ff,#9100ff,#9a00ff,#a400ff,#ad00ff,#b700ff,#c000ff,#ca00ff,#d500ff,#df00ff,#ea00ff,#f400ff,#ff00ff,#ff00f4,#ff00ea,#ff00e1,#ff00d8,#ff00d0,#ff00c8,#ff00c1,#ff00ba,#ff00b3,#ff00ad,#ff00a7,#ff00a2,#ff009c)"></i><i style="background:linear-gradient(90deg,#000cff,#000bff,#0009ff,#0008ff,#0007ff,#0006ff,#0005ff,#0004ff,#0003ff,#0002ff,#0001ff,#0001ff,#0000ff,#0000ff,#0000ff,#0200ff,#0500ff,#0900ff,#0d00ff,#1200ff,#1600ff,#1c00ff,#2100ff,#2700ff,#2d00ff,#3300ff,#3a00ff,#4100ff,#4700ff,#4f00ff,#5600ff,#5e00ff,#6500ff,#6d00ff,#7600ff,#7e00ff,#8700ff,#8f00ff,#9800ff,#a200ff,#ab00ff,#b400ff,#be00ff,#c800ff,#d200ff,#dd00ff,#e700ff,#f200ff,#fd00ff,#ff00f7,#ff00ed,#ff00e3,#ff00da,#ff00d2,#ff00ca,#ff00c3,#ff00bc,#ff00b5,#ff00af,#ff00a9,#ff00a4,#ff009e)"></i><i style="background:linear-gradient(90deg,#000bff,#000aff,#0009ff,#0008ff,#0007ff,#0006ff,#0005ff,#0004ff,#0003ff,#0002ff,#0001ff,#0000ff,#0000ff,#0000ff,#0000ff,#0200ff,#0500ff,#0900ff,#0d00ff,#1100ff,#1600ff,#1b00ff,#2100ff,#2600ff,#2c00ff,#3200ff,#3900ff,#4000ff,#4600ff,#4e00ff,#5500ff,#5c00ff,#6400ff,#6c00ff,#7400ff,#7c00ff,#8500ff,#8e00ff,#9700ff,#a000ff,#a900ff,#b200ff,#bc00ff,#c600ff,#d000ff,#da00ff,#e400ff,#ef00ff,#fa00ff,#ff00fa,#ff00ef,#ff00e6,#ff00dd,#ff00d4,#ff00cc,#ff00c5,#ff00be,#ff00b7,#ff00b1,#ff00ab,#ff00a5,#ff00a0)"></i><i style="background:linear-gradient(90deg,#000bff,#000aff,#0009ff,#0008ff,#0006ff,#0005ff,#0004ff,#0003ff,#0003ff,#0002ff,#0001ff,#0000ff,#0000ff,#0000ff,#0000ff,#0200ff,#0500ff,#0800ff,#0c00ff,#1100ff,#1600ff,#1b00ff,#2000ff,#2600ff,#2c00ff,#3200ff,#3800ff,#3f00ff,#4600ff,#4d00ff,#5400ff,#5b00ff,#6300ff,#6b00ff,#7300ff,#7b00ff,#8300ff,#8c00ff,#9500ff,#9e00ff,#a700ff,#b000ff,#ba00ff,#c400ff,#cd00ff,#d700ff,#e200ff,#ec00ff,#f700ff,#ff00fc,#ff00f2,#ff00e8,#ff00df,#ff00d7,#ff00cf,#ff00c7,#ff00c0,#ff00b9,#ff00b3,#ff00ad,#ff00a7,#ff00a2)"></i><i style="background:linear-gradient(90deg,#000bff,#0009ff,#0008ff,#0007ff,#0006ff,#0005ff,#0004ff,#0003ff,#0002ff,#0001ff,#0001ff,#0000ff,#0000ff,#0000ff,#0000ff,#0200ff,#0500ff,#0800ff,#0c00ff,#1000ff,#1500ff,#1a00ff,#1f00ff,#2500ff,#2b00ff,#3100ff,#3700ff,#3e00ff,#4500ff,#4c00ff,#5300ff,#5a00ff,#6200ff,#6900ff,#7100ff,#7900ff,#8200ff,#8a00ff,#9300ff,#9c00ff,#a500ff,#ae00ff,#b800ff,#c100ff,#cb00ff,#d500ff,#df00ff,#ea00ff,#f400ff,#ff00ff,#ff00f5,#ff00eb,#ff00e2,#ff00d9,#ff00d1,#ff00c9,#ff00c2,#ff00bb,#ff00b5,#ff00af,#ff00a9,#ff00a4)"></i><i style="background:linear-gradient(90deg,#000aff,#0009ff,#0008ff,#0007ff,#0006ff,#0005ff,#0004ff,#0003ff,#0002ff,#0001ff,#0001ff,#0000ff,#0000ff,#0000ff,#0000ff,#0200ff,#0400ff,#0800ff,#0c00ff,#1000ff,#1500ff,#1a00ff,#1f00ff,#2400ff,#2a00ff,#3000ff,#3600ff,#3d00ff,#4400ff,#4b00ff,#5200ff,#5900ff,#6000ff,#6800ff,#7000ff,#7800ff,#8000ff,#8900ff,#9100ff,#9a00ff,#a300ff,#ac00ff,#b600ff,#bf00ff,#c900ff,#d300ff,#dd00ff,#e700ff,#f100ff,#fc00ff,#ff00f8,#ff00ee,#ff00e4,#ff00dc,#ff00d3,#ff00cc,#ff00c4,#ff00be,#ff00b7,#ff00b1,#ff00ab,#ff00a5)"></i><i style="background:linear-gradient(90deg,#000aff,#0009ff,#0008ff,#0007ff,#0005ff,#0004ff,#0004ff,#0003ff,#0002ff,#0001ff,#0000ff,#0000ff,#0000ff,#0000ff,#0000ff,#0100ff,#0400ff,#0800ff,#0b00ff,#1000ff,#1400ff,#1900ff,#1e00ff,#2400ff,#2a00ff,#3000ff,#3600ff,#3c00ff,#4300ff,#4a00ff,#5100ff,#5800ff,#5f00ff,#6700ff,#6f00ff,#7700ff,#7f00ff,#8700ff,#9000ff,#9800ff,#a100ff,#aa00ff,#b300ff,#bd00ff,#c600ff,#d000ff,#da00ff,#e400ff,#ef00ff,#f900ff,#ff00fa,#ff00f0,#ff00e7,#ff00de,#ff00d6,#ff00ce,#ff00c7,#ff00c0,#ff00b9,#ff00b3,#ff00ad,#ff00a7)"></i><i style="background:linear-gradient(90deg,#0009ff,#0008ff,#0007ff,#0006ff,#0005ff,#0004ff,#0003ff,#0002ff,#0002ff,#0001ff,#0000ff,#0000ff,#0000ff,#0000ff,#0000ff,#0100ff,#0400ff,#0700ff,#0b00ff,#0f00ff,#1400ff,#1900ff,#1e00ff,#2300ff,#2900ff,#2f00ff,#3500ff,#3b00ff,#4200ff,#4900ff,#4f00ff,#5700ff,#5e00ff,#6600ff,#6d00ff,#7500ff,#7d00ff,#8500ff,#8e00ff,#9700ff,#9f00ff,#a800ff,#b100ff,#bb00ff,#c400ff,#ce00ff,#d800ff,#e200ff,#ec00ff,#f600ff,#ff00fd,#ff00f3,#ff00e9,#ff00e1,#ff00d8,#ff00d0,#ff00c9,#ff00c2,#ff00bb,#ff00b5,#ff00af,#ff00a9)"></i><i style="background:linear-gradient(90deg,#0009ff,#0008ff,#0007ff,#0006ff,#0005ff,#0004ff,#0003ff,#0002ff,#0001ff,#0001ff,#0000ff,#0000ff,#0000ff,#0000ff,#0000ff,#0100ff,#0400ff,#0700ff,#0b00ff,#0f00ff,#1300ff,#1800ff,#1d00ff,#2300ff,#2800ff,#2e00ff,#3400ff,#3a00ff,#4100ff,#4800ff,#4e00ff,#5600ff,#5d00ff,#6400ff,#6c00ff,#7400ff,#7c00ff,#8400ff,#8c00ff,#9500ff,#9d00ff,#a600ff,#af00ff,#b900ff,#c200ff,#cc00ff,#d500ff,#df00ff,#e900ff,#f400ff,#fe00ff,#ff00f6,#ff00ec,#ff00e3,#ff00db,#ff00d3,#ff00cb,#ff00c4,#ff00bd,#ff00b7,#ff00b1,#ff00ab)"></i><i style="background:linear-gradient(90deg,#0009ff,#0008ff,#0007ff,#0006ff,#0005ff,#0004ff,#0003ff,#0002ff,#0001ff,#0001ff,#0000ff,#0000ff,#0000ff,#0000ff,#0000ff,#0100ff,#0400ff,#0700ff,#0b00ff,#0f00ff,#1300ff,#1800ff,#1d00ff,#2200ff,#2800ff,#2d00ff,#3300ff,#3a00ff,#4000ff,#4700ff,#4d00ff,#5400ff,#5c00ff,#6300ff,#6b00ff,#7200ff,#7a00ff,#8200ff,#8b00ff,#9300ff,#9c00ff,#a400ff,#ad00ff,#b700ff,#c000ff,#c900ff,#d300ff,#dd00ff,#e700ff,#f100ff,#fb00ff,#ff00f8,#ff00ef,#ff00e6,#ff00dd,#ff00d5,#ff00cd,#ff00c6,#ff00bf,#ff00b9,#ff00b3,#ff00ad)"></i><i style="background:linear-gradient(90deg,#0008ff,#0007ff,#0006ff,#0005ff,#0004ff,#0003ff,#0003ff,#0002ff,#0001ff,#0000ff,#0000ff,#0000ff,#0000ff,#0000ff,#0000ff,#0100ff,#0300ff,#0700ff,#0a00ff,#0e00ff,#1300ff,#1700ff,#1c00ff,#2200ff,#2700ff,#2d00ff,#3300ff,#3900ff,#3f00ff,#4600ff,#4c00ff,#5300ff,#5b00ff,#6200ff,#6900ff,#7100ff,#7900ff,#8100ff,#8900ff,#9100ff,#9a00ff,#a300ff,#ac00ff,#b500ff,#be00ff,#c700ff,#d100ff,#da00ff,#e400ff,#ee00ff,#f900ff,#ff00fb,#ff00f1,#ff00e8,#ff00df,#ff00d7,#ff00cf,#ff00c8,#ff00c1,#ff00bb,#ff00b5,#ff00af)"></i><i style="background:linear-gradient(90deg,#0008ff,#0007ff,#0006ff,#0005ff,#0004ff,#0003ff,#0002ff,#0002ff,#0001ff,#0000ff,#0000ff,#0000ff,#0000ff,#0000ff,#0000ff,#0100ff,#0300ff,#0600ff,#0a00ff,#0e00ff,#1200ff,#1700ff,#1c00ff,#2100ff,#2600ff,#2c00ff,#3200ff,#3800ff,#3e00ff,#4500ff,#4b00ff,#5200ff,#5900ff,#6100ff,#6800ff,#7000ff,#7700ff,#7f00ff,#8700ff,#9000ff,#9800ff,#a100ff,#aa00ff,#b300ff,#bc00ff,#c500ff,#ce00ff,#d800ff,#e200ff,#ec00ff,#f600ff,#ff00fe,#ff00f4,#ff00eb,#ff00e2,#ff00d9,#ff00d2,#ff00ca,#ff00c3,#ff00bd,#ff00b6,#ff00b1)"></i><i style="background:linear-gradient(90deg,#0008ff,#0007ff,#0006ff,#0005ff,#0004ff,#0003ff,#0002ff,#0001ff,#0001ff,#0000ff,#0000ff,#0000ff,#0000ff,#0000ff,#0000ff,#0100ff,#0300ff,#0600ff,#0a00ff,#0e00ff,#1200ff,#1600ff,#1b00ff,#2000ff,#2600ff,#2b00ff,#3100ff,#3700ff,#3d00ff,#4400ff,#4a00ff,#5100ff,#5800ff,#5f00ff,#6700ff,#6e00ff,#7600ff,#7e00ff,#8600ff,#8e00ff,#9600ff,#9f00ff,#a800ff,#b100ff,#ba00ff,#c300ff,#cc00ff,#d600ff,#df00ff,#e900ff,#f300ff,#fd00ff,#ff00f6,#ff00ed,#ff00e4,#ff00dc,#ff00d4,#ff00cc,#ff00c5,#ff00bf,#ff00b8,#ff00b2)"></i><i style="background:linear-gradient(90deg,#0007ff,#0006ff,#0005ff,#0004ff,#0004ff,#0003ff,#0002ff,#0001ff,#0001ff,#0000ff,#0000ff,#0000ff,#0000ff,#0000ff,#0000ff,#0100ff,#0300ff,#0600ff,#0900ff,#0d00ff,#1200ff,#1600ff,#1b00ff,#2000ff,#2500ff,#2b00ff,#3100ff,#3600ff,#3d00ff,#4300ff,#4a00ff,#5000ff,#5700ff,#5e00ff,#6600ff,#6d00ff,#7500ff,#7c00ff,#8400ff,#8c00ff,#9500ff,#9d00ff,#a600ff,#af00ff,#b800ff,#c100ff,#ca00ff,#d300ff,#dd00ff,#e700ff,#f100ff,#fb00ff,#ff00f9,#ff00f0,#ff00e7,#ff00de,#ff00d6,#ff00cf,#ff00c8,#ff00c1,#ff00ba,#ff00b4)"></i><i style="background:linear-gradient(90deg,#0007ff,#0006ff,#0005ff,#0004ff,#0003ff,#0002ff,#0002ff,#0001ff,#0000ff,#0000ff,#0000ff,#0000ff,#0000ff,#0000ff,#0000ff,#0000ff,#0300ff,#0600ff,#0900ff,#0d00ff,#1100ff,#1600ff,#1a00ff,#1f00ff,#2500ff,#2a00ff,#3000ff,#3600ff,#3c00ff,#4200ff,#4900ff,#4f00ff,#5600ff,#5d00ff,#6400ff,#6c00ff,#7300ff,#7b00ff,#8300ff,#8b00ff,#9300ff,#9b00ff,#a400ff,#ad00ff,#b600ff,#bf00ff,#c800ff,#d100ff,#db00ff,#e400ff,#ee00ff,#f800ff,#ff00fc,#ff00f2,#ff00e9,#ff00e0,#ff00d8,#ff00d1,#ff00ca,#ff00c3,#ff00bc,#ff00b6)"></i><i style="background:linear-gradient(90deg,#0007ff,#0006ff,#0005ff,#0004ff,#0003ff,#0002ff,#0001ff,#0001ff,#0000ff,#0000ff,#0000ff,#0000ff,#0000ff,#0000ff,#0000ff,#0000ff,#0300ff,#0500ff,#0900ff,#0d00ff,#1100ff,#1500ff,#1a00ff,#1f00ff,#2400ff,#2a00ff,#2f00ff,#3500ff,#3b00ff,#4100ff,#4800ff,#4e00ff,#5500ff,#5c00ff,#6300ff,#6a00ff,#7200ff,#7a00ff,#8100ff,#8900ff,#9100ff,#9a00ff,#a200ff,#ab00ff,#b400ff,#bd00ff,#c600ff,#cf00ff,#d800ff,#e200ff,#ec00ff,#f500ff,#ff00fe,#ff00f5,#ff00ec,#ff00e3,#ff00db,#ff00d3,#ff00cc,#ff00c5,#ff00be,#ff00b8)"></i><i style="background:linear-gradient(90deg,#0006ff,#0005ff,#0005ff,#0004ff,#0003ff,#0002ff,#0001ff,#0001ff,#0000ff,#0000ff,#0000ff,#0000ff,#0000ff,#0000ff,#0000ff,#0000ff,#0200ff,#0500ff,#0900ff,#0c00ff,#1000ff,#1500ff,#1900ff,#1e00ff,#2400ff,#2900ff,#2e00ff,#3400ff,#3a00ff,#4000ff,#4700ff,#4d00ff,#5400ff,#5b00ff,#6200ff,#6900ff,#7100ff,#7800ff,#8000ff,#8800ff,#9000ff,#9800ff,#a000ff,#a900ff,#b200ff,#bb00ff,#c400ff,#cd00ff,#d600ff,#df00ff,#e900ff,#f300ff,#fd00ff,#ff00f7,#ff00ee,#ff00e5,#ff00dd,#ff00d5,#ff00ce,#ff00c7,#ff00c0,#ff00ba)"></i><i style="background:linear-gradient(90deg,#0006ff,#0005ff,#0004ff,#0003ff,#0003ff,#0002ff,#0001ff,#0001ff,#0000ff,#0000ff,#0000ff,#0000ff,#0000ff,#0000ff,#0000ff,#0000ff,#0200ff,#0500ff,#0800ff,#0c00ff,#1000ff,#1400ff,#1900ff,#1e00ff,#2300ff,#2800ff,#2e00ff,#3400ff,#3900ff,#4000ff,#4600ff,#4c00ff,#5300ff,#5a00ff,#6100ff,#6800ff,#6f00ff,#7700ff,#7e00ff,#8600ff,#8e00ff,#9600ff,#9f00ff,#a700ff,#b000ff,#b900ff,#c100ff,#cb00ff,#d400ff,#dd00ff,#e700ff,#f000ff,#fa00ff,#ff00fa,#ff00f0,#ff00e8,#ff00df,#ff00d7,#ff00d0,#ff00c9,#ff00c2,#ff00bc)"></i></div></div>
<svg class="a" style="left:0;top:0" width="1280" height="632" viewBox="0 0 1280 632">
<defs><linearGradient id="dim" gradientUnits="userSpaceOnUse" x1="0" y1="44" x2="0" y2="416"><stop offset="0" stop-color="#000" stop-opacity="0.40"/><stop offset="0.42" stop-color="#000" stop-opacity="0.39"/><stop offset="1" stop-color="#000" stop-opacity="0.29"/></linearGradient><clipPath id="pc"><rect x="791.0" y="43.5" width="480.0" height="372.3"/></clipPath></defs>
<g clip-path="url(#pc)">
<path d="M971.5,477.9 L971.1,478.1 L970.5,478.4 L969.5,478.4 L967.5,477.7 L962.2,473.4 L952.2,464.2 L935.9,449.3 L924.8,439.0 L911.2,425.4 L894.8,406.9 L873.1,377.8 L847.5,338.1 L819.6,288.6 L792.9,235.1 L771.9,183.7 L757.7,140.4 L750.4,108.2 L748.6,85.8 L751.4,70.4 L758.1,60.6 L767.5,55.7 L778.8,53.8 L791.1,53.4 L803.5,53.5 L816.5,54.2 L830.5,55.3 L845.7,56.9 L881.0,60.9 L924.2,66.3 L976.3,73.0 L1036.7,80.6 L1099.5,88.7 L1156.8,95.9 L1201.4,101.7 L1233.0,105.7 L1256.2,108.6 L1271.4,110.6 L1280.5,111.7 L1285.1,112.3 L1288.4,112.7 L1290.7,113.0 L1291.4,113.1Z M1180.5,98.9 L833.4,60.1 L900.5,372.7Z" fill="url(#dim)" fill-rule="evenodd"/>
<path d="M786,45 H1284 V421 H786Z M971.5,477.9 L971.1,478.1 L970.5,478.4 L969.5,478.4 L967.5,477.7 L962.2,473.4 L952.2,464.2 L935.9,449.3 L924.8,439.0 L911.2,425.4 L894.8,406.9 L873.1,377.8 L847.5,338.1 L819.6,288.6 L792.9,235.1 L771.9,183.7 L757.7,140.4 L750.4,108.2 L748.6,85.8 L751.4,70.4 L758.1,60.6 L767.5,55.7 L778.8,53.8 L791.1,53.4 L803.5,53.5 L816.5,54.2 L830.5,55.3 L845.7,56.9 L881.0,60.9 L924.2,66.3 L976.3,73.0 L1036.7,80.6 L1099.5,88.7 L1156.8,95.9 L1201.4,101.7 L1233.0,105.7 L1256.2,108.6 L1271.4,110.6 L1280.5,111.7 L1285.1,112.3 L1288.4,112.7 L1290.7,113.0 L1291.4,113.1Z" fill="#242424" fill-rule="evenodd"/>
</g>
<path d="M1271.0,41.5 H1274 V417.8 H1271.0Z" fill="#333"/>
<path d="M788.0,415.8 H1274 V419.8 H788.0Z" fill="#333"/>
<rect x="791.0" y="43.5" width="480.0" height="372.3" fill="none" stroke="#9a9a9a" stroke-width="1.3"/>
<line x1="787.2" y1="43.5" x2="791.0" y2="43.5" stroke="#bbb" stroke-width="1.1"/>
<text x="786.8" y="48.1" font-size="11.4" fill="#d6d6d6" text-anchor="end">0,6</text>
<line x1="787.2" y1="80.7" x2="791.0" y2="80.7" stroke="#bbb" stroke-width="1.1"/>
<text x="786.8" y="85.3" font-size="11.4" fill="#d6d6d6" text-anchor="end">0,55</text>
<line x1="787.2" y1="118.0" x2="791.0" y2="118.0" stroke="#bbb" stroke-width="1.1"/>
<text x="786.8" y="122.6" font-size="11.4" fill="#d6d6d6" text-anchor="end">0,5</text>
<line x1="787.2" y1="155.2" x2="791.0" y2="155.2" stroke="#bbb" stroke-width="1.1"/>
<text x="786.8" y="159.8" font-size="11.4" fill="#d6d6d6" text-anchor="end">0,45</text>
<line x1="787.2" y1="192.4" x2="791.0" y2="192.4" stroke="#bbb" stroke-width="1.1"/>
<text x="786.8" y="197.0" font-size="11.4" fill="#d6d6d6" text-anchor="end">0,4</text>
<line x1="787.2" y1="229.7" x2="791.0" y2="229.7" stroke="#bbb" stroke-width="1.1"/>
<text x="786.8" y="234.2" font-size="11.4" fill="#d6d6d6" text-anchor="end">0,35</text>
<line x1="787.2" y1="266.9" x2="791.0" y2="266.9" stroke="#bbb" stroke-width="1.1"/>
<text x="786.8" y="271.5" font-size="11.4" fill="#d6d6d6" text-anchor="end">0,3</text>
<line x1="787.2" y1="304.1" x2="791.0" y2="304.1" stroke="#bbb" stroke-width="1.1"/>
<text x="786.8" y="308.7" font-size="11.4" fill="#d6d6d6" text-anchor="end">0,25</text>
<line x1="787.2" y1="341.3" x2="791.0" y2="341.3" stroke="#bbb" stroke-width="1.1"/>
<text x="786.8" y="345.9" font-size="11.4" fill="#d6d6d6" text-anchor="end">0,2</text>
<line x1="787.2" y1="378.6" x2="791.0" y2="378.6" stroke="#bbb" stroke-width="1.1"/>
<text x="786.8" y="383.2" font-size="11.4" fill="#d6d6d6" text-anchor="end">0,15</text>
<line x1="787.2" y1="415.8" x2="791.0" y2="415.8" stroke="#bbb" stroke-width="1.1"/>
<text x="786.8" y="420.4" font-size="11.4" fill="#d6d6d6" text-anchor="end">0,1</text>
<line x1="791.0" y1="415.8" x2="791.0" y2="420.3" stroke="#ccc" stroke-width="1.2"/>
<text x="791.0" y="432.6" font-size="11.4" fill="#d6d6d6" text-anchor="middle">0,05</text>
<line x1="834.6" y1="415.8" x2="834.6" y2="420.3" stroke="#ccc" stroke-width="1.2"/>
<text x="834.6" y="432.6" font-size="11.4" fill="#d6d6d6" text-anchor="middle">0,1</text>
<line x1="878.3" y1="415.8" x2="878.3" y2="420.3" stroke="#ccc" stroke-width="1.2"/>
<text x="878.3" y="432.6" font-size="11.4" fill="#d6d6d6" text-anchor="middle">0,15</text>
<line x1="921.9" y1="415.8" x2="921.9" y2="420.3" stroke="#ccc" stroke-width="1.2"/>
<text x="921.9" y="432.6" font-size="11.4" fill="#d6d6d6" text-anchor="middle">0,2</text>
<line x1="965.5" y1="415.8" x2="965.5" y2="420.3" stroke="#ccc" stroke-width="1.2"/>
<text x="965.5" y="432.6" font-size="11.4" fill="#d6d6d6" text-anchor="middle">0,25</text>
<line x1="1009.2" y1="415.8" x2="1009.2" y2="420.3" stroke="#ccc" stroke-width="1.2"/>
<text x="1009.2" y="432.6" font-size="11.4" fill="#d6d6d6" text-anchor="middle">0,3</text>
<line x1="1052.8" y1="415.8" x2="1052.8" y2="420.3" stroke="#ccc" stroke-width="1.2"/>
<text x="1052.8" y="432.6" font-size="11.4" fill="#d6d6d6" text-anchor="middle">0,35</text>
<line x1="1096.5" y1="415.8" x2="1096.5" y2="420.3" stroke="#ccc" stroke-width="1.2"/>
<text x="1096.5" y="432.6" font-size="11.4" fill="#d6d6d6" text-anchor="middle">0,4</text>
<line x1="1140.1" y1="415.8" x2="1140.1" y2="420.3" stroke="#ccc" stroke-width="1.2"/>
<text x="1140.1" y="432.6" font-size="11.4" fill="#d6d6d6" text-anchor="middle">0,45</text>
<line x1="1183.7" y1="415.8" x2="1183.7" y2="420.3" stroke="#ccc" stroke-width="1.2"/>
<text x="1183.7" y="432.6" font-size="11.4" fill="#d6d6d6" text-anchor="middle">0,5</text>
<line x1="1227.4" y1="415.8" x2="1227.4" y2="420.3" stroke="#ccc" stroke-width="1.2"/>
<text x="1227.4" y="432.6" font-size="11.4" fill="#d6d6d6" text-anchor="middle">0,55</text>
<text x="1018" y="39.6" font-size="12" fill="#ddd" text-anchor="middle" textLength="65" lengthAdjust="spacingAndGlyphs">CIE 1976 u'v'</text>
<rect x="828.1" y="53.6" width="10.4" height="10.4" fill="none" stroke="#fff" stroke-opacity="0.85" stroke-width="1.3"/>
<rect x="862.3" y="70.0" width="10.4" height="10.4" fill="none" stroke="#fff" stroke-opacity="0.85" stroke-width="1.3"/>
<rect x="868.6" y="75.1" width="10.4" height="10.4" fill="none" stroke="#fff" stroke-opacity="0.85" stroke-width="1.3"/>
<rect x="895.8" y="79.8" width="10.4" height="10.4" fill="none" stroke="#fff" stroke-opacity="0.85" stroke-width="1.3"/>
<rect x="909.7" y="69.1" width="10.4" height="10.4" fill="none" stroke="#fff" stroke-opacity="0.85" stroke-width="1.3"/>
<rect x="909.7" y="82.7" width="10.4" height="10.4" fill="none" stroke="#fff" stroke-opacity="0.85" stroke-width="1.3"/>
<rect x="921.1" y="63.7" width="10.4" height="10.4" fill="none" stroke="#fff" stroke-opacity="0.85" stroke-width="1.3"/>
<rect x="923.7" y="75.1" width="10.4" height="10.4" fill="none" stroke="#fff" stroke-opacity="0.85" stroke-width="1.3"/>
<rect x="935.7" y="67.5" width="10.4" height="10.4" fill="none" stroke="#fff" stroke-opacity="0.85" stroke-width="1.3"/>
<rect x="961.6" y="71.3" width="10.4" height="10.4" fill="none" stroke="#fff" stroke-opacity="0.85" stroke-width="1.3"/>
<rect x="952.5" y="78.2" width="10.4" height="10.4" fill="none" stroke="#fff" stroke-opacity="0.85" stroke-width="1.3"/>
<rect x="849.6" y="95.3" width="10.4" height="10.4" fill="none" stroke="#fff" stroke-opacity="0.85" stroke-width="1.3"/>
<rect x="876.8" y="93.4" width="10.4" height="10.4" fill="none" stroke="#fff" stroke-opacity="0.85" stroke-width="1.3"/>
<rect x="866.1" y="104.2" width="10.4" height="10.4" fill="none" stroke="#fff" stroke-opacity="0.85" stroke-width="1.3"/>
<rect x="876.8" y="108.0" width="10.4" height="10.4" fill="none" stroke="#fff" stroke-opacity="0.85" stroke-width="1.3"/>
<rect x="880.6" y="115.0" width="10.4" height="10.4" fill="none" stroke="#fff" stroke-opacity="0.85" stroke-width="1.3"/>
<rect x="844.5" y="124.3" width="10.4" height="10.4" fill="none" stroke="#fff" stroke-opacity="0.85" stroke-width="1.3"/>
<rect x="844.5" y="131.3" width="10.4" height="10.4" fill="none" stroke="#fff" stroke-opacity="0.85" stroke-width="1.3"/>
<rect x="921.8" y="98.5" width="10.4" height="10.4" fill="none" stroke="#fff" stroke-opacity="0.85" stroke-width="1.3"/>
<rect x="908.5" y="113.1" width="10.4" height="10.4" fill="none" stroke="#fff" stroke-opacity="0.85" stroke-width="1.3"/>
<rect x="902.1" y="118.8" width="10.4" height="10.4" fill="none" stroke="#fff" stroke-opacity="0.85" stroke-width="1.3"/>
<rect x="932.3" y="105.3" width="10.4" height="10.4" fill="none" stroke="#fff" stroke-opacity="0.85" stroke-width="1.3"/>
<rect x="945.0" y="107.3" width="10.4" height="10.4" fill="none" stroke="#fff" stroke-opacity="0.85" stroke-width="1.3"/>
<rect x="945.0" y="120.8" width="10.4" height="10.4" fill="none" stroke="#fff" stroke-opacity="0.85" stroke-width="1.3"/>
<rect x="928.8" y="126.3" width="10.4" height="10.4" fill="none" stroke="#fff" stroke-opacity="0.85" stroke-width="1.3"/>
<rect x="960.8" y="97.8" width="10.4" height="10.4" fill="none" stroke="#fff" stroke-opacity="0.85" stroke-width="1.3"/>
<rect x="958.0" y="107.3" width="10.4" height="10.4" fill="none" stroke="#fff" stroke-opacity="0.85" stroke-width="1.3"/>
<rect x="976.2" y="87.5" width="10.4" height="10.4" fill="none" stroke="#fff" stroke-opacity="0.85" stroke-width="1.3"/>
<rect x="973.1" y="94.7" width="10.4" height="10.4" fill="none" stroke="#fff" stroke-opacity="0.85" stroke-width="1.3"/>
<rect x="979.4" y="101.0" width="10.4" height="10.4" fill="none" stroke="#fff" stroke-opacity="0.85" stroke-width="1.3"/>
<rect x="980.2" y="106.5" width="10.4" height="10.4" fill="none" stroke="#fff" stroke-opacity="0.85" stroke-width="1.3"/>
<rect x="983.3" y="95.5" width="10.4" height="10.4" fill="none" stroke="#fff" stroke-opacity="0.85" stroke-width="1.3"/>
<rect x="992.0" y="98.6" width="10.4" height="10.4" fill="none" stroke="#fff" stroke-opacity="0.85" stroke-width="1.3"/>
<rect x="998.4" y="95.5" width="10.4" height="10.4" fill="none" stroke="#fff" stroke-opacity="0.85" stroke-width="1.3"/>
<rect x="1004.7" y="88.7" width="10.4" height="10.4" fill="none" stroke="#fff" stroke-opacity="0.85" stroke-width="1.3"/>
<rect x="1000.7" y="111.7" width="10.4" height="10.4" fill="none" stroke="#fff" stroke-opacity="0.85" stroke-width="1.3"/>
<rect x="988.7" y="123.5" width="10.4" height="10.4" fill="none" stroke="#fff" stroke-opacity="0.85" stroke-width="1.3"/>
<rect x="1024.4" y="81.4" width="10.4" height="10.4" fill="none" stroke="#fff" stroke-opacity="0.85" stroke-width="1.3"/>
<rect x="968.3" y="108.1" width="10.4" height="10.4" fill="none" stroke="#fff" stroke-opacity="0.85" stroke-width="1.3"/>
<rect x="983.3" y="75.7" width="10.4" height="10.4" fill="none" stroke="#fff" stroke-opacity="0.85" stroke-width="1.3"/>
<rect x="976.6" y="84.6" width="10.4" height="10.4" fill="none" stroke="#fff" stroke-opacity="0.85" stroke-width="1.3"/>
<rect x="1053.5" y="82.3" width="10.4" height="10.4" fill="none" stroke="#fff" stroke-opacity="0.85" stroke-width="1.3"/>
<rect x="1100.4" y="98.5" width="10.4" height="10.4" fill="none" stroke="#fff" stroke-opacity="0.85" stroke-width="1.3"/>
<rect x="1057.3" y="111.8" width="10.4" height="10.4" fill="none" stroke="#fff" stroke-opacity="0.85" stroke-width="1.3"/>
<rect x="1043.4" y="120.8" width="10.4" height="10.4" fill="none" stroke="#fff" stroke-opacity="0.85" stroke-width="1.3"/>
<rect x="1089.1" y="125.6" width="10.4" height="10.4" fill="none" stroke="#fff" stroke-opacity="0.85" stroke-width="1.3"/>
<rect x="1128.6" y="98.3" width="10.4" height="10.4" fill="none" stroke="#fff" stroke-opacity="0.85" stroke-width="1.3"/>
<rect x="1129.7" y="106.6" width="10.4" height="10.4" fill="none" stroke="#fff" stroke-opacity="0.85" stroke-width="1.3"/>
<rect x="1141.1" y="103.8" width="10.4" height="10.4" fill="none" stroke="#fff" stroke-opacity="0.85" stroke-width="1.3"/>
<rect x="1175.7" y="92.9" width="10.4" height="10.4" fill="none" stroke="#fff" stroke-opacity="0.85" stroke-width="1.3"/>
<rect x="862.3" y="130.6" width="10.4" height="10.4" fill="none" stroke="#fff" stroke-opacity="0.85" stroke-width="1.3"/>
<rect x="847.7" y="146.4" width="10.4" height="10.4" fill="none" stroke="#fff" stroke-opacity="0.85" stroke-width="1.3"/>
<rect x="867.7" y="147.1" width="10.4" height="10.4" fill="none" stroke="#fff" stroke-opacity="0.85" stroke-width="1.3"/>
<rect x="854.0" y="161.6" width="10.4" height="10.4" fill="none" stroke="#fff" stroke-opacity="0.85" stroke-width="1.3"/>
<rect x="854.0" y="175.3" width="10.4" height="10.4" fill="none" stroke="#fff" stroke-opacity="0.85" stroke-width="1.3"/>
<rect x="866.4" y="189.6" width="10.4" height="10.4" fill="none" stroke="#fff" stroke-opacity="0.85" stroke-width="1.3"/>
<rect x="880.4" y="159.7" width="10.4" height="10.4" fill="none" stroke="#fff" stroke-opacity="0.85" stroke-width="1.3"/>
<rect x="897.1" y="155.9" width="10.4" height="10.4" fill="none" stroke="#fff" stroke-opacity="0.85" stroke-width="1.3"/>
<rect x="895.2" y="159.7" width="10.4" height="10.4" fill="none" stroke="#fff" stroke-opacity="0.85" stroke-width="1.3"/>
<rect x="921.8" y="159.1" width="10.4" height="10.4" fill="none" stroke="#fff" stroke-opacity="0.85" stroke-width="1.3"/>
<rect x="953.0" y="146.7" width="10.4" height="10.4" fill="none" stroke="#fff" stroke-opacity="0.85" stroke-width="1.3"/>
<rect x="949.0" y="167.1" width="10.4" height="10.4" fill="none" stroke="#fff" stroke-opacity="0.85" stroke-width="1.3"/>
<rect x="927.3" y="187.0" width="10.4" height="10.4" fill="none" stroke="#fff" stroke-opacity="0.85" stroke-width="1.3"/>
<rect x="967.6" y="192.2" width="10.4" height="10.4" fill="none" stroke="#fff" stroke-opacity="0.85" stroke-width="1.3"/>
<rect x="927.5" y="126.2" width="10.4" height="10.4" fill="none" stroke="#fff" stroke-opacity="0.85" stroke-width="1.3"/>
<rect x="903.4" y="122.8" width="10.4" height="10.4" fill="none" stroke="#fff" stroke-opacity="0.85" stroke-width="1.3"/>
<rect x="946.4" y="119.8" width="10.4" height="10.4" fill="none" stroke="#fff" stroke-opacity="0.85" stroke-width="1.3"/>
<rect x="1005.4" y="150.6" width="10.4" height="10.4" fill="none" stroke="#fff" stroke-opacity="0.85" stroke-width="1.3"/>
<rect x="1023.2" y="154.5" width="10.4" height="10.4" fill="none" stroke="#fff" stroke-opacity="0.85" stroke-width="1.3"/>
<rect x="1052.5" y="154.5" width="10.4" height="10.4" fill="none" stroke="#fff" stroke-opacity="0.85" stroke-width="1.3"/>
<rect x="873.1" y="212.0" width="10.4" height="10.4" fill="none" stroke="#fff" stroke-opacity="0.85" stroke-width="1.3"/>
<rect x="895.2" y="221.5" width="10.4" height="10.4" fill="none" stroke="#fff" stroke-opacity="0.85" stroke-width="1.3"/>
<rect x="993.8" y="216.3" width="10.4" height="10.4" fill="none" stroke="#fff" stroke-opacity="0.85" stroke-width="1.3"/>
<rect x="1025.1" y="238.9" width="10.4" height="10.4" fill="none" stroke="#fff" stroke-opacity="0.85" stroke-width="1.3"/>
<rect x="887.6" y="281.5" width="10.4" height="10.4" fill="none" stroke="#fff" stroke-opacity="0.85" stroke-width="1.3"/>
<rect x="895.1" y="366.3" width="10.4" height="10.4" fill="none" stroke="#fff" stroke-opacity="0.85" stroke-width="1.3"/>
<rect x="914.6" y="135.9" width="10" height="10" fill="none" stroke="#000" stroke-width="1.6"/>
<circle cx="919.6" cy="140.9" r="3.3" fill="#2a2a2a" stroke="#111" stroke-width="1.2"/>
<circle cx="835.8" cy="59.4" r="3.05" fill="#14f014" stroke="#222" stroke-width="1.05"/>
<circle cx="867.1" cy="72.3" r="3.05" fill="#6e8c3c" stroke="#222" stroke-width="1.05"/>
<circle cx="872.5" cy="76.9" r="3.05" fill="#6e8c46" stroke="#222" stroke-width="1.05"/>
<circle cx="902.3" cy="83.4" r="3.05" fill="#8c9646" stroke="#222" stroke-width="1.05"/>
<circle cx="915.6" cy="72.7" r="3.05" fill="#a0a03c" stroke="#222" stroke-width="1.05"/>
<circle cx="918.1" cy="76.5" r="3.05" fill="#828c32" stroke="#222" stroke-width="1.05"/>
<circle cx="914.9" cy="82.8" r="3.05" fill="#50551e" stroke="#222" stroke-width="1.05"/>
<circle cx="926.3" cy="70.2" r="3.05" fill="#faf014" stroke="#222" stroke-width="1.05"/>
<circle cx="931.8" cy="74.2" r="3.05" fill="#aaa03c" stroke="#222" stroke-width="1.05"/>
<circle cx="928.5" cy="79.4" r="3.05" fill="#8c823c" stroke="#222" stroke-width="1.05"/>
<circle cx="940.9" cy="72.3" r="3.05" fill="#beaa3c" stroke="#222" stroke-width="1.05"/>
<circle cx="963.9" cy="75.6" r="3.05" fill="#e6b432" stroke="#222" stroke-width="1.05"/>
<circle cx="958.0" cy="76.1" r="3.05" fill="#dcb43c" stroke="#222" stroke-width="1.05"/>
<circle cx="957.7" cy="81.5" r="3.05" fill="#b49646" stroke="#222" stroke-width="1.05"/>
<circle cx="987.0" cy="79.9" r="3.05" fill="#e6aa32" stroke="#222" stroke-width="1.05"/>
<circle cx="981.5" cy="88.8" r="3.05" fill="#be8246" stroke="#222" stroke-width="1.05"/>
<circle cx="852.3" cy="99.3" r="3.05" fill="#467850" stroke="#222" stroke-width="1.05"/>
<circle cx="882.0" cy="98.3" r="3.05" fill="#829664" stroke="#222" stroke-width="1.05"/>
<circle cx="871.5" cy="103.7" r="3.05" fill="#283c28" stroke="#222" stroke-width="1.05"/>
<circle cx="871.0" cy="109.6" r="3.05" fill="#648c64" stroke="#222" stroke-width="1.05"/>
<circle cx="885.6" cy="120.8" r="3.05" fill="#8caa82" stroke="#222" stroke-width="1.05"/>
<circle cx="850.0" cy="129.5" r="3.05" fill="#3c7864" stroke="#222" stroke-width="1.05"/>
<circle cx="928.2" cy="105.6" r="3.05" fill="#bebe78" stroke="#222" stroke-width="1.05"/>
<circle cx="914.9" cy="118.9" r="3.05" fill="#bec896" stroke="#222" stroke-width="1.05"/>
<circle cx="908.2" cy="125.0" r="3.05" fill="#aabe96" stroke="#222" stroke-width="1.05"/>
<circle cx="943.6" cy="101.4" r="3.05" fill="#322d19" stroke="#222" stroke-width="1.05"/>
<circle cx="948.4" cy="116.1" r="3.05" fill="#f0c8a0" stroke="#222" stroke-width="1.05"/>
<circle cx="948.6" cy="124.0" r="3.05" fill="#f0c8aa" stroke="#222" stroke-width="1.05"/>
<circle cx="945.8" cy="128.7" r="3.05" fill="#f0c8b4" stroke="#222" stroke-width="1.05"/>
<circle cx="931.4" cy="137.1" r="3.05" fill="#000000" stroke="#222" stroke-width="1.05"/>
<circle cx="932.0" cy="132.0" r="3.05" fill="#f0dcd2" stroke="#222" stroke-width="1.05"/>
<circle cx="923.2" cy="133.3" r="3.05" fill="#dcd2be" stroke="#222" stroke-width="1.05"/>
<circle cx="910.5" cy="132.7" r="3.05" fill="#c8d2be" stroke="#222" stroke-width="1.05"/>
<circle cx="964.8" cy="103.8" r="3.05" fill="#c88c5a" stroke="#222" stroke-width="1.05"/>
<circle cx="959.7" cy="112.1" r="3.05" fill="#c8966e" stroke="#222" stroke-width="1.05"/>
<circle cx="964.8" cy="111.7" r="3.05" fill="#be8c64" stroke="#222" stroke-width="1.05"/>
<circle cx="971.5" cy="110.2" r="3.05" fill="#be7850" stroke="#222" stroke-width="1.05"/>
<circle cx="974.7" cy="112.9" r="3.05" fill="#d29678" stroke="#222" stroke-width="1.05"/>
<circle cx="979.4" cy="106.6" r="3.05" fill="#c88c64" stroke="#222" stroke-width="1.05"/>
<circle cx="985.0" cy="107.0" r="3.05" fill="#be825a" stroke="#222" stroke-width="1.05"/>
<circle cx="982.2" cy="111.7" r="3.05" fill="#e6a082" stroke="#222" stroke-width="1.05"/>
<circle cx="983.6" cy="98.3" r="3.05" fill="#825a32" stroke="#222" stroke-width="1.05"/>
<circle cx="995.0" cy="95.1" r="3.05" fill="#6e4b28" stroke="#222" stroke-width="1.05"/>
<circle cx="1002.4" cy="99.9" r="3.05" fill="#d28c64" stroke="#222" stroke-width="1.05"/>
<circle cx="1009.5" cy="98.3" r="3.05" fill="#6e4628" stroke="#222" stroke-width="1.05"/>
<circle cx="1017.2" cy="90.4" r="3.05" fill="#50321e" stroke="#222" stroke-width="1.05"/>
<circle cx="1018.3" cy="92.8" r="3.05" fill="#462d19" stroke="#222" stroke-width="1.05"/>
<circle cx="1004.4" cy="118.1" r="3.05" fill="#dc8c78" stroke="#222" stroke-width="1.05"/>
<circle cx="993.1" cy="129.5" r="3.05" fill="#d28282" stroke="#222" stroke-width="1.05"/>
<circle cx="1029.6" cy="85.0" r="3.05" fill="#d28c3c" stroke="#222" stroke-width="1.05"/>
<circle cx="1057.7" cy="86.6" r="3.05" fill="#e68c32" stroke="#222" stroke-width="1.05"/>
<circle cx="1110.9" cy="102.2" r="3.05" fill="#d26e5a" stroke="#222" stroke-width="1.05"/>
<circle cx="1068.9" cy="116.4" r="3.05" fill="#c86459" stroke="#222" stroke-width="1.05"/>
<circle cx="1087.6" cy="120.8" r="3.05" fill="#5a1e1e" stroke="#222" stroke-width="1.05"/>
<circle cx="1107.1" cy="131.6" r="3.05" fill="#be3250" stroke="#222" stroke-width="1.05"/>
<circle cx="1150.3" cy="101.3" r="3.05" fill="#be3c3c" stroke="#222" stroke-width="1.05"/>
<circle cx="1152.2" cy="108.9" r="3.05" fill="#be323c" stroke="#222" stroke-width="1.05"/>
<circle cx="1166.3" cy="105.4" r="3.05" fill="#b43232" stroke="#222" stroke-width="1.05"/>
<circle cx="1179.6" cy="98.1" r="3.05" fill="#fa1414" stroke="#222" stroke-width="1.05"/>
<circle cx="867.1" cy="136.7" r="3.05" fill="#649682" stroke="#222" stroke-width="1.05"/>
<circle cx="852.9" cy="151.6" r="3.05" fill="#14e6f0" stroke="#222" stroke-width="1.05"/>
<circle cx="871.6" cy="152.0" r="3.05" fill="#6e9696" stroke="#222" stroke-width="1.05"/>
<circle cx="857.0" cy="168.1" r="3.05" fill="#3c828c" stroke="#222" stroke-width="1.05"/>
<circle cx="860.3" cy="188.3" r="3.05" fill="#1e4650" stroke="#222" stroke-width="1.05"/>
<circle cx="869.1" cy="196.2" r="3.05" fill="#5082a0" stroke="#222" stroke-width="1.05"/>
<circle cx="884.3" cy="164.9" r="3.05" fill="#6e8296" stroke="#222" stroke-width="1.05"/>
<circle cx="901.0" cy="161.8" r="3.05" fill="#465064" stroke="#222" stroke-width="1.05"/>
<circle cx="900.1" cy="164.9" r="3.05" fill="#828caa" stroke="#222" stroke-width="1.05"/>
<circle cx="927.0" cy="164.6" r="3.05" fill="#8c78a0" stroke="#222" stroke-width="1.05"/>
<circle cx="958.0" cy="152.3" r="3.05" fill="#aa6e82" stroke="#222" stroke-width="1.05"/>
<circle cx="963.0" cy="181.6" r="3.05" fill="#462846" stroke="#222" stroke-width="1.05"/>
<circle cx="932.1" cy="195.5" r="3.05" fill="#826496" stroke="#222" stroke-width="1.05"/>
<circle cx="1031.5" cy="161.9" r="3.05" fill="#b45082" stroke="#222" stroke-width="1.05"/>
<circle cx="1042.3" cy="159.4" r="3.05" fill="#461e32" stroke="#222" stroke-width="1.05"/>
<circle cx="1073.3" cy="162.9" r="3.05" fill="#8c2850" stroke="#222" stroke-width="1.05"/>
<circle cx="897.0" cy="233.0" r="3.05" fill="#505082" stroke="#222" stroke-width="1.05"/>
<circle cx="874.0" cy="236.2" r="3.05" fill="#1e3250" stroke="#222" stroke-width="1.05"/>
<circle cx="984.3" cy="212.9" r="3.05" fill="#461e46" stroke="#222" stroke-width="1.05"/>
<circle cx="1007.7" cy="233.0" r="3.05" fill="#501e50" stroke="#222" stroke-width="1.05"/>
<circle cx="1027.5" cy="244.1" r="3.05" fill="#fa1ef0" stroke="#222" stroke-width="1.05"/>
<circle cx="888.0" cy="312.7" r="3.05" fill="#1e2864" stroke="#222" stroke-width="1.05"/>
<circle cx="896.0" cy="371.9" r="3.05" fill="#0a0afa" stroke="#222" stroke-width="1.05"/>
</svg>
<div class="a" style="left:1132px;top:267px;width:136.9px;height:105.2px;overflow:hidden"><div id="inf" style="width:144px"><i style="background:linear-gradient(90deg,#c2ff00,#c9ff00,#d0ff00,#d7ff00,#deff00,#e6ff00,#edff00,#f3ff00,#faff00,#fffd00,#fff600,#fff000,#ffea00,#ffe400,#ffdf00,#ffd900,#ffd400,#ffd000,#ffcb00)"></i><i style="background:linear-gradient(90deg,#c2ff00,#c9ff00,#d0ff00,#d7ff00,#dfff00,#e6ff00,#edff00,#f3ff00,#faff00,#fffd00,#fff600,#fff000,#ffea00,#ffe400,#ffdf00,#ffd900,#ffd400,#ffd000,#ffcb00)"></i><i style="background:linear-gradient(90deg,#c2ff00,#c9ff00,#d0ff00,#d7ff00,#dfff00,#e6ff00,#edff00,#f4ff00,#faff00,#fffd00,#fff600,#fff000,#ffea00,#ffe400,#ffdf00,#ffd900,#ffd400,#ffd000,#ffcb00)"></i><i style="background:linear-gradient(90deg,#c2ff00,#c9ff00,#d0ff00,#d7ff00,#dfff00,#e6ff00,#edff00,#f4ff00,#faff00,#fffd00,#fff600,#fff000,#ffea00,#ffe400,#ffdf00,#ffd900,#ffd400,#ffcf00,#ffcb00)"></i><i style="background:linear-gradient(90deg,#c2ff00,#c9ff00,#d0ff00,#d7ff00,#dfff00,#e6ff00,#edff00,#f4ff00,#fbff00,#fffd00,#fff600,#fff000,#ffea00,#ffe400,#ffde00,#ffd900,#ffd400,#ffcf00,#ffcb00)"></i><i style="background:linear-gradient(90deg,#c1ff00,#c9ff00,#d0ff00,#d7ff00,#dfff00,#e6ff00,#edff00,#f4ff00,#fbff00,#fffd00,#fff600,#fff000,#ffea00,#ffe400,#ffde00,#ffd900,#ffd400,#ffcf00,#ffcb00)"></i><i style="background:linear-gradient(90deg,#c1ff00,#c9ff00,#d0ff00,#d7ff00,#dfff00,#e6ff00,#edff00,#f4ff00,#fbff00,#fffd00,#fff600,#fff000,#ffea00,#ffe400,#ffde00,#ffd900,#ffd400,#ffcf00,#ffcb00)"></i><i style="background:linear-gradient(90deg,#c1ff00,#c9ff00,#d0ff00,#d7ff00,#dfff00,#e6ff00,#edff00,#f4ff00,#fbff00,#fffc00,#fff600,#fff000,#ffea00,#ffe400,#ffde00,#ffd900,#ffd400,#ffcf00,#ffcb00)"></i><i style="background:linear-gradient(90deg,#c1ff00,#c9ff00,#d0ff00,#d7ff00,#dfff00,#e6ff00,#edff00,#f4ff00,#fbff00,#fffc00,#fff600,#fff000,#ffea00,#ffe400,#ffde00,#ffd900,#ffd400,#ffcf00,#ffcb00)"></i><i style="background:linear-gradient(90deg,#c1ff01,#c9ff00,#d0ff00,#d7ff00,#dfff00,#e6ff00,#edff00,#f4ff00,#fbff00,#fffc00,#fff600,#fff000,#ffea00,#ffe400,#ffde00,#ffd900,#ffd400,#ffcf00,#ffcb00)"></i><i style="background:linear-gradient(90deg,#c1ff01,#c9ff00,#d0ff00,#d7ff00,#dfff00,#e6ff00,#edff00,#f4ff00,#fbff00,#fffc00,#fff600,#ffef00,#ffe900,#ffe400,#ffde00,#ffd900,#ffd400,#ffcf00,#ffcb00)"></i><i style="background:linear-gradient(90deg,#c1ff01,#c9ff00,#d0ff00,#d7ff00,#dfff00,#e6ff00,#edff00,#f4ff00,#fbff00,#fffc00,#fff600,#ffef00,#ffe900,#ffe400,#ffde00,#ffd900,#ffd400,#ffcf00,#ffcb00)"></i><i style="background:linear-gradient(90deg,#c1ff01,#c8ff01,#d0ff00,#d7ff00,#dfff00,#e6ff00,#edff00,#f4ff00,#fbff00,#fffc00,#fff600,#ffef00,#ffe900,#ffe400,#ffde00,#ffd900,#ffd400,#ffcf00,#ffcb00)"></i><i style="background:linear-gradient(90deg,#c1ff01,#c8ff01,#d0ff00,#d7ff00,#dfff00,#e6ff00,#edff00,#f4ff00,#fbff00,#fffc00,#fff600,#ffef00,#ffe900,#ffe400,#ffde00,#ffd900,#ffd400,#ffcf00,#ffca00)"></i><i style="background:linear-gradient(90deg,#c1ff01,#c8ff01,#d0ff01,#d7ff00,#dfff00,#e6ff00,#edff00,#f4ff00,#fbff00,#fffc00,#fff600,#ffef00,#ffe900,#ffe400,#ffde00,#ffd900,#ffd400,#ffcf00,#ffca00)"></i><i style="background:linear-gradient(90deg,#c1ff01,#c8ff01,#d0ff01,#d7ff00,#dfff00,#e6ff00,#edff00,#f4ff00,#fbff00,#fffc00,#fff600,#ffef00,#ffe900,#ffe400,#ffde00,#ffd900,#ffd400,#ffcf00,#ffca00)"></i><i style="background:linear-gradient(90deg,#c1ff01,#c8ff01,#d0ff01,#d7ff00,#deff00,#e6ff00,#edff00,#f4ff00,#fbff00,#fffc00,#fff600,#ffef00,#ffe900,#ffe400,#ffde00,#ffd900,#ffd400,#ffcf00,#ffca00)"></i><i style="background:linear-gradient(90deg,#c0ff02,#c8ff01,#d0ff01,#d7ff01,#deff00,#e6ff00,#edff00,#f4ff00,#fbff00,#fffc00,#fff600,#ffef00,#ffe900,#ffe400,#ffde00,#ffd900,#ffd400,#ffcf00,#ffca00)"></i><i style="background:linear-gradient(90deg,#c0ff02,#c8ff01,#d0ff01,#d7ff01,#deff00,#e6ff00,#edff00,#f4ff00,#fbff00,#fffc00,#fff600,#ffef00,#ffe900,#ffe300,#ffde00,#ffd900,#ffd400,#ffcf00,#ffca00)"></i><i style="background:linear-gradient(90deg,#c0ff02,#c8ff01,#d0ff01,#d7ff01,#deff00,#e6ff00,#edff00,#f4ff00,#fbff00,#fffc00,#fff600,#ffef00,#ffe900,#ffe300,#ffde00,#ffd900,#ffd400,#ffcf00,#ffca00)"></i><i style="background:linear-gradient(90deg,#c0ff02,#c8ff02,#d0ff01,#d7ff01,#deff01,#e6ff00,#edff00,#f4ff00,#fbff00,#fffc00,#fff600,#ffef00,#ffe900,#ffe300,#ffde00,#ffd900,#ffd400,#ffcf00,#ffca00)"></i><i style="background:linear-gradient(90deg,#c0ff02,#c8ff02,#cfff01,#d7ff01,#deff01,#e6ff00,#edff00,#f4ff00,#fbff00,#fffc00,#fff500,#ffef00,#ffe900,#ffe300,#ffde00,#ffd900,#ffd400,#ffcf00,#ffca00)"></i><i style="background:linear-gradient(90deg,#c0ff02,#c8ff02,#cfff02,#d7ff01,#deff01,#e6ff01,#edff00,#f4ff00,#fbff00,#fffc00,#fff500,#ffef00,#ffe900,#ffe300,#ffde00,#ffd900,#ffd400,#ffcf00,#ffca00)"></i><i style="background:linear-gradient(90deg,#c0ff02,#c8ff02,#cfff02,#d7ff01,#deff01,#e6ff01,#edff00,#f4ff00,#fbff00,#fffc00,#fff500,#ffef00,#ffe900,#ffe300,#ffde00,#ffd900,#ffd400,#ffcf00,#ffca00)"></i><i style="background:linear-gradient(90deg,#c0ff03,#c8ff02,#cfff02,#d7ff01,#deff01,#e6ff01,#edff00,#f4ff00,#fbff00,#fffc00,#fff500,#ffef00,#ffe900,#ffe300,#ffde00,#ffd900,#ffd400,#ffcf00,#ffca00)"></i><i style="background:linear-gradient(90deg,#c0ff03,#c8ff02,#cfff02,#d7ff02,#deff01,#e6ff01,#edff01,#f4ff00,#fbff00,#fffc00,#fff500,#ffef00,#ffe900,#ffe300,#ffde00,#ffd900,#ffd400,#ffcf00,#ffca00)"></i><i style="background:linear-gradient(90deg,#c0ff03,#c8ff03,#cfff02,#d7ff02,#deff01,#e5ff01,#edff01,#f4ff00,#fbff00,#fffc00,#fff500,#ffef00,#ffe900,#ffe300,#ffde00,#ffd900,#ffd300,#ffcf00,#ffca00)"></i><i style="background:linear-gradient(90deg,#c0ff03,#c7ff03,#cfff02,#d7ff02,#deff02,#e5ff01,#edff01,#f4ff01,#fbff00,#fffc00,#fff500,#ffef00,#ffe900,#ffe300,#ffde00,#ffd800,#ffd300,#ffcf00,#ffca00)"></i><i style="background:linear-gradient(90deg,#c0ff03,#c7ff03,#cfff02,#d7ff02,#deff02,#e5ff01,#edff01,#f4ff01,#fbff00,#fffc00,#fff500,#ffef00,#ffe900,#ffe300,#ffde00,#ffd800,#ffd300,#ffcf00,#ffca00)"></i><i style="background:linear-gradient(90deg,#bfff03,#c7ff03,#cfff03,#d7ff02,#deff02,#e5ff01,#edff01,#f4ff01,#fbff00,#fffc00,#fff500,#ffef00,#ffe900,#ffe300,#ffde00,#ffd800,#ffd300,#ffcf00,#ffca00)"></i><i style="background:linear-gradient(90deg,#bfff04,#c7ff03,#cfff03,#d7ff02,#deff02,#e5ff02,#edff01,#f4ff01,#fbff01,#fffc00,#fff500,#ffef00,#ffe900,#ffe300,#ffde00,#ffd800,#ffd300,#ffce00,#ffca00)"></i><i style="background:linear-gradient(90deg,#bfff04,#c7ff03,#cfff03,#d7ff03,#deff02,#e5ff02,#edff01,#f4ff01,#fbff01,#fffc00,#fff500,#ffef00,#ffe900,#ffe300,#ffde00,#ffd800,#ffd300,#ffce00,#ffca00)"></i><i style="background:linear-gradient(90deg,#bfff04,#c7ff04,#cfff03,#d7ff03,#deff02,#e5ff02,#edff02,#f4ff01,#fbff01,#fffc00,#fff500,#ffef00,#ffe900,#ffe300,#ffde00,#ffd800,#ffd300,#ffce00,#ffca00)"></i><i style="background:linear-gradient(90deg,#bfff04,#c7ff04,#cfff03,#d6ff03,#deff03,#e5ff02,#edff02,#f4ff01,#fbff01,#fffc01,#fff500,#ffef00,#ffe900,#ffe300,#ffde00,#ffd800,#ffd300,#ffce00,#ffca00)"></i><i style="background:linear-gradient(90deg,#bfff04,#c7ff04,#cfff04,#d6ff03,#deff03,#e5ff02,#edff02,#f4ff01,#fbff01,#fffc01,#fff500,#ffef00,#ffe900,#ffe300,#ffdd00,#ffd800,#ffd300,#ffce00,#ffca00)"></i><i style="background:linear-gradient(90deg,#bfff05,#c7ff04,#cfff04,#d6ff03,#deff03,#e5ff02,#edff02,#f4ff02,#fbff01,#fffc01,#fff500,#ffef00,#ffe900,#ffe300,#ffdd00,#ffd800,#ffd300,#ffce00,#ffca00)"></i><i style="background:linear-gradient(90deg,#bfff05,#c7ff04,#cfff04,#d6ff03,#deff03,#e5ff03,#edff02,#f4ff02,#fbff01,#fffc01,#fff501,#ffef00,#ffe900,#ffe300,#ffdd00,#ffd800,#ffd300,#ffce00,#ffca00)"></i><i style="background:linear-gradient(90deg,#bfff05,#c7ff05,#cfff04,#d6ff04,#deff03,#e5ff03,#edff02,#f4ff02,#fbff02,#fffc01,#fff501,#ffef00,#ffe900,#ffe300,#ffdd00,#ffd800,#ffd300,#ffce00,#ffca00)"></i><i style="background:linear-gradient(90deg,#bfff05,#c7ff05,#cfff04,#d6ff04,#deff03,#e5ff03,#edff03,#f4ff02,#fbff02,#fffc01,#fff501,#ffef00,#ffe900,#ffe300,#ffdd00,#ffd800,#ffd300,#ffce00,#ffca00)"></i><i style="background:linear-gradient(90deg,#bfff05,#c7ff05,#cfff04,#d6ff04,#deff04,#e5ff03,#edff03,#f4ff02,#fbff02,#fffc01,#fff501,#ffee01,#ffe800,#ffe300,#ffdd00,#ffd800,#ffd300,#ffce00,#ffc900)"></i><i style="background:linear-gradient(90deg,#bfff06,#c7ff05,#ceff05,#d6ff04,#deff04,#e5ff03,#edff03,#f4ff02,#fbff02,#fffc02,#fff501,#ffee01,#ffe800,#ffe300,#ffdd00,#ffd800,#ffd300,#ffce00,#ffc900)"></i><i style="background:linear-gradient(90deg,#bfff06,#c7ff05,#ceff05,#d6ff04,#deff04,#e5ff04,#edff03,#f4ff03,#fbff02,#fffc02,#fff501,#ffee01,#ffe800,#ffe300,#ffdd00,#ffd800,#ffd300,#ffce00,#ffc900)"></i><i style="background:linear-gradient(90deg,#beff06,#c6ff05,#ceff05,#d6ff05,#deff04,#e5ff04,#edff03,#f4ff03,#fbff02,#fffc02,#fff501,#ffee01,#ffe801,#ffe300,#ffdd00,#ffd800,#ffd300,#ffce00,#ffc900)"></i><i style="background:linear-gradient(90deg,#beff06,#c6ff06,#ceff05,#d6ff05,#deff04,#e5ff04,#edff03,#f4ff03,#fbff03,#fffc02,#fff502,#ffee01,#ffe801,#ffe200,#ffdd00,#ffd800,#ffd300,#ffce00,#ffc900)"></i><i style="background:linear-gradient(90deg,#beff06,#c6ff06,#ceff05,#d6ff05,#deff05,#e5ff04,#edff04,#f4ff03,#fbff03,#fffb02,#fff502,#ffee01,#ffe801,#ffe200,#ffdd00,#ffd800,#ffd300,#ffce00,#ffc900)"></i><i style="background:linear-gradient(90deg,#beff07,#c6ff06,#ceff06,#d6ff05,#deff05,#e5ff04,#edff04,#f4ff03,#fbff03,#fffb02,#fff502,#ffee01,#ffe801,#ffe201,#ffdd00,#ffd800,#ffd300,#ffce00,#ffc900)"></i><i style="background:linear-gradient(90deg,#beff07,#c6ff06,#ceff06,#d6ff05,#deff05,#e5ff04,#edff04,#f4ff04,#fbff03,#fffb03,#fff502,#ffee01,#ffe801,#ffe201,#ffdd00,#ffd800,#ffd300,#ffce00,#ffc900)"></i><i style="background:linear-gradient(90deg,#beff07,#c6ff07,#ceff06,#d6ff06,#deff05,#e5ff05,#edff04,#f4ff04,#fbff03,#fffb03,#fff502,#ffee02,#ffe801,#ffe201,#ffdd00,#ffd800,#ffd300,#ffce00,#ffc900)"></i><i style="background:linear-gradient(90deg,#beff07,#c6ff07,#ceff06,#d6ff06,#deff05,#e5ff05,#edff04,#f4ff04,#fbff03,#fffb03,#fff502,#ffee02,#ffe801,#ffe201,#ffdd01,#ffd700,#ffd300,#ffce00,#ffc900)"></i><i style="background:linear-gradient(90deg,#beff07,#c6ff07,#ceff06,#d6ff06,#deff06,#e5ff05,#edff05,#f4ff04,#fbff04,#fffb03,#fff402,#ffee02,#ffe801,#ffe201,#ffdd01,#ffd700,#ffd200,#ffce00,#ffc900)"></i><i style="background:linear-gradient(90deg,#beff08,#c6ff07,#ceff07,#d6ff06,#deff06,#e5ff05,#edff05,#f4ff04,#fbff04,#fffb03,#fff403,#ffee02,#ffe802,#ffe201,#ffdd01,#ffd700,#ffd200,#ffce00,#ffc900)"></i><i style="background:linear-gradient(90deg,#beff08,#c6ff07,#ceff07,#d6ff06,#deff06,#e5ff06,#edff05,#f4ff05,#fbff04,#fffb03,#fff403,#ffee02,#ffe802,#ffe201,#ffdc01,#ffd701,#ffd200,#ffce00,#ffc900)"></i><i style="background:linear-gradient(90deg,#beff08,#c6ff08,#ceff07,#d6ff07,#ddff06,#e5ff06,#edff05,#f4ff05,#fbff04,#fffb04,#fff403,#ffee02,#ffe802,#ffe201,#ffdc01,#ffd701,#ffd200,#ffcd00,#ffc900)"></i></div></div>
<svg class="a" style="left:0;top:0" width="1280" height="632" viewBox="0 0 1280 632">
<defs><clipPath id="ic"><rect x="1132.2" y="267.1" width="136.7" height="105.1"/></clipPath></defs>
<g clip-path="url(#ic)">
<path d="M1127.2,262.1 H1273.9 V377.2 H1127.2Z M1740.1,685.9 L1004.3,185.5 L1146.4,4215.4Z" fill="#000" fill-opacity="0.38" fill-rule="evenodd"/>
<path d="M1127.2,262.1 H1273.9 V377.2 H1127.2Z M1296.9,5571.9 L1296.2,5575.0 L1294.9,5578.2 L1292.7,5578.3 L1288.4,5569.1 L1277.2,5514.0 L1256.0,5395.1 L1221.6,5203.7 L1198.0,5070.9 L1169.1,4894.9 L1134.4,4656.5 L1088.4,4281.7 L1034.0,3769.2 L975.1,3131.2 L918.3,2441.4 L873.9,1779.1 L843.9,1220.7 L828.3,805.7 L824.5,516.8 L830.4,318.3 L844.6,192.3 L864.6,128.0 L888.5,104.2 L914.5,98.3 L940.9,100.6 L968.4,109.3 L998.1,123.7 L1030.4,143.3 L1105.1,195.9 L1196.7,265.3 L1307.2,350.9 L1435.2,450.1 L1568.3,553.6 L1689.8,647.4 L1784.3,721.0 L1851.4,772.9 L1900.5,811.1 L1932.8,835.9 L1952.0,850.8 L1961.8,858.5 L1968.7,863.8 L1973.6,867.7 L1975.1,868.9Z" fill="#242424" fill-rule="evenodd"/>
</g>
<rect x="1132.2" y="267.1" width="136.7" height="105.1" fill="none" stroke="#8c8c8c" stroke-width="1.5"/>
<rect x="1195.6" y="313.8" width="9.8" height="9.8" fill="none" stroke="#fff" stroke-width="1.4"/>
<circle cx="1196.2" cy="322.8" r="3" fill="#f4f400" stroke="#222" stroke-width="1"/>
</svg>
<div class="a" style="left:1067px;top:375.2px;width:204px;height:40px;background:#333"></div>
<div class="a" style="left:11.6px;top:453px;width:1266.4px;height:179px;background:#000"></div>
<div class="a" style="left:24.70px;top:459.6px;width:44.7px;height:129.4px;box-sizing:border-box;border:1px solid rgba(232,232,232,.82);background:linear-gradient(180deg,#fdfdfd 0 49.5%,#ffffff 49.5% 100%)"></div>
<div class="t" style="left:14.70px;top:592.5px;width:64.7px;text-align:center;font-size:9.5px;font-weight:bold;-webkit-text-stroke:0;color:#f0f0f0">White</div>
<div class="a" style="left:76.88px;top:459.6px;width:44.7px;height:129.4px;box-sizing:border-box;border:1px solid rgba(232,232,232,.82);background:linear-gradient(180deg,#dededf 0 49.5%,#dddddd 49.5% 100%)"></div>
<div class="t" style="left:66.88px;top:592.5px;width:64.7px;text-align:center;font-size:9.5px;font-weight:bold;-webkit-text-stroke:0;color:#f0f0f0">6J</div>
<div class="a" style="left:129.06px;top:459.6px;width:44.7px;height:129.4px;box-sizing:border-box;border:1px solid rgba(232,232,232,.82);background:linear-gradient(180deg,#c7c7c7 0 49.5%,#c6c6c6 49.5% 100%)"></div>
<div class="t" style="left:119.06px;top:592.5px;width:64.7px;text-align:center;font-size:9.5px;font-weight:bold;-webkit-text-stroke:0;color:#f0f0f0">5F</div>
<div class="a" style="left:181.24px;top:459.6px;width:44.7px;height:129.4px;box-sizing:border-box;border:1px solid rgba(232,232,232,.82);background:linear-gradient(180deg,#bdbdbd 0 49.5%,#bbbbbb 49.5% 100%)"></div>
<div class="t" style="left:171.24px;top:592.5px;width:64.7px;text-align:center;font-size:9.5px;font-weight:bold;-webkit-text-stroke:0;color:#f0f0f0">6I</div>
<div class="a" style="left:233.42px;top:459.6px;width:44.7px;height:129.4px;box-sizing:border-box;border:1px solid rgba(232,232,232,.82);background:linear-gradient(180deg,#b0b0b0 0 49.5%,#aeaeae 49.5% 100%)"></div>
<div class="t" style="left:223.42px;top:592.5px;width:64.7px;text-align:center;font-size:9.5px;font-weight:bold;-webkit-text-stroke:0;color:#f0f0f0">6K</div>
<div class="a" style="left:285.60px;top:459.6px;width:44.7px;height:129.4px;box-sizing:border-box;border:1px solid rgba(232,232,232,.82);background:linear-gradient(180deg,#a4a4a4 0 49.5%,#a2a2a2 49.5% 100%)"></div>
<div class="t" style="left:275.60px;top:592.5px;width:64.7px;text-align:center;font-size:9.5px;font-weight:bold;-webkit-text-stroke:0;color:#f0f0f0">5G</div>
<div class="a" style="left:337.78px;top:459.6px;width:44.7px;height:129.4px;box-sizing:border-box;border:1px solid rgba(232,232,232,.82);background:linear-gradient(180deg,#969696 0 49.5%,#949494 49.5% 100%)"></div>
<div class="t" style="left:327.78px;top:592.5px;width:64.7px;text-align:center;font-size:9.5px;font-weight:bold;-webkit-text-stroke:0;color:#f0f0f0">6H</div>
<div class="a" style="left:389.96px;top:459.6px;width:44.7px;height:129.4px;box-sizing:border-box;border:1px solid rgba(232,232,232,.82);background:linear-gradient(180deg,#797979 0 49.5%,#787878 49.5% 100%)"></div>
<div class="t" style="left:379.96px;top:592.5px;width:64.7px;text-align:center;font-size:9.5px;font-weight:bold;-webkit-text-stroke:0;color:#f0f0f0">5H</div>
<div class="a" style="left:442.14px;top:459.6px;width:44.7px;height:129.4px;box-sizing:border-box;border:1px solid rgba(232,232,232,.82);background:linear-gradient(180deg,#717171 0 49.5%,#707070 49.5% 100%)"></div>
<div class="t" style="left:432.14px;top:592.5px;width:64.7px;text-align:center;font-size:9.5px;font-weight:bold;-webkit-text-stroke:0;color:#f0f0f0">7K</div>
<div class="a" style="left:494.32px;top:459.6px;width:44.7px;height:129.4px;box-sizing:border-box;border:1px solid rgba(232,232,232,.82);background:linear-gradient(180deg,#636363 0 49.5%,#616161 49.5% 100%)"></div>
<div class="t" style="left:484.32px;top:592.5px;width:64.7px;text-align:center;font-size:9.5px;font-weight:bold;-webkit-text-stroke:0;color:#f0f0f0">6G</div>
<div class="a" style="left:546.50px;top:459.6px;width:44.7px;height:129.4px;box-sizing:border-box;border:1px solid rgba(232,232,232,.82);background:linear-gradient(180deg,#585858 0 49.5%,#575757 49.5% 100%)"></div>
<div class="t" style="left:536.50px;top:592.5px;width:64.7px;text-align:center;font-size:9.5px;font-weight:bold;-webkit-text-stroke:0;color:#f0f0f0">5I</div>
<div class="a" style="left:598.68px;top:459.6px;width:44.7px;height:129.4px;box-sizing:border-box;border:1px solid rgba(232,232,232,.82);background:linear-gradient(180deg,#4a4c4b 0 49.5%,#494b4a 49.5% 100%)"></div>
<div class="t" style="left:588.68px;top:592.5px;width:64.7px;text-align:center;font-size:9.5px;font-weight:bold;-webkit-text-stroke:0;color:#f0f0f0">6F</div>
<div class="a" style="left:650.86px;top:459.6px;width:44.7px;height:129.4px;box-sizing:border-box;border:1px solid rgba(232,232,232,.82);background:linear-gradient(180deg,#333333 0 49.5%,#393939 49.5% 100%)"></div>
<div class="t" style="left:640.86px;top:592.5px;width:64.7px;text-align:center;font-size:9.5px;font-weight:bold;-webkit-text-stroke:0;color:#f0f0f0">8K</div>
<div class="a" style="left:703.04px;top:459.6px;width:44.7px;height:129.4px;box-sizing:border-box;border:1px solid rgba(232,232,232,.82);background:linear-gradient(180deg,#242424 0 49.5%,#2c2c2c 49.5% 100%)"></div>
<div class="t" style="left:693.04px;top:592.5px;width:64.7px;text-align:center;font-size:9.5px;font-weight:bold;-webkit-text-stroke:0;color:#f0f0f0">5J</div>
<div class="a" style="left:755.22px;top:459.6px;width:44.7px;height:129.4px;box-sizing:border-box;border:1px solid rgba(232,232,232,.82);background:linear-gradient(180deg,#000000 0 49.5%,#000000 49.5% 100%)"></div>
<div class="t" style="left:745.22px;top:592.5px;width:64.7px;text-align:center;font-size:9.5px;font-weight:bold;-webkit-text-stroke:0;color:#f0f0f0">Black</div>
<div class="a" style="left:807.40px;top:459.6px;width:44.7px;height:129.4px;box-sizing:border-box;border:1px solid rgba(232,232,232,.82);background:linear-gradient(180deg,#960f50 0 49.5%,#911f51 49.5% 100%)"></div>
<div class="t" style="left:797.40px;top:592.5px;width:64.7px;text-align:center;font-size:9.5px;font-weight:bold;-webkit-text-stroke:0;color:#f0f0f0">2B</div>
<div class="a" style="left:859.58px;top:459.6px;width:44.7px;height:129.4px;box-sizing:border-box;border:1px solid rgba(232,232,232,.82);background:linear-gradient(180deg,#472845 0 49.5%,#4b2f47 49.5% 100%)"></div>
<div class="t" style="left:849.58px;top:592.5px;width:64.7px;text-align:center;font-size:9.5px;font-weight:bold;-webkit-text-stroke:0;color:#f0f0f0">2C</div>
<div class="a" style="left:911.76px;top:459.6px;width:44.7px;height:129.4px;box-sizing:border-box;border:1px solid rgba(232,232,232,.82);background:linear-gradient(180deg,#dad2c5 0 49.5%,#dbd3c6 49.5% 100%)"></div>
<div class="t" style="left:901.76px;top:592.5px;width:64.7px;text-align:center;font-size:9.5px;font-weight:bold;-webkit-text-stroke:0;color:#f0f0f0">2D</div>
<div class="a" style="left:963.94px;top:459.6px;width:44.7px;height:129.4px;box-sizing:border-box;border:1px solid rgba(232,232,232,.82);background:linear-gradient(180deg,#77391d 0 49.5%,#733f26 49.5% 100%)"></div>
<div class="t" style="left:953.94px;top:592.5px;width:64.7px;text-align:center;font-size:9.5px;font-weight:bold;-webkit-text-stroke:0;color:#f0f0f0">2E</div>
<div class="a" style="left:1016.12px;top:459.6px;width:44.7px;height:129.4px;box-sizing:border-box;border:1px solid rgba(232,232,232,.82);background:linear-gradient(180deg,#ce8b6b 0 49.5%,#cb8966 49.5% 100%)"></div>
<div class="t" style="left:1006.12px;top:592.5px;width:64.7px;text-align:center;font-size:9.5px;font-weight:bold;-webkit-text-stroke:0;color:#f0f0f0">2F</div>
<div class="a" style="left:1068.30px;top:459.6px;width:44.7px;height:129.4px;box-sizing:border-box;border:1px solid rgba(232,232,232,.82);background:linear-gradient(180deg,#597285 0 49.5%,#5b7387 49.5% 100%)"></div>
<div class="t" style="left:1058.30px;top:592.5px;width:64.7px;text-align:center;font-size:9.5px;font-weight:bold;-webkit-text-stroke:0;color:#f0f0f0">2G</div>
<div class="a" style="left:1120.48px;top:459.6px;width:44.7px;height:129.4px;box-sizing:border-box;border:1px solid rgba(232,232,232,.82);background:linear-gradient(180deg,#546018 0 49.5%,#556022 49.5% 100%)"></div>
<div class="t" style="left:1110.48px;top:592.5px;width:64.7px;text-align:center;font-size:9.5px;font-weight:bold;-webkit-text-stroke:0;color:#f0f0f0">2H</div>
<div class="a" style="left:1172.66px;top:459.6px;width:44.7px;height:129.4px;box-sizing:border-box;border:1px solid rgba(232,232,232,.82);background:linear-gradient(180deg,#86789a 0 49.5%,#86789a 49.5% 100%)"></div>
<div class="t" style="left:1162.66px;top:592.5px;width:64.7px;text-align:center;font-size:9.5px;font-weight:bold;-webkit-text-stroke:0;color:#f0f0f0">2I</div>
<div class="a" style="left:1224.84px;top:459.6px;width:44.7px;height:129.4px;box-sizing:border-box;border:1px solid rgba(232,232,232,.82);background:linear-gradient(180deg,#6bb890 0 49.5%,#6dba92 49.5% 100%)"></div>
<div class="t" style="left:1214.84px;top:592.5px;width:64.7px;text-align:center;font-size:9.5px;font-weight:bold;-webkit-text-stroke:0;color:#f0f0f0">2J</div>
<div class="a" style="left:1277.02px;top:459.6px;width:3px;height:129.4px;background:#8a7a6a;border-left:1px solid #ccc;box-sizing:border-box"></div>
<div class="t" style="left:12.6px;top:508px;font-size:9.5px;font-weight:bold;-webkit-text-stroke:0;color:#f0f0f0;transform:rotate(-90deg);transform-origin:0 0;width:40px;text-align:center">Actual</div>
<div class="t" style="left:12.6px;top:582px;font-size:9.5px;font-weight:bold;-webkit-text-stroke:0;color:#f0f0f0;transform:rotate(-90deg);transform-origin:0 0;width:40px;text-align:center">Target</div>
<div class="a" style="left:11.6px;top:617.8px;width:1266.4px;height:12.2px;background:linear-gradient(180deg,#575757,#646464 40%,#606060 80%,#505050)"></div>
<div class="a" style="left:11.6px;top:630px;width:1266.4px;height:2px;background:#333"></div>
<div class="a" style="left:25px;top:618.5px;width:293px;height:11px;background:#444;border-radius:0 6px 6px 0"></div>
<div class="a" style="left:12px;top:618.5px;width:11px;height:11px;background:#a8a8a8;border-radius:2px"></div>
<div class="a" style="left:1268px;top:618.5px;width:10px;height:11px;background:#888;border-radius:2px"></div>
<svg class="a" style="left:0;top:0" width="1280" height="632"><path d="M15.5,624 L20,620.5 V627.5Z" fill="#444"/><path d="M1275.5,624 L1271,620.5 V627.5Z" fill="#444"/></svg>
<div class="t" id="t0" style="left:19.5px;top:24.00px;font-size:30px;color:#f4f4f4;transform:scaleX(0.9802);">ColorChecker<span style="font-size:70%;position:relative;top:-0.02em">®</span> Analysis</div>
<div class="t" id="t1" style="left:51.5px;top:76.00px;font-size:12.642999999999999px;color:#d0d0d0;">1.</div>
<div class="t" id="t2" style="left:69px;top:75.00px;font-size:13.45px;color:#eee;transform:scaleX(1.0173);">Click the <i>Read Series</i> button to measure all colors.</div>
<div class="t" id="t3" style="left:51.5px;top:99.00px;font-size:12.642999999999999px;color:#d0d0d0;">2.</div>
<div class="t" id="t4" style="left:69px;top:98.00px;font-size:13.45px;color:#eee;transform:scaleX(1.0465);">Mouse over the error bars on the deltaE chart to view a visual</div>
<div class="t" id="t5" style="left:69px;top:116.00px;font-size:13.45px;color:#eee;transform:scaleX(1.0376);">representation of each color error. 1 dE error or less is</div>
<div class="t" id="t6" style="left:69px;top:135.00px;font-size:13.45px;color:#eee;transform:scaleX(1.0564);">typically not visible.</div>
<div class="t" id="t7" style="left:69px;top:153.00px;font-size:13.45px;color:#eee;transform:scaleX(1.0381);">View a larger visual error comparison for each color value on</div>
<div class="t" id="t8" style="left:69px;top:172.00px;font-size:13.45px;color:#eee;transform:scaleX(1.0569);">the color comparator chart below.</div>
<div class="t" id="t9" style="left:51.5px;top:197.00px;font-size:12.642999999999999px;color:#d0d0d0;">3.</div>
<div class="t" id="t10" style="left:69px;top:196.00px;font-size:13.45px;color:#eee;transform:scaleX(1.0353);">Click “Save” to save data and view or print your <i>Display</i></div>
<div class="t" id="t11" style="left:69px;top:214.00px;font-size:13.45px;color:#eee;transform:scaleX(1.0227);"><i>Conformance Certificate</i>.</div>
<div class="t" id="t12" style="left:51.5px;top:237.00px;font-size:12.642999999999999px;color:#d0d0d0;">4.</div>
<div class="t" id="t13" style="left:69px;top:236.00px;font-size:13.45px;color:#eee;transform:scaleX(1.0612);">Click “Next” to check how well the display could perform with</div>
<div class="t" id="t14" style="left:69px;top:255.00px;font-size:13.45px;color:#eee;transform:scaleX(1.0022);">a corrective 3D LUT.</div>
<div class="t" id="t15" style="left:173.6px;top:311.00px;font-size:14.6px;color:#eee;transform:scaleX(1.0512);">Performance Data</div>
<div class="t" id="t16" style="left:22px;top:334.00px;font-size:17.4px;color:#eee;transform:scaleX(1.1386);">White Luminance:</div>
<div class="t" id="t17" style="left:189px;top:334.00px;font-size:17.4px;color:#eee;transform:scaleX(1.1371);">809,6</div>
<div class="t" id="t18" style="left:262px;top:334.00px;font-size:17.4px;color:#eee;transform:scaleX(1.2188);">cd/m²</div>
<div class="t" id="t19" style="left:27px;top:365.00px;font-size:17.4px;color:#eee;transform:scaleX(1.1001);">Black Luminance:</div>
<div class="t" id="t20" style="left:186.2px;top:365.00px;font-size:17.4px;color:#eee;transform:scaleX(1.2407);">0</div>
<div class="t" id="t21" style="left:262px;top:365.00px;font-size:17.4px;color:#eee;transform:scaleX(1.2188);">cd/m²</div>
<div class="t" id="t22" style="left:83.5px;top:396.00px;font-size:17.4px;color:#eee;transform:scaleX(1.1056);">Avg deltaE:</div>
<div class="t" id="t23" style="left:189.5px;top:396.00px;font-size:17.4px;color:#eee;transform:scaleX(1.1576);">1,4</div>
<div class="t" id="t24" style="left:79px;top:427.00px;font-size:17.4px;color:#eee;transform:scaleX(1.1162);">Max deltaE:</div>
<div class="t" id="t25" style="left:190px;top:427.00px;font-size:17.4px;color:#eee;transform:scaleX(1.1783);">3,7</div>
<div class="t" id="t26" style="left:257px;top:427.00px;font-size:17.4px;color:#eee;transform:scaleX(1.1360);">@ Point: 9M</div>
<div class="t" id="t27" style="left:1068px;top:378.00px;font-size:14.6px;color:#eee;transform:scaleX(1.0347);">RGB Triplet: 255, 255, 0</div>
<div class="t" id="t28" style="left:1102.5px;top:399.00px;font-size:14.6px;color:#eee;transform:scaleX(1.0533);">deltaE: 0,4</div>
</body></html>
